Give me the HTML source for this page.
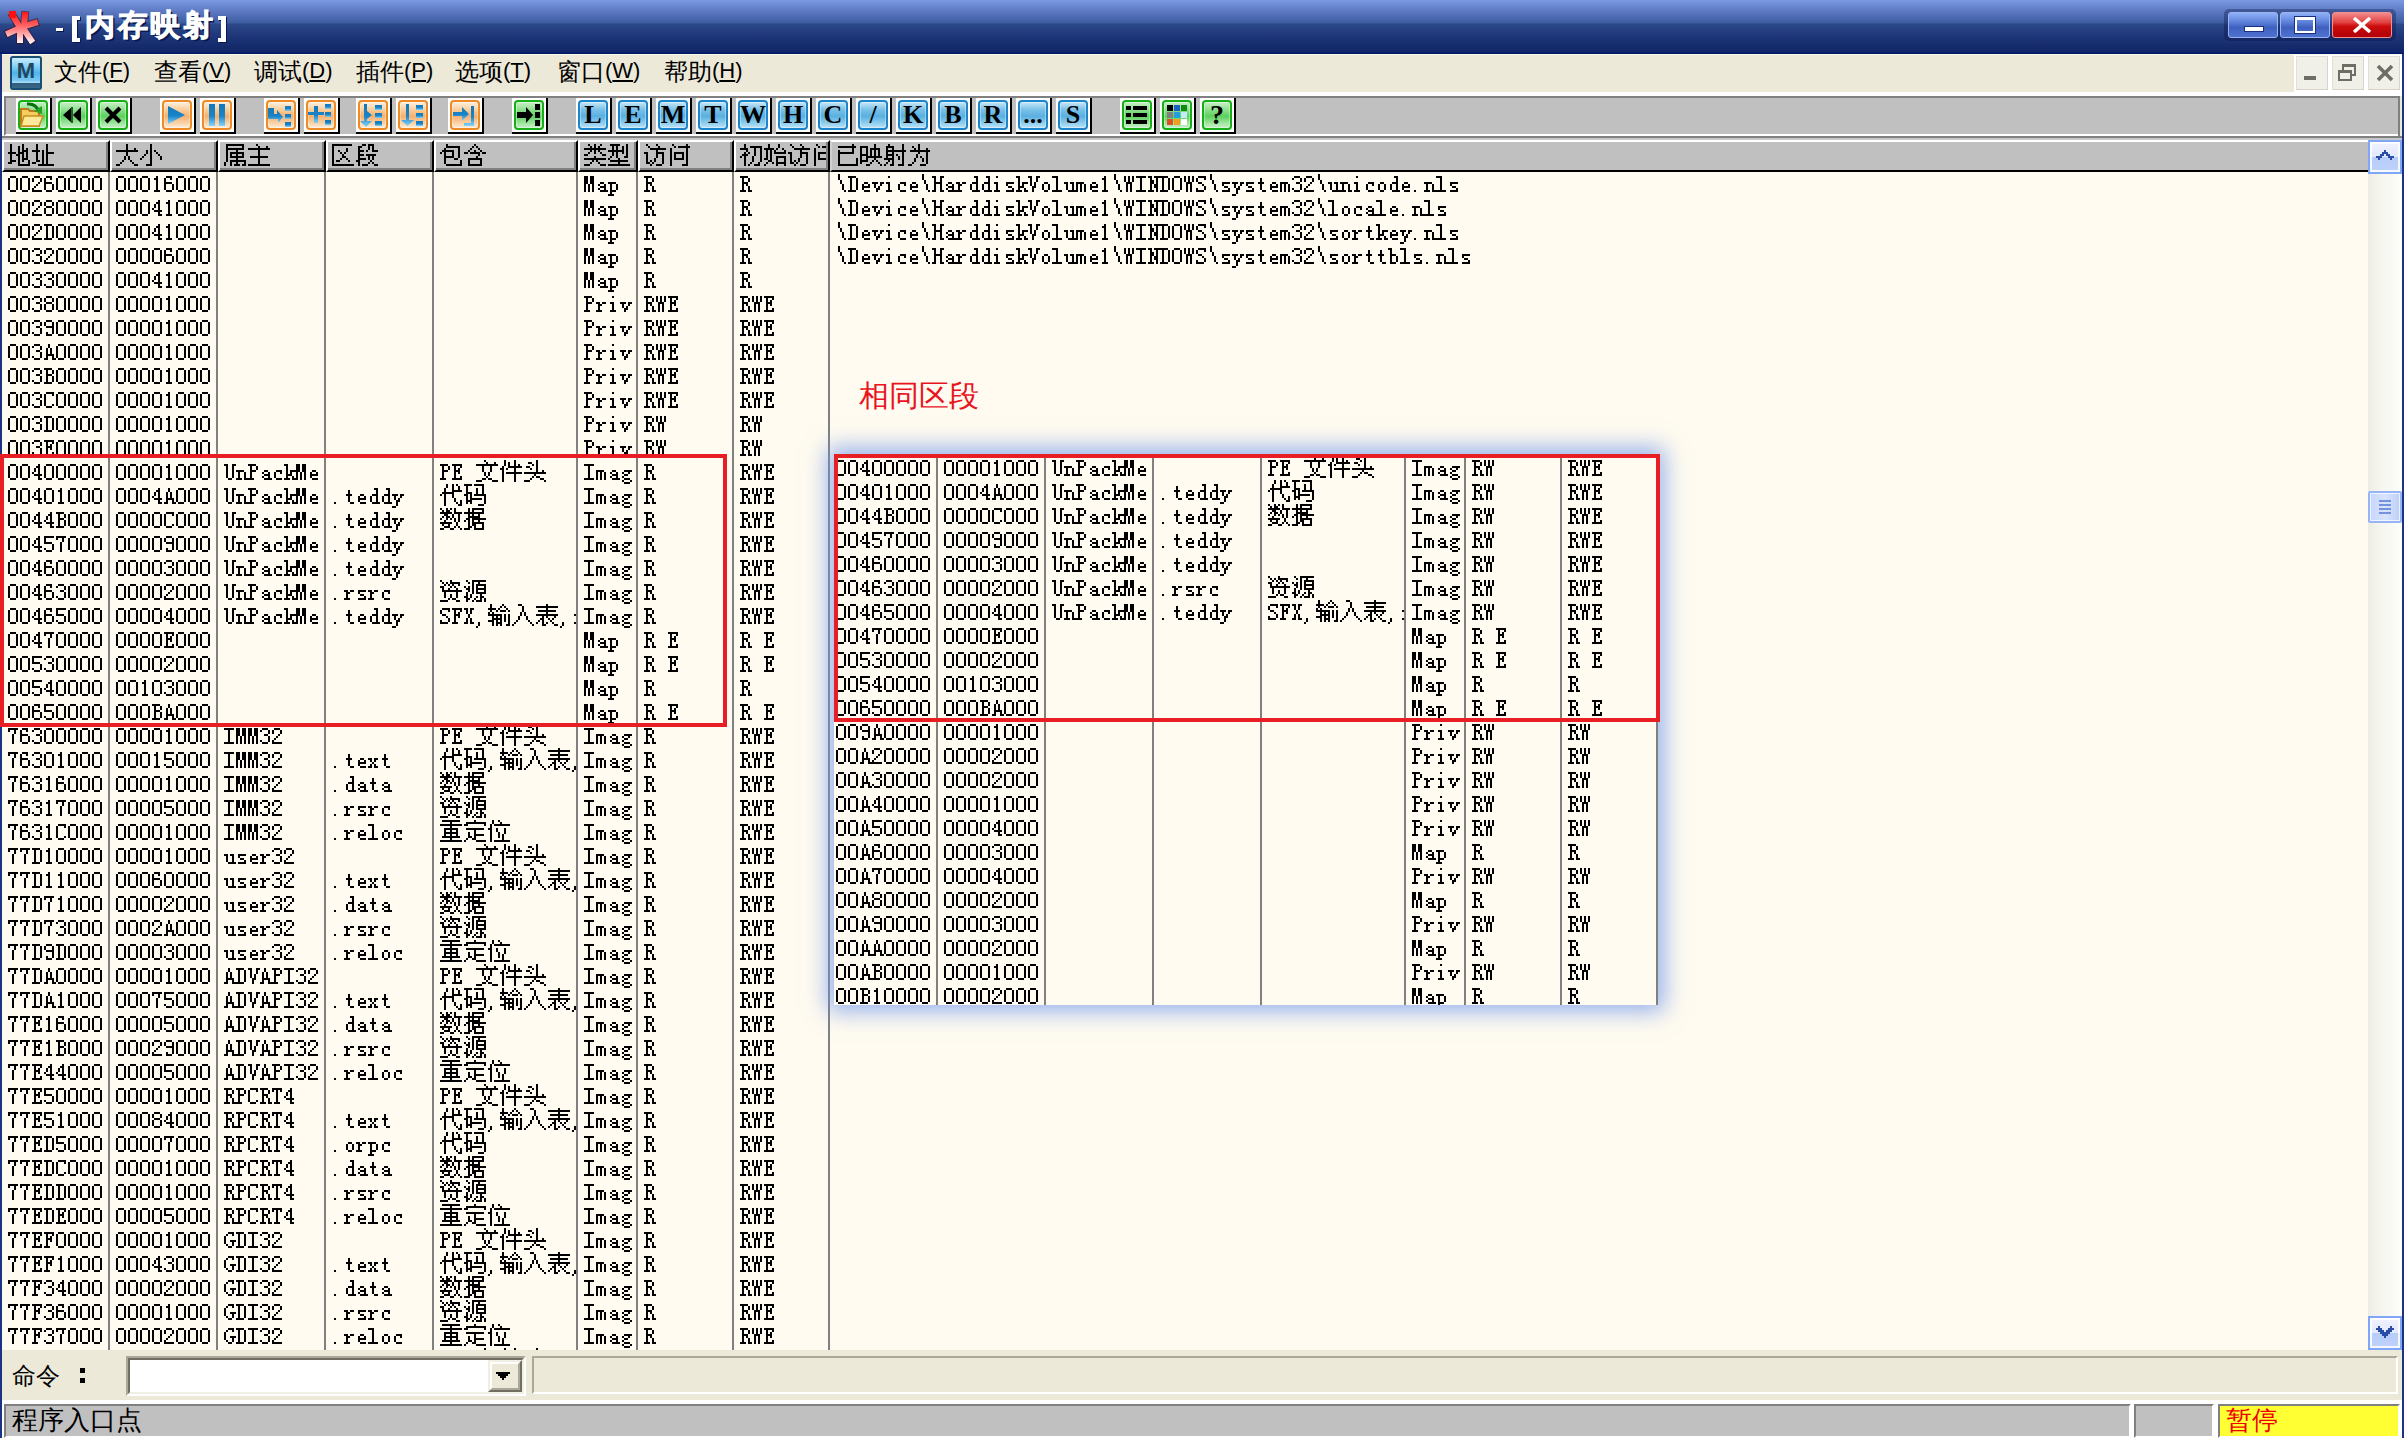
<!DOCTYPE html>
<html><head><meta charset="utf-8"><title>OllyDbg</title>
<style>
*{margin:0;padding:0;box-sizing:border-box}
html,body{width:2404px;height:1438px;overflow:hidden;background:#ECE9D8;position:relative;font-family:"Liberation Mono",monospace}
.a{position:absolute}
.col{position:absolute;overflow:hidden}
.t{position:absolute;font-family:"Liberation Mono",monospace;font-size:24px;line-height:24px;height:24px;white-space:pre;color:#000;transform:scaleX(0.8333);transform-origin:0 0;letter-spacing:0}
.c{position:absolute;font-family:"Liberation Sans",sans-serif;font-size:24px;line-height:24px;height:24px;white-space:pre;color:#000;letter-spacing:0}
.hd{position:absolute;top:140px;height:32px;background:#C0C0C0;border-top:2px solid #fff;border-left:2px solid #fff;border-right:2px solid #000;border-bottom:2px solid #000;overflow:hidden}
.hd i{position:absolute;right:0;top:0;bottom:0;width:2px;background:#808080}
.hd b{position:absolute;left:0;right:0;bottom:0;height:2px;background:#808080}
.vd{position:absolute;width:2px;background:#808080}
</style></head><body>

<svg width="0" height="0" style="position:absolute"><defs><path id="g2c" d="M2 18h2v2h-2zM2 20h2v2h-2zM0 22h2v2h-2z"/><path id="g2e" d="M2 18h2v2h-2z"/><path id="g30" d="M2 4h6v2h-6zM0 6h2v2h-2zM8 6h2v2h-2zM0 8h2v2h-2zM8 8h2v2h-2zM0 10h2v2h-2zM8 10h2v2h-2zM0 12h2v2h-2zM8 12h2v2h-2zM0 14h2v2h-2zM8 14h2v2h-2zM0 16h2v2h-2zM8 16h2v2h-2zM2 18h6v2h-6z"/><path id="g31" d="M4 4h2v2h-2zM2 6h4v2h-4zM4 8h2v2h-2zM4 10h2v2h-2zM4 12h2v2h-2zM4 14h2v2h-2zM4 16h2v2h-2zM2 18h6v2h-6z"/><path id="g32" d="M2 4h6v2h-6zM0 6h2v2h-2zM8 6h2v2h-2zM0 8h2v2h-2zM8 8h2v2h-2zM6 10h2v2h-2zM4 12h2v2h-2zM2 14h2v2h-2zM0 16h2v2h-2zM0 18h10v2h-10z"/><path id="g33" d="M2 4h6v2h-6zM0 6h2v2h-2zM8 6h2v2h-2zM8 8h2v2h-2zM4 10h4v2h-4zM8 12h2v2h-2zM8 14h2v2h-2zM0 16h2v2h-2zM8 16h2v2h-2zM2 18h6v2h-6z"/><path id="g34" d="M6 4h2v2h-2zM4 6h4v2h-4zM2 8h2v2h-2zM6 8h2v2h-2zM2 10h2v2h-2zM6 10h2v2h-2zM0 12h2v2h-2zM6 12h2v2h-2zM2 14h8v2h-8zM6 16h2v2h-2zM6 18h4v2h-4z"/><path id="g35" d="M0 4h10v2h-10zM0 6h2v2h-2zM0 8h2v2h-2zM0 10h8v2h-8zM8 12h2v2h-2zM8 14h2v2h-2zM0 16h2v2h-2zM8 16h2v2h-2zM2 18h6v2h-6z"/><path id="g36" d="M2 4h6v2h-6zM0 6h2v2h-2zM6 6h2v2h-2zM0 8h2v2h-2zM0 10h8v2h-8zM0 12h2v2h-2zM8 12h2v2h-2zM0 14h2v2h-2zM8 14h2v2h-2zM0 16h2v2h-2zM8 16h2v2h-2zM2 18h6v2h-6z"/><path id="g37" d="M0 4h10v2h-10zM0 6h2v2h-2zM6 6h2v2h-2zM6 8h2v2h-2zM4 10h2v2h-2zM4 12h2v2h-2zM4 14h2v2h-2zM4 16h2v2h-2zM4 18h2v2h-2z"/><path id="g38" d="M2 4h6v2h-6zM0 6h2v2h-2zM8 6h2v2h-2zM0 8h2v2h-2zM8 8h2v2h-2zM2 10h6v2h-6zM0 12h2v2h-2zM8 12h2v2h-2zM0 14h2v2h-2zM8 14h2v2h-2zM0 16h2v2h-2zM8 16h2v2h-2zM2 18h6v2h-6z"/><path id="g39" d="M2 4h6v2h-6zM0 6h2v2h-2zM8 6h2v2h-2zM0 8h2v2h-2zM8 8h2v2h-2zM2 10h8v2h-8zM8 12h2v2h-2zM8 14h2v2h-2zM2 16h2v2h-2zM8 16h2v2h-2zM2 18h6v2h-6z"/><path id="g41" d="M4 4h2v2h-2zM4 6h2v2h-2zM2 8h2v2h-2zM6 8h2v2h-2zM2 10h2v2h-2zM6 10h2v2h-2zM2 12h2v2h-2zM6 12h2v2h-2zM2 14h8v2h-8zM2 16h2v2h-2zM8 16h2v2h-2zM0 18h4v2h-4zM8 18h4v2h-4z"/><path id="g42" d="M0 4h8v2h-8zM2 6h2v2h-2zM8 6h2v2h-2zM2 8h2v2h-2zM8 8h2v2h-2zM2 10h6v2h-6zM2 12h2v2h-2zM8 12h2v2h-2zM2 14h2v2h-2zM8 14h2v2h-2zM2 16h2v2h-2zM8 16h2v2h-2zM0 18h8v2h-8z"/><path id="g43" d="M2 4h8v2h-8zM0 6h2v2h-2zM8 6h2v2h-2zM0 8h2v2h-2zM0 10h2v2h-2zM0 12h2v2h-2zM0 14h2v2h-2zM0 16h2v2h-2zM8 16h2v2h-2zM2 18h6v2h-6z"/><path id="g44" d="M0 4h8v2h-8zM2 6h2v2h-2zM8 6h2v2h-2zM2 8h2v2h-2zM8 8h2v2h-2zM2 10h2v2h-2zM8 10h2v2h-2zM2 12h2v2h-2zM8 12h2v2h-2zM2 14h2v2h-2zM8 14h2v2h-2zM2 16h2v2h-2zM8 16h2v2h-2zM0 18h8v2h-8z"/><path id="g45" d="M0 4h10v2h-10zM2 6h2v2h-2zM8 6h2v2h-2zM2 8h2v2h-2zM6 8h2v2h-2zM2 10h6v2h-6zM2 12h2v2h-2zM6 12h2v2h-2zM2 14h2v2h-2zM2 16h2v2h-2zM8 16h2v2h-2zM0 18h10v2h-10z"/><path id="g46" d="M0 4h10v2h-10zM2 6h2v2h-2zM8 6h2v2h-2zM2 8h2v2h-2zM6 8h2v2h-2zM2 10h6v2h-6zM2 12h2v2h-2zM6 12h2v2h-2zM2 14h2v2h-2zM2 16h2v2h-2zM0 18h6v2h-6z"/><path id="g47" d="M4 4h6v2h-6zM2 6h2v2h-2zM8 6h2v2h-2zM0 8h2v2h-2zM0 10h2v2h-2zM0 12h2v2h-2zM6 12h6v2h-6zM0 14h2v2h-2zM8 14h2v2h-2zM2 16h2v2h-2zM8 16h2v2h-2zM4 18h4v2h-4z"/><path id="g48" d="M0 4h4v2h-4zM8 4h4v2h-4zM2 6h2v2h-2zM8 6h2v2h-2zM2 8h2v2h-2zM8 8h2v2h-2zM2 10h8v2h-8zM2 12h2v2h-2zM8 12h2v2h-2zM2 14h2v2h-2zM8 14h2v2h-2zM2 16h2v2h-2zM8 16h2v2h-2zM0 18h4v2h-4zM8 18h4v2h-4z"/><path id="g49" d="M0 4h10v2h-10zM4 6h2v2h-2zM4 8h2v2h-2zM4 10h2v2h-2zM4 12h2v2h-2zM4 14h2v2h-2zM4 16h2v2h-2zM0 18h10v2h-10z"/><path id="g4d" d="M0 4h4v2h-4zM6 4h4v2h-4zM0 6h4v2h-4zM6 6h4v2h-4zM0 8h4v2h-4zM6 8h4v2h-4zM0 10h4v2h-4zM6 10h4v2h-4zM0 12h2v2h-2zM4 12h2v2h-2zM8 12h2v2h-2zM0 14h2v2h-2zM4 14h2v2h-2zM8 14h2v2h-2zM0 16h2v2h-2zM4 16h2v2h-2zM8 16h2v2h-2zM0 18h2v2h-2zM4 18h2v2h-2zM8 18h2v2h-2z"/><path id="g4e" d="M0 4h4v2h-4zM6 4h6v2h-6zM2 6h2v2h-2zM8 6h2v2h-2zM2 8h4v2h-4zM8 8h2v2h-2zM2 10h4v2h-4zM8 10h2v2h-2zM2 12h2v2h-2zM6 12h4v2h-4zM2 14h2v2h-2zM6 14h4v2h-4zM2 16h2v2h-2zM8 16h2v2h-2zM0 18h6v2h-6zM8 18h2v2h-2z"/><path id="g4f" d="M2 4h6v2h-6zM0 6h2v2h-2zM8 6h2v2h-2zM0 8h2v2h-2zM8 8h2v2h-2zM0 10h2v2h-2zM8 10h2v2h-2zM0 12h2v2h-2zM8 12h2v2h-2zM0 14h2v2h-2zM8 14h2v2h-2zM0 16h2v2h-2zM8 16h2v2h-2zM2 18h6v2h-6z"/><path id="g50" d="M0 4h8v2h-8zM2 6h2v2h-2zM8 6h2v2h-2zM2 8h2v2h-2zM8 8h2v2h-2zM2 10h6v2h-6zM2 12h2v2h-2zM2 14h2v2h-2zM2 16h2v2h-2zM0 18h6v2h-6z"/><path id="g52" d="M0 4h8v2h-8zM2 6h2v2h-2zM8 6h2v2h-2zM2 8h2v2h-2zM8 8h2v2h-2zM2 10h6v2h-6zM2 12h2v2h-2zM6 12h2v2h-2zM2 14h2v2h-2zM8 14h2v2h-2zM2 16h2v2h-2zM8 16h2v2h-2zM0 18h6v2h-6zM8 18h4v2h-4z"/><path id="g53" d="M2 4h8v2h-8zM0 6h2v2h-2zM8 6h2v2h-2zM0 8h2v2h-2zM2 10h4v2h-4zM6 12h2v2h-2zM8 14h2v2h-2zM0 16h2v2h-2zM8 16h2v2h-2zM0 18h8v2h-8z"/><path id="g54" d="M0 4h10v2h-10zM0 6h2v2h-2zM4 6h2v2h-2zM8 6h2v2h-2zM4 8h2v2h-2zM4 10h2v2h-2zM4 12h2v2h-2zM4 14h2v2h-2zM4 16h2v2h-2zM2 18h6v2h-6z"/><path id="g55" d="M0 4h4v2h-4zM8 4h4v2h-4zM2 6h2v2h-2zM8 6h2v2h-2zM2 8h2v2h-2zM8 8h2v2h-2zM2 10h2v2h-2zM8 10h2v2h-2zM2 12h2v2h-2zM8 12h2v2h-2zM2 14h2v2h-2zM8 14h2v2h-2zM2 16h2v2h-2zM8 16h2v2h-2zM4 18h4v2h-4z"/><path id="g56" d="M0 4h4v2h-4zM8 4h4v2h-4zM2 6h2v2h-2zM8 6h2v2h-2zM2 8h2v2h-2zM8 8h2v2h-2zM2 10h2v2h-2zM6 10h2v2h-2zM2 12h2v2h-2zM6 12h2v2h-2zM4 14h4v2h-4zM4 16h2v2h-2zM4 18h2v2h-2z"/><path id="g57" d="M0 4h2v2h-2zM4 4h2v2h-2zM8 4h2v2h-2zM0 6h2v2h-2zM4 6h2v2h-2zM8 6h2v2h-2zM0 8h2v2h-2zM4 8h2v2h-2zM8 8h2v2h-2zM2 10h6v2h-6zM2 12h2v2h-2zM6 12h2v2h-2zM2 14h2v2h-2zM6 14h2v2h-2zM2 16h2v2h-2zM6 16h2v2h-2zM2 18h2v2h-2zM6 18h2v2h-2z"/><path id="g58" d="M0 4h4v2h-4zM6 4h4v2h-4zM2 6h2v2h-2zM6 6h2v2h-2zM2 8h2v2h-2zM6 8h2v2h-2zM4 10h2v2h-2zM4 12h2v2h-2zM2 14h2v2h-2zM6 14h2v2h-2zM2 16h2v2h-2zM6 16h2v2h-2zM0 18h4v2h-4zM6 18h4v2h-4z"/><path id="g5c" d="M2 2h2v2h-2zM2 4h2v2h-2zM2 6h2v2h-2zM4 8h2v2h-2zM4 10h2v2h-2zM6 12h2v2h-2zM6 14h2v2h-2zM6 16h2v2h-2zM8 18h2v2h-2z"/><path id="g61" d="M4 10h4v2h-4zM2 12h2v2h-2zM8 12h2v2h-2zM4 14h6v2h-6zM2 16h2v2h-2zM8 16h2v2h-2zM4 18h8v2h-8z"/><path id="g62" d="M0 4h4v2h-4zM2 6h2v2h-2zM2 8h2v2h-2zM2 10h6v2h-6zM2 12h2v2h-2zM8 12h2v2h-2zM2 14h2v2h-2zM8 14h2v2h-2zM2 16h2v2h-2zM8 16h2v2h-2zM2 18h6v2h-6z"/><path id="g63" d="M4 10h6v2h-6zM2 12h2v2h-2zM8 12h2v2h-2zM2 14h2v2h-2zM2 16h2v2h-2zM4 18h6v2h-6z"/><path id="g64" d="M6 4h4v2h-4zM8 6h2v2h-2zM8 8h2v2h-2zM4 10h6v2h-6zM2 12h2v2h-2zM8 12h2v2h-2zM2 14h2v2h-2zM8 14h2v2h-2zM2 16h2v2h-2zM8 16h2v2h-2zM4 18h8v2h-8z"/><path id="g65" d="M4 10h4v2h-4zM2 12h2v2h-2zM8 12h2v2h-2zM2 14h8v2h-8zM2 16h2v2h-2zM4 18h6v2h-6z"/><path id="g67" d="M4 10h8v2h-8zM2 12h2v2h-2zM8 12h2v2h-2zM4 14h4v2h-4zM2 16h2v2h-2zM4 18h6v2h-6zM2 20h2v2h-2zM10 20h2v2h-2zM4 22h6v2h-6z"/><path id="g69" d="M4 4h2v2h-2zM2 10h4v2h-4zM4 12h2v2h-2zM4 14h2v2h-2zM4 16h2v2h-2zM2 18h6v2h-6z"/><path id="g6b" d="M0 4h4v2h-4zM2 6h2v2h-2zM2 8h2v2h-2zM2 10h2v2h-2zM6 10h6v2h-6zM2 12h2v2h-2zM6 12h2v2h-2zM2 14h6v2h-6zM2 16h2v2h-2zM8 16h2v2h-2zM0 18h6v2h-6zM8 18h4v2h-4z"/><path id="g6c" d="M0 4h6v2h-6zM4 6h2v2h-2zM4 8h2v2h-2zM4 10h2v2h-2zM4 12h2v2h-2zM4 14h2v2h-2zM4 16h2v2h-2zM0 18h10v2h-10z"/><path id="g6d" d="M0 10h8v2h-8zM0 12h2v2h-2zM4 12h2v2h-2zM8 12h2v2h-2zM0 14h2v2h-2zM4 14h2v2h-2zM8 14h2v2h-2zM0 16h2v2h-2zM4 16h2v2h-2zM8 16h2v2h-2zM0 18h2v2h-2zM4 18h2v2h-2zM8 18h2v2h-2z"/><path id="g6e" d="M0 10h8v2h-8zM2 12h2v2h-2zM8 12h2v2h-2zM2 14h2v2h-2zM8 14h2v2h-2zM2 16h2v2h-2zM8 16h2v2h-2zM0 18h6v2h-6zM8 18h4v2h-4z"/><path id="g6f" d="M4 10h4v2h-4zM2 12h2v2h-2zM8 12h2v2h-2zM2 14h2v2h-2zM8 14h2v2h-2zM2 16h2v2h-2zM8 16h2v2h-2zM4 18h4v2h-4z"/><path id="g70" d="M0 10h8v2h-8zM2 12h2v2h-2zM8 12h2v2h-2zM2 14h2v2h-2zM8 14h2v2h-2zM2 16h2v2h-2zM8 16h2v2h-2zM2 18h6v2h-6zM2 20h2v2h-2zM0 22h6v2h-6z"/><path id="g72" d="M0 10h4v2h-4zM6 10h4v2h-4zM2 12h4v2h-4zM2 14h2v2h-2zM2 16h2v2h-2zM0 18h6v2h-6z"/><path id="g73" d="M2 10h8v2h-8zM2 12h2v2h-2zM4 14h4v2h-4zM8 16h2v2h-2zM2 18h8v2h-8z"/><path id="g74" d="M4 6h2v2h-2zM4 8h2v2h-2zM2 10h6v2h-6zM4 12h2v2h-2zM4 14h2v2h-2zM4 16h2v2h-2zM6 18h4v2h-4z"/><path id="g75" d="M0 10h4v2h-4zM6 10h4v2h-4zM2 12h2v2h-2zM8 12h2v2h-2zM2 14h2v2h-2zM8 14h2v2h-2zM2 16h2v2h-2zM8 16h2v2h-2zM4 18h8v2h-8z"/><path id="g76" d="M0 10h6v2h-6zM8 10h4v2h-4zM2 12h2v2h-2zM8 12h2v2h-2zM2 14h2v2h-2zM6 14h2v2h-2zM4 16h4v2h-4zM4 18h2v2h-2z"/><path id="g78" d="M0 10h4v2h-4zM6 10h4v2h-4zM2 12h2v2h-2zM6 12h2v2h-2zM4 14h2v2h-2zM2 16h2v2h-2zM6 16h2v2h-2zM0 18h4v2h-4zM6 18h4v2h-4z"/><path id="g79" d="M0 10h6v2h-6zM8 10h4v2h-4zM2 12h2v2h-2zM8 12h2v2h-2zM2 14h2v2h-2zM6 14h2v2h-2zM4 16h4v2h-4zM4 18h2v2h-2zM4 20h2v2h-2zM0 22h4v2h-4z"/><path id="g4e3a" d="M10 0h2v2h-2zM4 2h2v2h-2zM10 2h2v2h-2zM6 4h2v2h-2zM10 4h2v2h-2zM18 4h2v2h-2zM2 6h20v2h-20zM10 8h2v2h-2zM18 8h2v2h-2zM8 10h2v2h-2zM18 10h2v2h-2zM8 12h2v2h-2zM12 12h2v2h-2zM18 12h2v2h-2zM6 14h2v2h-2zM14 14h2v2h-2zM18 14h2v2h-2zM6 16h2v2h-2zM14 16h2v2h-2zM18 16h2v2h-2zM4 18h2v2h-2zM18 18h2v2h-2zM0 20h4v2h-4zM12 20h6v2h-6z"/><path id="g4e3b" d="M8 0h2v2h-2zM10 2h2v2h-2zM18 2h2v2h-2zM0 4h22v2h-22zM10 6h2v2h-2zM10 8h2v2h-2zM10 10h2v2h-2zM2 12h18v2h-18zM10 14h2v2h-2zM10 16h2v2h-2zM10 18h2v2h-2zM0 20h22v2h-22z"/><path id="g4ee3" d="M6 0h2v2h-2zM12 0h2v2h-2zM16 0h2v2h-2zM6 2h2v2h-2zM12 2h2v2h-2zM18 2h2v2h-2zM4 4h2v2h-2zM12 4h2v2h-2zM18 4h2v2h-2zM4 6h2v2h-2zM12 6h10v2h-10zM2 8h12v2h-12zM0 10h2v2h-2zM4 10h2v2h-2zM12 10h2v2h-2zM4 12h2v2h-2zM12 12h2v2h-2zM4 14h2v2h-2zM14 14h2v2h-2zM4 16h2v2h-2zM14 16h2v2h-2zM20 16h2v2h-2zM4 18h2v2h-2zM16 18h2v2h-2zM20 18h2v2h-2zM4 20h2v2h-2zM18 20h4v2h-4z"/><path id="g4ef6" d="M4 0h2v2h-2zM14 0h2v2h-2zM4 2h2v2h-2zM8 2h2v2h-2zM14 2h2v2h-2zM4 4h2v2h-2zM8 4h2v2h-2zM14 4h2v2h-2zM18 4h2v2h-2zM2 6h2v2h-2zM8 6h14v2h-14zM0 8h4v2h-4zM6 8h2v2h-2zM14 8h2v2h-2zM2 10h2v2h-2zM14 10h2v2h-2zM2 12h2v2h-2zM6 12h16v2h-16zM2 14h2v2h-2zM14 14h2v2h-2zM2 16h2v2h-2zM14 16h2v2h-2zM2 18h2v2h-2zM14 18h2v2h-2zM2 20h2v2h-2zM14 20h2v2h-2z"/><path id="g4f4d" d="M4 0h2v2h-2zM10 0h2v2h-2zM4 2h2v2h-2zM12 2h2v2h-2zM2 4h2v2h-2zM6 4h16v2h-16zM2 6h2v2h-2zM0 8h4v2h-4zM8 8h2v2h-2zM16 8h2v2h-2zM2 10h2v2h-2zM8 10h2v2h-2zM16 10h2v2h-2zM2 12h2v2h-2zM10 12h2v2h-2zM16 12h2v2h-2zM2 14h2v2h-2zM10 14h2v2h-2zM14 14h2v2h-2zM2 16h2v2h-2zM10 16h2v2h-2zM14 16h2v2h-2zM2 18h2v2h-2zM14 18h2v2h-2zM2 20h2v2h-2zM6 20h16v2h-16z"/><path id="g5165" d="M6 0h4v2h-4zM10 2h2v2h-2zM10 4h2v2h-2zM10 6h2v2h-2zM8 8h2v2h-2zM12 8h2v2h-2zM8 10h2v2h-2zM12 10h2v2h-2zM6 12h2v2h-2zM14 12h2v2h-2zM6 14h2v2h-2zM14 14h2v2h-2zM4 16h2v2h-2zM16 16h2v2h-2zM2 18h2v2h-2zM18 18h2v2h-2zM0 20h2v2h-2zM20 20h2v2h-2z"/><path id="g521d" d="M4 0h2v2h-2zM4 2h2v2h-2zM10 2h12v2h-12zM0 4h8v2h-8zM14 4h2v2h-2zM20 4h2v2h-2zM6 6h2v2h-2zM14 6h2v2h-2zM20 6h2v2h-2zM4 8h2v2h-2zM8 8h2v2h-2zM14 8h2v2h-2zM20 8h2v2h-2zM2 10h6v2h-6zM14 10h2v2h-2zM20 10h2v2h-2zM0 12h2v2h-2zM4 12h2v2h-2zM12 12h2v2h-2zM20 12h2v2h-2zM4 14h2v2h-2zM12 14h2v2h-2zM20 14h2v2h-2zM4 16h2v2h-2zM12 16h2v2h-2zM20 16h2v2h-2zM4 18h2v2h-2zM10 18h2v2h-2zM18 18h2v2h-2zM4 20h2v2h-2zM8 20h2v2h-2zM14 20h6v2h-6z"/><path id="g5305" d="M6 0h2v2h-2zM6 2h14v2h-14zM4 4h2v2h-2zM18 4h2v2h-2zM2 6h12v2h-12zM18 6h2v2h-2zM0 8h2v2h-2zM4 8h2v2h-2zM12 8h2v2h-2zM18 8h2v2h-2zM4 10h2v2h-2zM12 10h2v2h-2zM18 10h2v2h-2zM4 12h10v2h-10zM18 12h2v2h-2zM4 14h2v2h-2zM14 14h4v2h-4zM4 16h2v2h-2zM20 16h2v2h-2zM4 18h2v2h-2zM20 18h2v2h-2zM6 20h16v2h-16z"/><path id="g533a" d="M0 0h20v2h-20zM0 2h2v2h-2zM0 4h2v2h-2zM14 4h2v2h-2zM0 6h2v2h-2zM6 6h2v2h-2zM14 6h2v2h-2zM0 8h2v2h-2zM8 8h2v2h-2zM12 8h2v2h-2zM0 10h2v2h-2zM10 10h2v2h-2zM0 12h2v2h-2zM10 12h4v2h-4zM0 14h2v2h-2zM8 14h2v2h-2zM14 14h2v2h-2zM0 16h2v2h-2zM4 16h4v2h-4zM16 16h2v2h-2zM0 18h2v2h-2zM0 20h22v2h-22z"/><path id="g542b" d="M10 0h2v2h-2zM8 2h2v2h-2zM12 2h2v2h-2zM6 4h2v2h-2zM14 4h2v2h-2zM4 6h2v2h-2zM10 6h2v2h-2zM16 6h2v2h-2zM0 8h4v2h-4zM6 8h10v2h-10zM18 8h4v2h-4zM14 10h2v2h-2zM12 12h2v2h-2zM4 14h14v2h-14zM4 16h2v2h-2zM16 16h2v2h-2zM4 18h2v2h-2zM16 18h2v2h-2zM4 20h14v2h-14z"/><path id="g5730" d="M2 0h2v2h-2zM14 0h2v2h-2zM2 2h2v2h-2zM10 2h2v2h-2zM14 2h2v2h-2zM2 4h2v2h-2zM10 4h2v2h-2zM14 4h2v2h-2zM18 4h2v2h-2zM2 6h2v2h-2zM10 6h2v2h-2zM14 6h6v2h-6zM0 8h8v2h-8zM10 8h6v2h-6zM18 8h2v2h-2zM2 10h2v2h-2zM8 10h4v2h-4zM14 10h2v2h-2zM18 10h2v2h-2zM2 12h2v2h-2zM10 12h2v2h-2zM14 12h2v2h-2zM18 12h2v2h-2zM2 14h2v2h-2zM10 14h2v2h-2zM14 14h6v2h-6zM2 16h6v2h-6zM10 16h2v2h-2zM14 16h2v2h-2zM20 16h2v2h-2zM0 18h4v2h-4zM10 18h2v2h-2zM20 18h2v2h-2zM10 20h12v2h-12z"/><path id="g5740" d="M4 0h2v2h-2zM14 0h2v2h-2zM4 2h2v2h-2zM14 2h2v2h-2zM4 4h2v2h-2zM14 4h2v2h-2zM0 6h8v2h-8zM10 6h2v2h-2zM14 6h2v2h-2zM4 8h2v2h-2zM10 8h2v2h-2zM14 8h8v2h-8zM4 10h2v2h-2zM10 10h2v2h-2zM14 10h2v2h-2zM4 12h2v2h-2zM10 12h2v2h-2zM14 12h2v2h-2zM4 14h2v2h-2zM10 14h2v2h-2zM14 14h2v2h-2zM4 16h4v2h-4zM10 16h2v2h-2zM14 16h2v2h-2zM0 18h4v2h-4zM10 18h2v2h-2zM14 18h2v2h-2zM6 20h16v2h-16z"/><path id="g578b" d="M2 0h10v2h-10zM18 0h2v2h-2zM4 2h2v2h-2zM8 2h2v2h-2zM14 2h2v2h-2zM18 2h2v2h-2zM4 4h2v2h-2zM8 4h2v2h-2zM14 4h2v2h-2zM18 4h2v2h-2zM0 6h16v2h-16zM18 6h2v2h-2zM4 8h2v2h-2zM8 8h2v2h-2zM14 8h2v2h-2zM18 8h2v2h-2zM4 10h2v2h-2zM8 10h2v2h-2zM18 10h2v2h-2zM2 12h2v2h-2zM8 12h2v2h-2zM16 12h4v2h-4zM0 14h2v2h-2zM10 14h2v2h-2zM2 16h18v2h-18zM10 18h2v2h-2zM0 20h22v2h-22z"/><path id="g5927" d="M10 0h2v2h-2zM10 2h2v2h-2zM10 4h2v2h-2zM18 4h2v2h-2zM0 6h22v2h-22zM10 8h2v2h-2zM10 10h2v2h-2zM8 12h2v2h-2zM12 12h2v2h-2zM8 14h2v2h-2zM12 14h2v2h-2zM6 16h2v2h-2zM14 16h2v2h-2zM4 18h2v2h-2zM16 18h2v2h-2zM0 20h4v2h-4zM18 20h4v2h-4z"/><path id="g5934" d="M12 0h2v2h-2zM4 2h4v2h-4zM12 2h2v2h-2zM8 4h2v2h-2zM12 4h2v2h-2zM2 6h4v2h-4zM12 6h2v2h-2zM6 8h2v2h-2zM12 8h2v2h-2zM12 10h2v2h-2zM18 10h2v2h-2zM0 12h22v2h-22zM10 14h2v2h-2zM8 16h2v2h-2zM12 16h4v2h-4zM6 18h2v2h-2zM16 18h4v2h-4zM0 20h6v2h-6zM20 20h2v2h-2z"/><path id="g59cb" d="M4 0h2v2h-2zM14 0h2v2h-2zM4 2h2v2h-2zM14 2h2v2h-2zM0 4h10v2h-10zM12 4h2v2h-2zM18 4h2v2h-2zM2 6h2v2h-2zM6 6h2v2h-2zM10 6h2v2h-2zM20 6h2v2h-2zM2 8h2v2h-2zM6 8h2v2h-2zM10 8h12v2h-12zM2 10h2v2h-2zM6 10h2v2h-2zM2 12h2v2h-2zM6 12h2v2h-2zM12 12h10v2h-10zM0 14h4v2h-4zM6 14h2v2h-2zM12 14h2v2h-2zM20 14h2v2h-2zM4 16h4v2h-4zM12 16h2v2h-2zM20 16h2v2h-2zM2 18h2v2h-2zM8 18h2v2h-2zM12 18h10v2h-10zM0 20h2v2h-2zM12 20h2v2h-2zM20 20h2v2h-2z"/><path id="g5b9a" d="M10 0h2v2h-2zM2 2h20v2h-20zM0 4h4v2h-4zM20 4h2v2h-2zM2 8h18v2h-18zM10 10h2v2h-2zM4 12h2v2h-2zM10 12h2v2h-2zM4 14h2v2h-2zM10 14h10v2h-10zM4 16h4v2h-4zM10 16h2v2h-2zM2 18h2v2h-2zM8 18h4v2h-4zM0 20h2v2h-2zM12 20h10v2h-10z"/><path id="g5c04" d="M4 0h2v2h-2zM18 0h2v2h-2zM2 2h8v2h-8zM18 2h2v2h-2zM2 4h2v2h-2zM8 4h2v2h-2zM18 4h2v2h-2zM2 6h20v2h-20zM2 8h2v2h-2zM8 8h2v2h-2zM18 8h2v2h-2zM2 10h8v2h-8zM12 10h2v2h-2zM18 10h2v2h-2zM2 12h2v2h-2zM8 12h2v2h-2zM14 12h2v2h-2zM18 12h2v2h-2zM0 14h10v2h-10zM14 14h2v2h-2zM18 14h2v2h-2zM4 16h2v2h-2zM8 16h2v2h-2zM18 16h2v2h-2zM2 18h2v2h-2zM8 18h2v2h-2zM18 18h2v2h-2zM0 20h2v2h-2zM6 20h4v2h-4zM14 20h6v2h-6z"/><path id="g5c0f" d="M10 0h2v2h-2zM10 2h2v2h-2zM10 4h2v2h-2zM6 6h2v2h-2zM10 6h2v2h-2zM14 6h2v2h-2zM6 8h2v2h-2zM10 8h2v2h-2zM16 8h2v2h-2zM4 10h2v2h-2zM10 10h2v2h-2zM18 10h2v2h-2zM2 12h2v2h-2zM10 12h2v2h-2zM20 12h2v2h-2zM0 14h2v2h-2zM10 14h2v2h-2zM20 14h2v2h-2zM10 16h2v2h-2zM10 18h2v2h-2zM6 20h6v2h-6z"/><path id="g5c5e" d="M2 0h18v2h-18zM2 2h2v2h-2zM18 2h2v2h-2zM2 4h18v2h-18zM2 6h2v2h-2zM12 6h2v2h-2zM2 8h2v2h-2zM6 8h14v2h-14zM2 10h2v2h-2zM6 10h2v2h-2zM12 10h2v2h-2zM18 10h2v2h-2zM2 12h2v2h-2zM6 12h14v2h-14zM2 14h2v2h-2zM12 14h2v2h-2zM2 16h2v2h-2zM6 16h16v2h-16zM0 18h2v2h-2zM6 18h2v2h-2zM12 18h2v2h-2zM20 18h2v2h-2zM0 20h2v2h-2zM6 20h2v2h-2zM10 20h6v2h-6zM18 20h4v2h-4z"/><path id="g5df2" d="M16 0h2v2h-2zM2 2h18v2h-18zM16 4h2v2h-2zM2 6h2v2h-2zM16 6h2v2h-2zM2 8h16v2h-16zM2 10h2v2h-2zM2 12h2v2h-2zM2 14h2v2h-2zM20 14h2v2h-2zM2 16h2v2h-2zM20 16h2v2h-2zM2 18h2v2h-2zM20 18h2v2h-2zM2 20h20v2h-20z"/><path id="g636e" d="M4 0h2v2h-2zM8 0h12v2h-12zM4 2h2v2h-2zM8 2h2v2h-2zM18 2h2v2h-2zM0 4h20v2h-20zM4 6h2v2h-2zM8 6h2v2h-2zM14 6h2v2h-2zM4 8h12v2h-12zM2 10h4v2h-4zM8 10h14v2h-14zM0 12h2v2h-2zM4 12h2v2h-2zM8 12h2v2h-2zM14 12h2v2h-2zM4 14h2v2h-2zM8 14h12v2h-12zM4 16h2v2h-2zM8 16h4v2h-4zM18 16h2v2h-2zM4 18h4v2h-4zM10 18h2v2h-2zM18 18h2v2h-2zM0 20h6v2h-6zM10 20h10v2h-10z"/><path id="g6570" d="M0 0h2v2h-2zM6 0h2v2h-2zM10 0h2v2h-2zM14 0h2v2h-2zM2 2h2v2h-2zM6 2h4v2h-4zM14 2h2v2h-2zM0 4h12v2h-12zM14 4h8v2h-8zM4 6h4v2h-4zM12 6h2v2h-2zM18 6h2v2h-2zM2 8h2v2h-2zM6 8h4v2h-4zM12 8h2v2h-2zM18 8h2v2h-2zM0 10h2v2h-2zM6 10h2v2h-2zM10 10h2v2h-2zM14 10h2v2h-2zM18 10h2v2h-2zM4 12h2v2h-2zM14 12h2v2h-2zM18 12h2v2h-2zM0 14h12v2h-12zM16 14h2v2h-2zM2 16h2v2h-2zM8 16h2v2h-2zM16 16h2v2h-2zM4 18h6v2h-6zM14 18h2v2h-2zM18 18h2v2h-2zM0 20h4v2h-4zM10 20h4v2h-4zM20 20h2v2h-2z"/><path id="g6587" d="M8 0h2v2h-2zM10 2h2v2h-2zM18 2h2v2h-2zM0 4h22v2h-22zM6 6h2v2h-2zM14 6h2v2h-2zM6 8h2v2h-2zM14 8h2v2h-2zM6 10h2v2h-2zM14 10h2v2h-2zM8 12h2v2h-2zM12 12h2v2h-2zM8 14h2v2h-2zM12 14h2v2h-2zM10 16h2v2h-2zM6 18h4v2h-4zM12 18h4v2h-4zM0 20h6v2h-6zM16 20h6v2h-6z"/><path id="g6620" d="M14 0h2v2h-2zM0 2h8v2h-8zM14 2h2v2h-2zM0 4h2v2h-2zM6 4h2v2h-2zM10 4h10v2h-10zM0 6h2v2h-2zM6 6h2v2h-2zM10 6h2v2h-2zM14 6h2v2h-2zM18 6h2v2h-2zM0 8h2v2h-2zM6 8h2v2h-2zM10 8h2v2h-2zM14 8h2v2h-2zM18 8h2v2h-2zM0 10h8v2h-8zM10 10h2v2h-2zM14 10h2v2h-2zM18 10h2v2h-2zM0 12h2v2h-2zM6 12h16v2h-16zM0 14h2v2h-2zM6 14h2v2h-2zM14 14h2v2h-2zM0 16h8v2h-8zM12 16h2v2h-2zM16 16h2v2h-2zM0 18h2v2h-2zM10 18h2v2h-2zM18 18h2v2h-2zM6 20h4v2h-4zM20 20h2v2h-2z"/><path id="g6bb5" d="M6 0h4v2h-4zM12 0h6v2h-6zM2 2h4v2h-4zM12 2h2v2h-2zM16 2h2v2h-2zM2 4h2v2h-2zM12 4h2v2h-2zM16 4h2v2h-2zM2 6h6v2h-6zM10 6h2v2h-2zM16 6h6v2h-6zM2 8h2v2h-2zM2 10h6v2h-6zM10 10h10v2h-10zM2 12h2v2h-2zM12 12h2v2h-2zM16 12h2v2h-2zM2 14h8v2h-8zM12 14h2v2h-2zM16 14h2v2h-2zM0 16h4v2h-4zM14 16h2v2h-2zM2 18h2v2h-2zM12 18h2v2h-2zM16 18h2v2h-2zM2 20h2v2h-2zM6 20h6v2h-6zM18 20h4v2h-4z"/><path id="g6e90" d="M2 0h2v2h-2zM8 0h14v2h-14zM4 2h2v2h-2zM8 2h2v2h-2zM14 2h2v2h-2zM8 4h2v2h-2zM12 4h10v2h-10zM0 6h2v2h-2zM4 6h2v2h-2zM8 6h2v2h-2zM12 6h2v2h-2zM20 6h2v2h-2zM2 8h4v2h-4zM8 8h2v2h-2zM12 8h10v2h-10zM4 10h2v2h-2zM8 10h2v2h-2zM12 10h2v2h-2zM20 10h2v2h-2zM2 12h2v2h-2zM8 12h2v2h-2zM12 12h10v2h-10zM2 14h2v2h-2zM6 14h2v2h-2zM16 14h2v2h-2zM0 16h4v2h-4zM6 16h2v2h-2zM12 16h2v2h-2zM16 16h4v2h-4zM2 18h4v2h-4zM10 18h2v2h-2zM16 18h2v2h-2zM20 18h2v2h-2zM2 20h2v2h-2zM8 20h2v2h-2zM12 20h6v2h-6zM20 20h2v2h-2z"/><path id="g7801" d="M0 0h8v2h-8zM10 0h10v2h-10zM2 2h2v2h-2zM18 2h2v2h-2zM2 4h2v2h-2zM12 4h2v2h-2zM18 4h2v2h-2zM2 6h2v2h-2zM12 6h2v2h-2zM18 6h2v2h-2zM2 8h6v2h-6zM12 8h2v2h-2zM18 8h2v2h-2zM0 10h4v2h-4zM6 10h2v2h-2zM10 10h12v2h-12zM2 12h2v2h-2zM6 12h2v2h-2zM20 12h2v2h-2zM2 14h2v2h-2zM6 14h12v2h-12zM20 14h2v2h-2zM2 16h6v2h-6zM20 16h2v2h-2zM2 18h2v2h-2zM6 18h2v2h-2zM20 18h2v2h-2zM14 20h6v2h-6z"/><path id="g7c7b" d="M4 0h2v2h-2zM10 0h2v2h-2zM16 0h2v2h-2zM6 2h2v2h-2zM10 2h2v2h-2zM14 2h2v2h-2zM0 4h22v2h-22zM6 6h2v2h-2zM10 6h2v2h-2zM14 6h2v2h-2zM4 8h2v2h-2zM10 8h2v2h-2zM16 8h2v2h-2zM0 10h4v2h-4zM18 10h4v2h-4zM10 12h2v2h-2zM0 14h22v2h-22zM8 16h2v2h-2zM12 16h2v2h-2zM6 18h2v2h-2zM14 18h2v2h-2zM0 20h6v2h-6zM16 20h6v2h-6z"/><path id="g8868" d="M10 0h2v2h-2zM0 2h22v2h-22zM10 4h2v2h-2zM2 6h18v2h-18zM10 8h2v2h-2zM0 10h22v2h-22zM6 12h2v2h-2zM10 12h2v2h-2zM18 12h2v2h-2zM4 14h4v2h-4zM12 14h2v2h-2zM16 14h2v2h-2zM2 16h2v2h-2zM6 16h2v2h-2zM14 16h2v2h-2zM0 18h2v2h-2zM6 18h2v2h-2zM10 18h2v2h-2zM16 18h2v2h-2zM6 20h4v2h-4zM18 20h4v2h-4z"/><path id="g8bbf" d="M2 0h2v2h-2zM12 0h2v2h-2zM4 2h2v2h-2zM14 2h2v2h-2zM6 4h16v2h-16zM12 6h2v2h-2zM0 8h4v2h-4zM12 8h8v2h-8zM2 10h2v2h-2zM12 10h2v2h-2zM18 10h2v2h-2zM2 12h2v2h-2zM12 12h2v2h-2zM18 12h2v2h-2zM2 14h2v2h-2zM10 14h2v2h-2zM18 14h2v2h-2zM2 16h2v2h-2zM6 16h2v2h-2zM10 16h2v2h-2zM18 16h2v2h-2zM2 18h4v2h-4zM8 18h2v2h-2zM18 18h2v2h-2zM6 20h2v2h-2zM12 20h6v2h-6z"/><path id="g8d44" d="M0 0h2v2h-2zM10 0h2v2h-2zM2 2h2v2h-2zM6 2h2v2h-2zM10 2h10v2h-10zM4 4h2v2h-2zM8 4h2v2h-2zM12 4h2v2h-2zM18 4h2v2h-2zM0 6h4v2h-4zM10 6h2v2h-2zM14 6h2v2h-2zM2 8h2v2h-2zM8 8h2v2h-2zM16 8h2v2h-2zM2 10h20v2h-20zM4 12h2v2h-2zM16 12h2v2h-2zM4 14h2v2h-2zM10 14h2v2h-2zM16 14h2v2h-2zM4 16h2v2h-2zM10 16h2v2h-2zM16 16h2v2h-2zM8 18h2v2h-2zM12 18h4v2h-4zM0 20h8v2h-8zM16 20h4v2h-4z"/><path id="g8f93" d="M2 0h2v2h-2zM14 0h2v2h-2zM2 2h2v2h-2zM12 2h2v2h-2zM16 2h2v2h-2zM0 4h8v2h-8zM10 4h2v2h-2zM18 4h2v2h-2zM2 6h2v2h-2zM8 6h2v2h-2zM12 6h6v2h-6zM20 6h2v2h-2zM0 8h2v2h-2zM4 8h2v2h-2zM0 10h14v2h-14zM16 10h2v2h-2zM20 10h2v2h-2zM4 12h2v2h-2zM8 12h2v2h-2zM12 12h2v2h-2zM16 12h2v2h-2zM20 12h2v2h-2zM4 14h10v2h-10zM16 14h2v2h-2zM20 14h2v2h-2zM0 16h6v2h-6zM8 16h2v2h-2zM12 16h2v2h-2zM16 16h2v2h-2zM20 16h2v2h-2zM4 18h2v2h-2zM8 18h6v2h-6zM20 18h2v2h-2zM4 20h2v2h-2zM8 20h2v2h-2zM12 20h2v2h-2zM18 20h4v2h-4z"/><path id="g91cd" d="M2 0h18v2h-18zM10 2h2v2h-2zM0 4h22v2h-22zM10 6h2v2h-2zM4 8h14v2h-14zM4 10h2v2h-2zM10 10h2v2h-2zM16 10h2v2h-2zM4 12h14v2h-14zM4 14h2v2h-2zM10 14h2v2h-2zM16 14h2v2h-2zM2 16h18v2h-18zM10 18h2v2h-2zM0 20h22v2h-22z"/><path id="g95ee" d="M4 0h2v2h-2zM18 0h2v2h-2zM6 2h2v2h-2zM10 2h12v2h-12zM2 4h2v2h-2zM18 4h2v2h-2zM2 6h2v2h-2zM18 6h2v2h-2zM2 8h2v2h-2zM6 8h10v2h-10zM18 8h2v2h-2zM2 10h2v2h-2zM6 10h2v2h-2zM14 10h2v2h-2zM18 10h2v2h-2zM2 12h2v2h-2zM6 12h2v2h-2zM14 12h2v2h-2zM18 12h2v2h-2zM2 14h2v2h-2zM6 14h10v2h-10zM18 14h2v2h-2zM2 16h2v2h-2zM18 16h2v2h-2zM2 18h2v2h-2zM18 18h2v2h-2zM2 20h2v2h-2zM14 20h6v2h-6z"/></defs></svg>
<div class="a" style="left:0;top:0;width:2404px;height:54px;background:linear-gradient(to bottom,#7C9AE2 0px,#7391DA 3px,#5A77C0 12px,#3D5CA0 23px,#2B4989 24px,#20397C 34px,#152B6C 46px,#11266A 52px,#001868 53px,#001868 54px)"></div>
<svg class="a" style="left:0;top:0" width="44" height="46" viewBox="0 0 44 46">
<defs><linearGradient id="ig" x1="0" y1="10" x2="0" y2="42" gradientUnits="userSpaceOnUse"><stop offset="0" stop-color="#ff1010"/><stop offset="0.45" stop-color="#ff5a5a"/><stop offset="0.75" stop-color="#ffa8a8"/><stop offset="1" stop-color="#fff0f0"/></linearGradient></defs>
<g stroke="#3a0810" stroke-width="8" stroke-linecap="square" opacity="0.55">
<line x1="13" y1="16" x2="19" y2="26"/><line x1="25" y1="15" x2="24" y2="26"/><line x1="35" y1="23" x2="22" y2="27"/><line x1="9" y1="33" x2="20" y2="28"/><line x1="20" y1="30" x2="20" y2="40"/><line x1="24" y1="30" x2="31" y2="40"/></g>
<g stroke="url(#ig)" stroke-width="6" stroke-linecap="square">
<line x1="13" y1="16" x2="19" y2="26"/><line x1="25" y1="15" x2="24" y2="26"/><line x1="35" y1="23" x2="22" y2="27"/><line x1="9" y1="33" x2="20" y2="28"/><line x1="20" y1="31" x2="20" y2="40"/><line x1="25" y1="31" x2="31" y2="40"/></g>
<rect x="9" y="11" width="7" height="7" fill="#ff1010"/></svg>
<div class="a" style="left:56px;top:28px;width:7px;height:3px;background:#fff;box-shadow:1px 1px 0 #0a1850"></div>
<div class="a" style="left:72px;top:16px;width:8px;height:26px;border-left:5px solid #fff;border-top:4px solid #fff;border-bottom:4px solid #fff;filter:drop-shadow(1px 1px 0 #0a1850)"></div>
<div class="a" style="left:85px;top:5px;color:#fff;font-family:'Liberation Sans';font-weight:bold;font-size:30px;line-height:40px;letter-spacing:2.5px;-webkit-text-stroke:1px #fff;text-shadow:2px 2px 0 #0a1850">内存映射</div>
<div class="a" style="left:218px;top:16px;width:8px;height:26px;border-right:5px solid #fff;border-top:4px solid #fff;border-bottom:4px solid #fff;filter:drop-shadow(1px 1px 0 #0a1850)"></div>
<div class="a" style="left:2224px;top:9px;width:172px;height:32px;border-radius:5px;background:rgba(10,20,70,0.35)"></div>
<div class="a" style="left:2228px;top:12px;width:50px;height:26px;border-radius:3px;border:1px solid #9ab4f2;background:linear-gradient(#8fb0f8,#5a7ed8 40%,#3f60be 60%,#4f72d0)"></div>
<div class="a" style="left:2280px;top:12px;width:50px;height:26px;border-radius:3px;border:1px solid #9ab4f2;background:linear-gradient(#8fb0f8,#5a7ed8 40%,#3f60be 60%,#4f72d0)"></div>
<div class="a" style="left:2244px;top:26px;width:20px;height:6px;background:#fff;border:1px solid #1a2f80"></div>
<div class="a" style="left:2295px;top:17px;width:20px;height:16px;border:2px solid #fff;border-top-width:3px;box-shadow:0 0 0 1px #1a2f80"></div>
<div class="a" style="left:2332px;top:12px;width:60px;height:26px;border-radius:3px;border:1px solid #f09090;background:linear-gradient(#f28a8a,#e04040 40%,#cc0c0c 55%,#b00008)"></div>
<svg class="a" style="left:2352px;top:17px" width="20" height="16"><g stroke="#fff" stroke-width="3.5"><line x1="2" y1="1" x2="18" y2="15"/><line x1="18" y1="1" x2="2" y2="15"/></g></svg>
<div class="a" style="left:0;top:54px;width:2px;height:1384px;background:#1B3383"></div>
<div class="a" style="left:2402px;top:54px;width:2px;height:1384px;background:#1B3383"></div>
<div class="a" style="left:2px;top:54px;width:2400px;height:1px;background:#FAF8EE"></div>
<div class="a" style="left:10px;top:56px;width:32px;height:34px;background:linear-gradient(#c8ecfc,#8ed2f6 25%,#4fb4ea 50%,#7cc8f2 75%,#a8dcf8 82%,#2e5a78 82%,#3a6a88);border:2px solid #174f74;border-radius:3px"></div>
<div class="a" style="left:10px;top:56px;width:32px;height:28px;text-align:center;font-family:'Liberation Sans';font-weight:bold;font-size:22px;line-height:30px;color:#1f4760">M</div>
<span class="c" style="left:54px;top:60px">文件</span>
<span class="a" style="left:102px;top:58px;font-family:'Liberation Sans';font-size:22px;line-height:26px;color:#000;white-space:pre">(<u>F</u>)</span>
<span class="c" style="left:154px;top:60px">查看</span>
<span class="a" style="left:202px;top:58px;font-family:'Liberation Sans';font-size:22px;line-height:26px;color:#000;white-space:pre">(<u>V</u>)</span>
<span class="c" style="left:254px;top:60px">调试</span>
<span class="a" style="left:302px;top:58px;font-family:'Liberation Sans';font-size:22px;line-height:26px;color:#000;white-space:pre">(<u>D</u>)</span>
<span class="c" style="left:356px;top:60px">插件</span>
<span class="a" style="left:404px;top:58px;font-family:'Liberation Sans';font-size:22px;line-height:26px;color:#000;white-space:pre">(<u>P</u>)</span>
<span class="c" style="left:455px;top:60px">选项</span>
<span class="a" style="left:503px;top:58px;font-family:'Liberation Sans';font-size:22px;line-height:26px;color:#000;white-space:pre">(<u>T</u>)</span>
<span class="c" style="left:557px;top:60px">窗口</span>
<span class="a" style="left:605px;top:58px;font-family:'Liberation Sans';font-size:22px;line-height:26px;color:#000;white-space:pre">(<u>W</u>)</span>
<span class="c" style="left:664px;top:60px">帮助</span>
<span class="a" style="left:712px;top:58px;font-family:'Liberation Sans';font-size:22px;line-height:26px;color:#000;white-space:pre">(<u>H</u>)</span>
<div class="a" style="left:2294px;top:55px;width:108px;height:37px;background:#fff"></div>
<div class="a" style="left:2296px;top:56px;width:32px;height:34px;background:#F0EFE8;border:1px solid #E2DFD2;border-right-color:#D8D5C8;border-bottom-color:#D8D5C8"></div>
<div class="a" style="left:2332px;top:56px;width:32px;height:34px;background:#F0EFE8;border:1px solid #E2DFD2;border-right-color:#D8D5C8;border-bottom-color:#D8D5C8"></div>
<div class="a" style="left:2368px;top:56px;width:32px;height:34px;background:#F0EFE8;border:1px solid #E2DFD2;border-right-color:#D8D5C8;border-bottom-color:#D8D5C8"></div>
<div class="a" style="left:2304px;top:76px;width:12px;height:4px;background:#6E6E64"></div>
<div class="a" style="left:2342px;top:64px;width:14px;height:12px;border:2px solid #6E6E64;border-top-width:3px"></div><div class="a" style="left:2338px;top:70px;width:14px;height:11px;border:2px solid #6E6E64;border-top-width:3px;background:#F0EFE8"></div>
<svg class="a" style="left:2376px;top:64px" width="18" height="18"><g stroke="#6E6E64" stroke-width="3.5"><line x1="2" y1="2" x2="16" y2="16"/><line x1="16" y1="2" x2="2" y2="16"/></g></svg>
<div class="a" style="left:2px;top:92px;width:2400px;height:4px;background:#fff"></div>
<div class="a" style="left:2px;top:92px;width:2px;height:48px;background:#fff"></div>
<div class="a" style="left:4px;top:96px;width:2396px;height:40px;background:#C0C0C0;border-top:2px solid #808080;border-left:2px solid #808080;border-bottom:2px solid #fff;border-right:2px solid #fff"></div>
<div class="a" style="left:2398px;top:96px;width:2px;height:42px;background:#808080"></div>
<div class="a" style="left:2px;top:136px;width:2400px;height:2px;background:#808080"></div>
<div class="a" style="left:2px;top:138px;width:2400px;height:2px;background:#C8C8C8"></div>
<div class="a" style="left:2px;top:140px;width:2400px;height:2px;background:#fff"></div>
<div class="a" style="left:16px;top:98px;width:36px;height:36px;background:#fff;border-right:2px solid #000;border-bottom:2px solid #000"></div><div class="a" style="left:18px;top:100px;width:30px;height:30px;border:2px solid #16b016;border-radius:4px;background:linear-gradient(#c8f0c8,#8ee08e 30%,#5cd05c 55%,#a8e8a8 85%,#c8f0c8);box-shadow:inset 0 0 0 1px rgba(255,255,255,0.35)"></div><svg class="a" style="left:18px;top:100px" width="30" height="30" viewBox="0 0 30 30"><path d="M3 9 h7 l2 2 h9 v15 H3z" fill="#f4cf60" stroke="#c07818" stroke-width="2"/><path d="M3 26 l3 -10 h19 l-4 10z" fill="#ffe89a" stroke="#c8901c" stroke-width="1.5"/><path d="M9 4 q9 -1 12 8" stroke="#0a7010" stroke-width="3" fill="none"/><path d="M16 11 l8 3 l0 -8z" fill="#28a028"/></svg>
<div class="a" style="left:56px;top:98px;width:36px;height:36px;background:#fff;border-right:2px solid #000;border-bottom:2px solid #000"></div><div class="a" style="left:58px;top:100px;width:30px;height:30px;border:2px solid #16b016;border-radius:4px;background:linear-gradient(#c8f0c8,#8ee08e 30%,#5cd05c 55%,#a8e8a8 85%,#c8f0c8);box-shadow:inset 0 0 0 1px rgba(255,255,255,0.35)"></div><svg class="a" style="left:58px;top:100px" width="30" height="30" viewBox="0 0 30 30"><path d="M5 15 L14 7 V23z M15 15 L23 7 V23z" fill="#000"/><rect x="13" y="7" width="2" height="16" fill="#2a5a2a"/></svg>
<div class="a" style="left:96px;top:98px;width:36px;height:36px;background:#fff;border-right:2px solid #000;border-bottom:2px solid #000"></div><div class="a" style="left:98px;top:100px;width:30px;height:30px;border:2px solid #16b016;border-radius:4px;background:linear-gradient(#c8f0c8,#8ee08e 30%,#5cd05c 55%,#a8e8a8 85%,#c8f0c8);box-shadow:inset 0 0 0 1px rgba(255,255,255,0.35)"></div><svg class="a" style="left:98px;top:100px" width="30" height="30" viewBox="0 0 30 30"><g stroke="#000" stroke-width="4"><line x1="8" y1="8" x2="22" y2="22"/><line x1="22" y1="8" x2="8" y2="22"/></g></svg>
<div class="a" style="left:160px;top:98px;width:36px;height:36px;background:#fff;border-right:2px solid #000;border-bottom:2px solid #000"></div><div class="a" style="left:162px;top:100px;width:30px;height:30px;border:2px solid #f08a24;border-radius:4px;background:linear-gradient(#fdf0e0,#f8c890 35%,#f5b070 55%,#fad8b0 85%,#fdeedd);box-shadow:inset 0 0 0 1px rgba(255,255,255,0.35)"></div><svg class="a" style="left:162px;top:100px" width="30" height="30" viewBox="0 0 30 30"><defs><linearGradient id="bg1" x1="0" y1="0" x2="0" y2="1"><stop offset="0" stop-color="#1478b8"/><stop offset="0.55" stop-color="#1a84c8"/><stop offset="1" stop-color="#88d4fa"/></linearGradient></defs><path d="M6 6 L23 15 L6 24z" fill="url(#bg1)"/></svg>
<div class="a" style="left:200px;top:98px;width:36px;height:36px;background:#fff;border-right:2px solid #000;border-bottom:2px solid #000"></div><div class="a" style="left:202px;top:100px;width:30px;height:30px;border:2px solid #f08a24;border-radius:4px;background:linear-gradient(#fdf0e0,#f8c890 35%,#f5b070 55%,#fad8b0 85%,#fdeedd);box-shadow:inset 0 0 0 1px rgba(255,255,255,0.35)"></div><svg class="a" style="left:202px;top:100px" width="30" height="30" viewBox="0 0 30 30"><defs><linearGradient id="bg2" x1="0" y1="0" x2="0" y2="1"><stop offset="0" stop-color="#1478b8"/><stop offset="0.55" stop-color="#1a84c8"/><stop offset="1" stop-color="#88d4fa"/></linearGradient></defs><rect x="7" y="4" width="6" height="22" fill="url(#bg2)"/><rect x="17" y="4" width="6" height="22" fill="url(#bg2)"/></svg>
<div class="a" style="left:264px;top:98px;width:36px;height:36px;background:#fff;border-right:2px solid #000;border-bottom:2px solid #000"></div><div class="a" style="left:266px;top:100px;width:30px;height:30px;border:2px solid #f08a24;border-radius:4px;background:linear-gradient(#fdf0e0,#f8c890 35%,#f5b070 55%,#fad8b0 85%,#fdeedd);box-shadow:inset 0 0 0 1px rgba(255,255,255,0.35)"></div><svg class="a" style="left:266px;top:100px" width="30" height="30" viewBox="0 0 30 30"><defs><linearGradient id="bg3" x1="0" y1="0" x2="0" y2="1"><stop offset="0" stop-color="#1478b8"/><stop offset="0.55" stop-color="#1a84c8"/><stop offset="1" stop-color="#88d4fa"/></linearGradient></defs><path d="M2 8 h6 v6 h3 v-4 l6 7 l-5 6 v-4 h-10z" fill="url(#bg3)"/><rect x="19" y="6" width="6" height="5" fill="url(#bg3)"/><rect x="19" y="14" width="6" height="5" fill="url(#bg3)"/><rect x="19" y="22" width="6" height="5" fill="url(#bg3)"/></svg>
<div class="a" style="left:304px;top:98px;width:36px;height:36px;background:#fff;border-right:2px solid #000;border-bottom:2px solid #000"></div><div class="a" style="left:306px;top:100px;width:30px;height:30px;border:2px solid #f08a24;border-radius:4px;background:linear-gradient(#fdf0e0,#f8c890 35%,#f5b070 55%,#fad8b0 85%,#fdeedd);box-shadow:inset 0 0 0 1px rgba(255,255,255,0.35)"></div><svg class="a" style="left:306px;top:100px" width="30" height="30" viewBox="0 0 30 30"><defs><linearGradient id="bg4" x1="0" y1="0" x2="0" y2="1"><stop offset="0" stop-color="#1478b8"/><stop offset="0.55" stop-color="#1a84c8"/><stop offset="1" stop-color="#88d4fa"/></linearGradient></defs><path d="M8 6 h4 v6 h6 v3 h-6 v8 h-4 v-8 h-6 v-3 h6z" fill="url(#bg4)"/><rect x="19" y="4" width="6" height="5" fill="url(#bg4)"/><rect x="19" y="12" width="6" height="5" fill="url(#bg4)"/><rect x="19" y="20" width="6" height="5" fill="url(#bg4)"/></svg>
<div class="a" style="left:356px;top:98px;width:36px;height:36px;background:#fff;border-right:2px solid #000;border-bottom:2px solid #000"></div><div class="a" style="left:358px;top:100px;width:30px;height:30px;border:2px solid #f08a24;border-radius:4px;background:linear-gradient(#fdf0e0,#f8c890 35%,#f5b070 55%,#fad8b0 85%,#fdeedd);box-shadow:inset 0 0 0 1px rgba(255,255,255,0.35)"></div><svg class="a" style="left:358px;top:100px" width="30" height="30" viewBox="0 0 30 30"><defs><linearGradient id="bg5" x1="0" y1="0" x2="0" y2="1"><stop offset="0" stop-color="#1478b8"/><stop offset="0.55" stop-color="#1a84c8"/><stop offset="1" stop-color="#88d4fa"/></linearGradient></defs><path d="M6 4 h3 v7 l5 4 l-5 4 v2 h5 l-6 6 l-6 -6 h4z" fill="url(#bg5)"/><rect x="17" y="5" width="7" height="5" fill="url(#bg5)"/><rect x="17" y="13" width="7" height="5" fill="url(#bg5)"/><rect x="17" y="21" width="7" height="5" fill="url(#bg5)"/></svg>
<div class="a" style="left:396px;top:98px;width:36px;height:36px;background:#fff;border-right:2px solid #000;border-bottom:2px solid #000"></div><div class="a" style="left:398px;top:100px;width:30px;height:30px;border:2px solid #f08a24;border-radius:4px;background:linear-gradient(#fdf0e0,#f8c890 35%,#f5b070 55%,#fad8b0 85%,#fdeedd);box-shadow:inset 0 0 0 1px rgba(255,255,255,0.35)"></div><svg class="a" style="left:398px;top:100px" width="30" height="30" viewBox="0 0 30 30"><defs><linearGradient id="bg6" x1="0" y1="0" x2="0" y2="1"><stop offset="0" stop-color="#1478b8"/><stop offset="0.55" stop-color="#1a84c8"/><stop offset="1" stop-color="#88d4fa"/></linearGradient></defs><path d="M8 4 h3 v16 h5 l-6.5 6 l-6.5 -6 h5z" fill="url(#bg6)"/><rect x="18" y="5" width="7" height="5" fill="url(#bg6)"/><rect x="18" y="13" width="7" height="5" fill="url(#bg6)"/><rect x="18" y="21" width="7" height="5" fill="url(#bg6)"/></svg>
<div class="a" style="left:448px;top:98px;width:36px;height:36px;background:#fff;border-right:2px solid #000;border-bottom:2px solid #000"></div><div class="a" style="left:450px;top:100px;width:30px;height:30px;border:2px solid #f08a24;border-radius:4px;background:linear-gradient(#fdf0e0,#f8c890 35%,#f5b070 55%,#fad8b0 85%,#fdeedd);box-shadow:inset 0 0 0 1px rgba(255,255,255,0.35)"></div><svg class="a" style="left:450px;top:100px" width="30" height="30" viewBox="0 0 30 30"><defs><linearGradient id="bg7" x1="0" y1="0" x2="0" y2="1"><stop offset="0" stop-color="#1478b8"/><stop offset="0.55" stop-color="#1a84c8"/><stop offset="1" stop-color="#88d4fa"/></linearGradient></defs><path d="M3 12 h9 v-5 l7 7 l-7 7 v-5 h-9z" fill="url(#bg7)"/><path d="M21 6 h3 v20 h-10 v-3 h7z" fill="url(#bg7)"/></svg>
<div class="a" style="left:512px;top:98px;width:36px;height:36px;background:#fff;border-right:2px solid #000;border-bottom:2px solid #000"></div><div class="a" style="left:514px;top:100px;width:30px;height:30px;border:2px solid #16b016;border-radius:4px;background:linear-gradient(#c8f0c8,#8ee08e 30%,#5cd05c 55%,#a8e8a8 85%,#c8f0c8);box-shadow:inset 0 0 0 1px rgba(255,255,255,0.35)"></div><svg class="a" style="left:514px;top:100px" width="30" height="30" viewBox="0 0 30 30"><path d="M3 12 h9 v-5 l7 8 l-7 8 v-5 h-9z" fill="#000"/><rect x="21" y="4" width="5" height="6" fill="#000"/><rect x="21" y="12" width="5" height="6" fill="#000"/><rect x="21" y="20" width="5" height="6" fill="#000"/></svg>
<div class="a" style="left:576px;top:98px;width:36px;height:36px;background:#fff;border-right:2px solid #000;border-bottom:2px solid #000"></div><div class="a" style="left:578px;top:100px;width:30px;height:30px;border:2px solid #1c86cc;border-radius:4px;background:linear-gradient(#c8e8f8,#78c0e8 30%,#5ab0e0 55%,#98d2f0 85%,#c0e4f8);box-shadow:inset 0 0 0 1px rgba(255,255,255,0.35)"></div><div class="a" style="left:578px;top:100px;width:30px;height:30px;text-align:center;font-family:'Liberation Serif';font-weight:bold;font-size:26px;line-height:30px;color:#000">L</div>
<div class="a" style="left:616px;top:98px;width:36px;height:36px;background:#fff;border-right:2px solid #000;border-bottom:2px solid #000"></div><div class="a" style="left:618px;top:100px;width:30px;height:30px;border:2px solid #1c86cc;border-radius:4px;background:linear-gradient(#c8e8f8,#78c0e8 30%,#5ab0e0 55%,#98d2f0 85%,#c0e4f8);box-shadow:inset 0 0 0 1px rgba(255,255,255,0.35)"></div><div class="a" style="left:618px;top:100px;width:30px;height:30px;text-align:center;font-family:'Liberation Serif';font-weight:bold;font-size:26px;line-height:30px;color:#000">E</div>
<div class="a" style="left:656px;top:98px;width:36px;height:36px;background:#fff;border-right:2px solid #000;border-bottom:2px solid #000"></div><div class="a" style="left:658px;top:100px;width:30px;height:30px;border:2px solid #1c86cc;border-radius:4px;background:linear-gradient(#c8e8f8,#78c0e8 30%,#5ab0e0 55%,#98d2f0 85%,#c0e4f8);box-shadow:inset 0 0 0 1px rgba(255,255,255,0.35)"></div><div class="a" style="left:658px;top:100px;width:30px;height:30px;text-align:center;font-family:'Liberation Serif';font-weight:bold;font-size:26px;line-height:30px;color:#000">M</div>
<div class="a" style="left:696px;top:98px;width:36px;height:36px;background:#fff;border-right:2px solid #000;border-bottom:2px solid #000"></div><div class="a" style="left:698px;top:100px;width:30px;height:30px;border:2px solid #1c86cc;border-radius:4px;background:linear-gradient(#c8e8f8,#78c0e8 30%,#5ab0e0 55%,#98d2f0 85%,#c0e4f8);box-shadow:inset 0 0 0 1px rgba(255,255,255,0.35)"></div><div class="a" style="left:698px;top:100px;width:30px;height:30px;text-align:center;font-family:'Liberation Serif';font-weight:bold;font-size:26px;line-height:30px;color:#000">T</div>
<div class="a" style="left:736px;top:98px;width:36px;height:36px;background:#fff;border-right:2px solid #000;border-bottom:2px solid #000"></div><div class="a" style="left:738px;top:100px;width:30px;height:30px;border:2px solid #1c86cc;border-radius:4px;background:linear-gradient(#c8e8f8,#78c0e8 30%,#5ab0e0 55%,#98d2f0 85%,#c0e4f8);box-shadow:inset 0 0 0 1px rgba(255,255,255,0.35)"></div><div class="a" style="left:738px;top:100px;width:30px;height:30px;text-align:center;font-family:'Liberation Serif';font-weight:bold;font-size:26px;line-height:30px;color:#000">W</div>
<div class="a" style="left:776px;top:98px;width:36px;height:36px;background:#fff;border-right:2px solid #000;border-bottom:2px solid #000"></div><div class="a" style="left:778px;top:100px;width:30px;height:30px;border:2px solid #1c86cc;border-radius:4px;background:linear-gradient(#c8e8f8,#78c0e8 30%,#5ab0e0 55%,#98d2f0 85%,#c0e4f8);box-shadow:inset 0 0 0 1px rgba(255,255,255,0.35)"></div><div class="a" style="left:778px;top:100px;width:30px;height:30px;text-align:center;font-family:'Liberation Serif';font-weight:bold;font-size:26px;line-height:30px;color:#000">H</div>
<div class="a" style="left:816px;top:98px;width:36px;height:36px;background:#fff;border-right:2px solid #000;border-bottom:2px solid #000"></div><div class="a" style="left:818px;top:100px;width:30px;height:30px;border:2px solid #1c86cc;border-radius:4px;background:linear-gradient(#c8e8f8,#78c0e8 30%,#5ab0e0 55%,#98d2f0 85%,#c0e4f8);box-shadow:inset 0 0 0 1px rgba(255,255,255,0.35)"></div><div class="a" style="left:818px;top:100px;width:30px;height:30px;text-align:center;font-family:'Liberation Serif';font-weight:bold;font-size:26px;line-height:30px;color:#000">C</div>
<div class="a" style="left:856px;top:98px;width:36px;height:36px;background:#fff;border-right:2px solid #000;border-bottom:2px solid #000"></div><div class="a" style="left:858px;top:100px;width:30px;height:30px;border:2px solid #1c86cc;border-radius:4px;background:linear-gradient(#c8e8f8,#78c0e8 30%,#5ab0e0 55%,#98d2f0 85%,#c0e4f8);box-shadow:inset 0 0 0 1px rgba(255,255,255,0.35)"></div><div class="a" style="left:858px;top:100px;width:30px;height:30px;text-align:center;font-family:'Liberation Serif';font-weight:bold;font-size:26px;line-height:30px;color:#000">/</div>
<div class="a" style="left:896px;top:98px;width:36px;height:36px;background:#fff;border-right:2px solid #000;border-bottom:2px solid #000"></div><div class="a" style="left:898px;top:100px;width:30px;height:30px;border:2px solid #1c86cc;border-radius:4px;background:linear-gradient(#c8e8f8,#78c0e8 30%,#5ab0e0 55%,#98d2f0 85%,#c0e4f8);box-shadow:inset 0 0 0 1px rgba(255,255,255,0.35)"></div><div class="a" style="left:898px;top:100px;width:30px;height:30px;text-align:center;font-family:'Liberation Serif';font-weight:bold;font-size:26px;line-height:30px;color:#000">K</div>
<div class="a" style="left:936px;top:98px;width:36px;height:36px;background:#fff;border-right:2px solid #000;border-bottom:2px solid #000"></div><div class="a" style="left:938px;top:100px;width:30px;height:30px;border:2px solid #1c86cc;border-radius:4px;background:linear-gradient(#c8e8f8,#78c0e8 30%,#5ab0e0 55%,#98d2f0 85%,#c0e4f8);box-shadow:inset 0 0 0 1px rgba(255,255,255,0.35)"></div><div class="a" style="left:938px;top:100px;width:30px;height:30px;text-align:center;font-family:'Liberation Serif';font-weight:bold;font-size:26px;line-height:30px;color:#000">B</div>
<div class="a" style="left:976px;top:98px;width:36px;height:36px;background:#fff;border-right:2px solid #000;border-bottom:2px solid #000"></div><div class="a" style="left:978px;top:100px;width:30px;height:30px;border:2px solid #1c86cc;border-radius:4px;background:linear-gradient(#c8e8f8,#78c0e8 30%,#5ab0e0 55%,#98d2f0 85%,#c0e4f8);box-shadow:inset 0 0 0 1px rgba(255,255,255,0.35)"></div><div class="a" style="left:978px;top:100px;width:30px;height:30px;text-align:center;font-family:'Liberation Serif';font-weight:bold;font-size:26px;line-height:30px;color:#000">R</div>
<div class="a" style="left:1016px;top:98px;width:36px;height:36px;background:#fff;border-right:2px solid #000;border-bottom:2px solid #000"></div><div class="a" style="left:1018px;top:100px;width:30px;height:30px;border:2px solid #1c86cc;border-radius:4px;background:linear-gradient(#c8e8f8,#78c0e8 30%,#5ab0e0 55%,#98d2f0 85%,#c0e4f8);box-shadow:inset 0 0 0 1px rgba(255,255,255,0.35)"></div><div class="a" style="left:1018px;top:100px;width:30px;height:30px;text-align:center;font-family:'Liberation Serif';font-weight:bold;font-size:26px;line-height:30px;color:#000">...</div>
<div class="a" style="left:1056px;top:98px;width:36px;height:36px;background:#fff;border-right:2px solid #000;border-bottom:2px solid #000"></div><div class="a" style="left:1058px;top:100px;width:30px;height:30px;border:2px solid #1c86cc;border-radius:4px;background:linear-gradient(#c8e8f8,#78c0e8 30%,#5ab0e0 55%,#98d2f0 85%,#c0e4f8);box-shadow:inset 0 0 0 1px rgba(255,255,255,0.35)"></div><div class="a" style="left:1058px;top:100px;width:30px;height:30px;text-align:center;font-family:'Liberation Serif';font-weight:bold;font-size:26px;line-height:30px;color:#000">S</div>
<div class="a" style="left:1120px;top:98px;width:36px;height:36px;background:#fff;border-right:2px solid #000;border-bottom:2px solid #000"></div><div class="a" style="left:1122px;top:100px;width:30px;height:30px;border:2px solid #16b016;border-radius:4px;background:linear-gradient(#c8f0c8,#8ee08e 30%,#5cd05c 55%,#a8e8a8 85%,#c8f0c8);box-shadow:inset 0 0 0 1px rgba(255,255,255,0.35)"></div><svg class="a" style="left:1122px;top:100px" width="30" height="30" viewBox="0 0 30 30"><g fill="#000"><rect x="4" y="6" width="5" height="4"/><rect x="11" y="6" width="14" height="4"/><rect x="4" y="13" width="5" height="4"/><rect x="11" y="13" width="14" height="4"/><rect x="4" y="20" width="5" height="4"/><rect x="11" y="20" width="14" height="4"/></g></svg>
<div class="a" style="left:1160px;top:98px;width:36px;height:36px;background:#fff;border-right:2px solid #000;border-bottom:2px solid #000"></div><div class="a" style="left:1162px;top:100px;width:30px;height:30px;border:2px solid #16b016;border-radius:4px;background:linear-gradient(#c8f0c8,#8ee08e 30%,#5cd05c 55%,#a8e8a8 85%,#c8f0c8);box-shadow:inset 0 0 0 1px rgba(255,255,255,0.35)"></div><svg class="a" style="left:1162px;top:100px" width="30" height="30" viewBox="0 0 30 30"><rect x="5" y="5" width="6" height="6" fill="#000"/><rect x="12" y="5" width="6" height="6" fill="#1f5fbf"/><rect x="19" y="5" width="6" height="6" fill="#108a10"/><rect x="5" y="12" width="6" height="6" fill="#808080"/><rect x="12" y="12" width="6" height="6" fill="#20a0e0"/><rect x="19" y="12" width="6" height="6" fill="#c0ecfc"/><rect x="5" y="19" width="6" height="6" fill="#e05020"/><rect x="12" y="19" width="6" height="6" fill="#f0a020"/><rect x="19" y="19" width="6" height="6" fill="#fff"/></svg>
<div class="a" style="left:1200px;top:98px;width:36px;height:36px;background:#fff;border-right:2px solid #000;border-bottom:2px solid #000"></div><div class="a" style="left:1202px;top:100px;width:30px;height:30px;border:2px solid #16b016;border-radius:4px;background:linear-gradient(#c8f0c8,#8ee08e 30%,#5cd05c 55%,#a8e8a8 85%,#c8f0c8);box-shadow:inset 0 0 0 1px rgba(255,255,255,0.35)"></div><div class="a" style="left:1202px;top:100px;width:30px;height:30px;text-align:center;font-family:'Liberation Serif';font-weight:bold;font-size:28px;line-height:30px;color:#000">?</div>
<div class="hd" style="left:2px;width:108px"><i></i><b></b></div>
<div class="col" style="left:4px;top:142px;width:102px;height:26px"><svg class="a" style="left:4px;top:2px" width="48" height="24"><use href="#g5730" x="0"/><use href="#g5740" x="24"/></svg></div>
<div class="hd" style="left:110px;width:108px"><i></i><b></b></div>
<div class="col" style="left:112px;top:142px;width:102px;height:26px"><svg class="a" style="left:4px;top:2px" width="48" height="24"><use href="#g5927" x="0"/><use href="#g5c0f" x="24"/></svg></div>
<div class="hd" style="left:218px;width:108px"><i></i><b></b></div>
<div class="col" style="left:220px;top:142px;width:102px;height:26px"><svg class="a" style="left:4px;top:2px" width="48" height="24"><use href="#g5c5e" x="0"/><use href="#g4e3b" x="24"/></svg></div>
<div class="hd" style="left:326px;width:108px"><i></i><b></b></div>
<div class="col" style="left:328px;top:142px;width:102px;height:26px"><svg class="a" style="left:4px;top:2px" width="48" height="24"><use href="#g533a" x="0"/><use href="#g6bb5" x="24"/></svg></div>
<div class="hd" style="left:434px;width:144px"><i></i><b></b></div>
<div class="col" style="left:436px;top:142px;width:138px;height:26px"><svg class="a" style="left:4px;top:2px" width="48" height="24"><use href="#g5305" x="0"/><use href="#g542b" x="24"/></svg></div>
<div class="hd" style="left:578px;width:60px"><i></i><b></b></div>
<div class="col" style="left:580px;top:142px;width:54px;height:26px"><svg class="a" style="left:4px;top:2px" width="48" height="24"><use href="#g7c7b" x="0"/><use href="#g578b" x="24"/></svg></div>
<div class="hd" style="left:638px;width:96px"><i></i><b></b></div>
<div class="col" style="left:640px;top:142px;width:90px;height:26px"><svg class="a" style="left:4px;top:2px" width="48" height="24"><use href="#g8bbf" x="0"/><use href="#g95ee" x="24"/></svg></div>
<div class="hd" style="left:734px;width:96px"><i></i><b></b></div>
<div class="col" style="left:736px;top:142px;width:90px;height:26px"><svg class="a" style="left:4px;top:2px" width="96" height="24"><use href="#g521d" x="0"/><use href="#g59cb" x="24"/><use href="#g8bbf" x="48"/><use href="#g95ee" x="72"/></svg></div>
<div class="hd" style="left:830px;width:1542px;border-left-color:#D0D0D0;border-right:0"></div>
<div class="col" style="left:832px;top:142px;width:1536px;height:26px"><svg class="a" style="left:4px;top:2px" width="96" height="24"><use href="#g5df2" x="0"/><use href="#g6620" x="24"/><use href="#g5c04" x="48"/><use href="#g4e3a" x="72"/></svg></div>
<div class="a" style="left:2px;top:172px;width:2366px;height:1178px;background:#FFFBF0"></div>
<div class="vd" style="left:108px;top:172px;height:1178px"></div>
<div class="vd" style="left:216px;top:172px;height:1178px"></div>
<div class="vd" style="left:324px;top:172px;height:1178px"></div>
<div class="vd" style="left:432px;top:172px;height:1178px"></div>
<div class="vd" style="left:576px;top:172px;height:1178px"></div>
<div class="vd" style="left:636px;top:172px;height:1178px"></div>
<div class="vd" style="left:732px;top:172px;height:1178px"></div>
<div class="vd" style="left:828px;top:172px;height:1178px"></div>
<div class="col" style="left:2px;top:172px;width:106px;height:1178px"><svg class="a" style="left:6px;top:0px" width="96" height="24"><use href="#g30" x="0"/><use href="#g30" x="12"/><use href="#g32" x="24"/><use href="#g36" x="36"/><use href="#g30" x="48"/><use href="#g30" x="60"/><use href="#g30" x="72"/><use href="#g30" x="84"/></svg><svg class="a" style="left:6px;top:24px" width="96" height="24"><use href="#g30" x="0"/><use href="#g30" x="12"/><use href="#g32" x="24"/><use href="#g38" x="36"/><use href="#g30" x="48"/><use href="#g30" x="60"/><use href="#g30" x="72"/><use href="#g30" x="84"/></svg><svg class="a" style="left:6px;top:48px" width="96" height="24"><use href="#g30" x="0"/><use href="#g30" x="12"/><use href="#g32" x="24"/><use href="#g44" x="36"/><use href="#g30" x="48"/><use href="#g30" x="60"/><use href="#g30" x="72"/><use href="#g30" x="84"/></svg><svg class="a" style="left:6px;top:72px" width="96" height="24"><use href="#g30" x="0"/><use href="#g30" x="12"/><use href="#g33" x="24"/><use href="#g32" x="36"/><use href="#g30" x="48"/><use href="#g30" x="60"/><use href="#g30" x="72"/><use href="#g30" x="84"/></svg><svg class="a" style="left:6px;top:96px" width="96" height="24"><use href="#g30" x="0"/><use href="#g30" x="12"/><use href="#g33" x="24"/><use href="#g33" x="36"/><use href="#g30" x="48"/><use href="#g30" x="60"/><use href="#g30" x="72"/><use href="#g30" x="84"/></svg><svg class="a" style="left:6px;top:120px" width="96" height="24"><use href="#g30" x="0"/><use href="#g30" x="12"/><use href="#g33" x="24"/><use href="#g38" x="36"/><use href="#g30" x="48"/><use href="#g30" x="60"/><use href="#g30" x="72"/><use href="#g30" x="84"/></svg><svg class="a" style="left:6px;top:144px" width="96" height="24"><use href="#g30" x="0"/><use href="#g30" x="12"/><use href="#g33" x="24"/><use href="#g39" x="36"/><use href="#g30" x="48"/><use href="#g30" x="60"/><use href="#g30" x="72"/><use href="#g30" x="84"/></svg><svg class="a" style="left:6px;top:168px" width="96" height="24"><use href="#g30" x="0"/><use href="#g30" x="12"/><use href="#g33" x="24"/><use href="#g41" x="36"/><use href="#g30" x="48"/><use href="#g30" x="60"/><use href="#g30" x="72"/><use href="#g30" x="84"/></svg><svg class="a" style="left:6px;top:192px" width="96" height="24"><use href="#g30" x="0"/><use href="#g30" x="12"/><use href="#g33" x="24"/><use href="#g42" x="36"/><use href="#g30" x="48"/><use href="#g30" x="60"/><use href="#g30" x="72"/><use href="#g30" x="84"/></svg><svg class="a" style="left:6px;top:216px" width="96" height="24"><use href="#g30" x="0"/><use href="#g30" x="12"/><use href="#g33" x="24"/><use href="#g43" x="36"/><use href="#g30" x="48"/><use href="#g30" x="60"/><use href="#g30" x="72"/><use href="#g30" x="84"/></svg><svg class="a" style="left:6px;top:240px" width="96" height="24"><use href="#g30" x="0"/><use href="#g30" x="12"/><use href="#g33" x="24"/><use href="#g44" x="36"/><use href="#g30" x="48"/><use href="#g30" x="60"/><use href="#g30" x="72"/><use href="#g30" x="84"/></svg><svg class="a" style="left:6px;top:264px" width="96" height="24"><use href="#g30" x="0"/><use href="#g30" x="12"/><use href="#g33" x="24"/><use href="#g45" x="36"/><use href="#g30" x="48"/><use href="#g30" x="60"/><use href="#g30" x="72"/><use href="#g30" x="84"/></svg><svg class="a" style="left:6px;top:288px" width="96" height="24"><use href="#g30" x="0"/><use href="#g30" x="12"/><use href="#g34" x="24"/><use href="#g30" x="36"/><use href="#g30" x="48"/><use href="#g30" x="60"/><use href="#g30" x="72"/><use href="#g30" x="84"/></svg><svg class="a" style="left:6px;top:312px" width="96" height="24"><use href="#g30" x="0"/><use href="#g30" x="12"/><use href="#g34" x="24"/><use href="#g30" x="36"/><use href="#g31" x="48"/><use href="#g30" x="60"/><use href="#g30" x="72"/><use href="#g30" x="84"/></svg><svg class="a" style="left:6px;top:336px" width="96" height="24"><use href="#g30" x="0"/><use href="#g30" x="12"/><use href="#g34" x="24"/><use href="#g34" x="36"/><use href="#g42" x="48"/><use href="#g30" x="60"/><use href="#g30" x="72"/><use href="#g30" x="84"/></svg><svg class="a" style="left:6px;top:360px" width="96" height="24"><use href="#g30" x="0"/><use href="#g30" x="12"/><use href="#g34" x="24"/><use href="#g35" x="36"/><use href="#g37" x="48"/><use href="#g30" x="60"/><use href="#g30" x="72"/><use href="#g30" x="84"/></svg><svg class="a" style="left:6px;top:384px" width="96" height="24"><use href="#g30" x="0"/><use href="#g30" x="12"/><use href="#g34" x="24"/><use href="#g36" x="36"/><use href="#g30" x="48"/><use href="#g30" x="60"/><use href="#g30" x="72"/><use href="#g30" x="84"/></svg><svg class="a" style="left:6px;top:408px" width="96" height="24"><use href="#g30" x="0"/><use href="#g30" x="12"/><use href="#g34" x="24"/><use href="#g36" x="36"/><use href="#g33" x="48"/><use href="#g30" x="60"/><use href="#g30" x="72"/><use href="#g30" x="84"/></svg><svg class="a" style="left:6px;top:432px" width="96" height="24"><use href="#g30" x="0"/><use href="#g30" x="12"/><use href="#g34" x="24"/><use href="#g36" x="36"/><use href="#g35" x="48"/><use href="#g30" x="60"/><use href="#g30" x="72"/><use href="#g30" x="84"/></svg><svg class="a" style="left:6px;top:456px" width="96" height="24"><use href="#g30" x="0"/><use href="#g30" x="12"/><use href="#g34" x="24"/><use href="#g37" x="36"/><use href="#g30" x="48"/><use href="#g30" x="60"/><use href="#g30" x="72"/><use href="#g30" x="84"/></svg><svg class="a" style="left:6px;top:480px" width="96" height="24"><use href="#g30" x="0"/><use href="#g30" x="12"/><use href="#g35" x="24"/><use href="#g33" x="36"/><use href="#g30" x="48"/><use href="#g30" x="60"/><use href="#g30" x="72"/><use href="#g30" x="84"/></svg><svg class="a" style="left:6px;top:504px" width="96" height="24"><use href="#g30" x="0"/><use href="#g30" x="12"/><use href="#g35" x="24"/><use href="#g34" x="36"/><use href="#g30" x="48"/><use href="#g30" x="60"/><use href="#g30" x="72"/><use href="#g30" x="84"/></svg><svg class="a" style="left:6px;top:528px" width="96" height="24"><use href="#g30" x="0"/><use href="#g30" x="12"/><use href="#g36" x="24"/><use href="#g35" x="36"/><use href="#g30" x="48"/><use href="#g30" x="60"/><use href="#g30" x="72"/><use href="#g30" x="84"/></svg><svg class="a" style="left:6px;top:552px" width="96" height="24"><use href="#g37" x="0"/><use href="#g36" x="12"/><use href="#g33" x="24"/><use href="#g30" x="36"/><use href="#g30" x="48"/><use href="#g30" x="60"/><use href="#g30" x="72"/><use href="#g30" x="84"/></svg><svg class="a" style="left:6px;top:576px" width="96" height="24"><use href="#g37" x="0"/><use href="#g36" x="12"/><use href="#g33" x="24"/><use href="#g30" x="36"/><use href="#g31" x="48"/><use href="#g30" x="60"/><use href="#g30" x="72"/><use href="#g30" x="84"/></svg><svg class="a" style="left:6px;top:600px" width="96" height="24"><use href="#g37" x="0"/><use href="#g36" x="12"/><use href="#g33" x="24"/><use href="#g31" x="36"/><use href="#g36" x="48"/><use href="#g30" x="60"/><use href="#g30" x="72"/><use href="#g30" x="84"/></svg><svg class="a" style="left:6px;top:624px" width="96" height="24"><use href="#g37" x="0"/><use href="#g36" x="12"/><use href="#g33" x="24"/><use href="#g31" x="36"/><use href="#g37" x="48"/><use href="#g30" x="60"/><use href="#g30" x="72"/><use href="#g30" x="84"/></svg><svg class="a" style="left:6px;top:648px" width="96" height="24"><use href="#g37" x="0"/><use href="#g36" x="12"/><use href="#g33" x="24"/><use href="#g31" x="36"/><use href="#g43" x="48"/><use href="#g30" x="60"/><use href="#g30" x="72"/><use href="#g30" x="84"/></svg><svg class="a" style="left:6px;top:672px" width="96" height="24"><use href="#g37" x="0"/><use href="#g37" x="12"/><use href="#g44" x="24"/><use href="#g31" x="36"/><use href="#g30" x="48"/><use href="#g30" x="60"/><use href="#g30" x="72"/><use href="#g30" x="84"/></svg><svg class="a" style="left:6px;top:696px" width="96" height="24"><use href="#g37" x="0"/><use href="#g37" x="12"/><use href="#g44" x="24"/><use href="#g31" x="36"/><use href="#g31" x="48"/><use href="#g30" x="60"/><use href="#g30" x="72"/><use href="#g30" x="84"/></svg><svg class="a" style="left:6px;top:720px" width="96" height="24"><use href="#g37" x="0"/><use href="#g37" x="12"/><use href="#g44" x="24"/><use href="#g37" x="36"/><use href="#g31" x="48"/><use href="#g30" x="60"/><use href="#g30" x="72"/><use href="#g30" x="84"/></svg><svg class="a" style="left:6px;top:744px" width="96" height="24"><use href="#g37" x="0"/><use href="#g37" x="12"/><use href="#g44" x="24"/><use href="#g37" x="36"/><use href="#g33" x="48"/><use href="#g30" x="60"/><use href="#g30" x="72"/><use href="#g30" x="84"/></svg><svg class="a" style="left:6px;top:768px" width="96" height="24"><use href="#g37" x="0"/><use href="#g37" x="12"/><use href="#g44" x="24"/><use href="#g39" x="36"/><use href="#g44" x="48"/><use href="#g30" x="60"/><use href="#g30" x="72"/><use href="#g30" x="84"/></svg><svg class="a" style="left:6px;top:792px" width="96" height="24"><use href="#g37" x="0"/><use href="#g37" x="12"/><use href="#g44" x="24"/><use href="#g41" x="36"/><use href="#g30" x="48"/><use href="#g30" x="60"/><use href="#g30" x="72"/><use href="#g30" x="84"/></svg><svg class="a" style="left:6px;top:816px" width="96" height="24"><use href="#g37" x="0"/><use href="#g37" x="12"/><use href="#g44" x="24"/><use href="#g41" x="36"/><use href="#g31" x="48"/><use href="#g30" x="60"/><use href="#g30" x="72"/><use href="#g30" x="84"/></svg><svg class="a" style="left:6px;top:840px" width="96" height="24"><use href="#g37" x="0"/><use href="#g37" x="12"/><use href="#g45" x="24"/><use href="#g31" x="36"/><use href="#g36" x="48"/><use href="#g30" x="60"/><use href="#g30" x="72"/><use href="#g30" x="84"/></svg><svg class="a" style="left:6px;top:864px" width="96" height="24"><use href="#g37" x="0"/><use href="#g37" x="12"/><use href="#g45" x="24"/><use href="#g31" x="36"/><use href="#g42" x="48"/><use href="#g30" x="60"/><use href="#g30" x="72"/><use href="#g30" x="84"/></svg><svg class="a" style="left:6px;top:888px" width="96" height="24"><use href="#g37" x="0"/><use href="#g37" x="12"/><use href="#g45" x="24"/><use href="#g34" x="36"/><use href="#g34" x="48"/><use href="#g30" x="60"/><use href="#g30" x="72"/><use href="#g30" x="84"/></svg><svg class="a" style="left:6px;top:912px" width="96" height="24"><use href="#g37" x="0"/><use href="#g37" x="12"/><use href="#g45" x="24"/><use href="#g35" x="36"/><use href="#g30" x="48"/><use href="#g30" x="60"/><use href="#g30" x="72"/><use href="#g30" x="84"/></svg><svg class="a" style="left:6px;top:936px" width="96" height="24"><use href="#g37" x="0"/><use href="#g37" x="12"/><use href="#g45" x="24"/><use href="#g35" x="36"/><use href="#g31" x="48"/><use href="#g30" x="60"/><use href="#g30" x="72"/><use href="#g30" x="84"/></svg><svg class="a" style="left:6px;top:960px" width="96" height="24"><use href="#g37" x="0"/><use href="#g37" x="12"/><use href="#g45" x="24"/><use href="#g44" x="36"/><use href="#g35" x="48"/><use href="#g30" x="60"/><use href="#g30" x="72"/><use href="#g30" x="84"/></svg><svg class="a" style="left:6px;top:984px" width="96" height="24"><use href="#g37" x="0"/><use href="#g37" x="12"/><use href="#g45" x="24"/><use href="#g44" x="36"/><use href="#g43" x="48"/><use href="#g30" x="60"/><use href="#g30" x="72"/><use href="#g30" x="84"/></svg><svg class="a" style="left:6px;top:1008px" width="96" height="24"><use href="#g37" x="0"/><use href="#g37" x="12"/><use href="#g45" x="24"/><use href="#g44" x="36"/><use href="#g44" x="48"/><use href="#g30" x="60"/><use href="#g30" x="72"/><use href="#g30" x="84"/></svg><svg class="a" style="left:6px;top:1032px" width="96" height="24"><use href="#g37" x="0"/><use href="#g37" x="12"/><use href="#g45" x="24"/><use href="#g44" x="36"/><use href="#g45" x="48"/><use href="#g30" x="60"/><use href="#g30" x="72"/><use href="#g30" x="84"/></svg><svg class="a" style="left:6px;top:1056px" width="96" height="24"><use href="#g37" x="0"/><use href="#g37" x="12"/><use href="#g45" x="24"/><use href="#g46" x="36"/><use href="#g30" x="48"/><use href="#g30" x="60"/><use href="#g30" x="72"/><use href="#g30" x="84"/></svg><svg class="a" style="left:6px;top:1080px" width="96" height="24"><use href="#g37" x="0"/><use href="#g37" x="12"/><use href="#g45" x="24"/><use href="#g46" x="36"/><use href="#g31" x="48"/><use href="#g30" x="60"/><use href="#g30" x="72"/><use href="#g30" x="84"/></svg><svg class="a" style="left:6px;top:1104px" width="96" height="24"><use href="#g37" x="0"/><use href="#g37" x="12"/><use href="#g46" x="24"/><use href="#g33" x="36"/><use href="#g34" x="48"/><use href="#g30" x="60"/><use href="#g30" x="72"/><use href="#g30" x="84"/></svg><svg class="a" style="left:6px;top:1128px" width="96" height="24"><use href="#g37" x="0"/><use href="#g37" x="12"/><use href="#g46" x="24"/><use href="#g33" x="36"/><use href="#g36" x="48"/><use href="#g30" x="60"/><use href="#g30" x="72"/><use href="#g30" x="84"/></svg><svg class="a" style="left:6px;top:1152px" width="96" height="24"><use href="#g37" x="0"/><use href="#g37" x="12"/><use href="#g46" x="24"/><use href="#g33" x="36"/><use href="#g37" x="48"/><use href="#g30" x="60"/><use href="#g30" x="72"/><use href="#g30" x="84"/></svg></div><div class="col" style="left:110px;top:172px;width:106px;height:1178px"><svg class="a" style="left:6px;top:0px" width="96" height="24"><use href="#g30" x="0"/><use href="#g30" x="12"/><use href="#g30" x="24"/><use href="#g31" x="36"/><use href="#g36" x="48"/><use href="#g30" x="60"/><use href="#g30" x="72"/><use href="#g30" x="84"/></svg><svg class="a" style="left:6px;top:24px" width="96" height="24"><use href="#g30" x="0"/><use href="#g30" x="12"/><use href="#g30" x="24"/><use href="#g34" x="36"/><use href="#g31" x="48"/><use href="#g30" x="60"/><use href="#g30" x="72"/><use href="#g30" x="84"/></svg><svg class="a" style="left:6px;top:48px" width="96" height="24"><use href="#g30" x="0"/><use href="#g30" x="12"/><use href="#g30" x="24"/><use href="#g34" x="36"/><use href="#g31" x="48"/><use href="#g30" x="60"/><use href="#g30" x="72"/><use href="#g30" x="84"/></svg><svg class="a" style="left:6px;top:72px" width="96" height="24"><use href="#g30" x="0"/><use href="#g30" x="12"/><use href="#g30" x="24"/><use href="#g30" x="36"/><use href="#g36" x="48"/><use href="#g30" x="60"/><use href="#g30" x="72"/><use href="#g30" x="84"/></svg><svg class="a" style="left:6px;top:96px" width="96" height="24"><use href="#g30" x="0"/><use href="#g30" x="12"/><use href="#g30" x="24"/><use href="#g34" x="36"/><use href="#g31" x="48"/><use href="#g30" x="60"/><use href="#g30" x="72"/><use href="#g30" x="84"/></svg><svg class="a" style="left:6px;top:120px" width="96" height="24"><use href="#g30" x="0"/><use href="#g30" x="12"/><use href="#g30" x="24"/><use href="#g30" x="36"/><use href="#g31" x="48"/><use href="#g30" x="60"/><use href="#g30" x="72"/><use href="#g30" x="84"/></svg><svg class="a" style="left:6px;top:144px" width="96" height="24"><use href="#g30" x="0"/><use href="#g30" x="12"/><use href="#g30" x="24"/><use href="#g30" x="36"/><use href="#g31" x="48"/><use href="#g30" x="60"/><use href="#g30" x="72"/><use href="#g30" x="84"/></svg><svg class="a" style="left:6px;top:168px" width="96" height="24"><use href="#g30" x="0"/><use href="#g30" x="12"/><use href="#g30" x="24"/><use href="#g30" x="36"/><use href="#g31" x="48"/><use href="#g30" x="60"/><use href="#g30" x="72"/><use href="#g30" x="84"/></svg><svg class="a" style="left:6px;top:192px" width="96" height="24"><use href="#g30" x="0"/><use href="#g30" x="12"/><use href="#g30" x="24"/><use href="#g30" x="36"/><use href="#g31" x="48"/><use href="#g30" x="60"/><use href="#g30" x="72"/><use href="#g30" x="84"/></svg><svg class="a" style="left:6px;top:216px" width="96" height="24"><use href="#g30" x="0"/><use href="#g30" x="12"/><use href="#g30" x="24"/><use href="#g30" x="36"/><use href="#g31" x="48"/><use href="#g30" x="60"/><use href="#g30" x="72"/><use href="#g30" x="84"/></svg><svg class="a" style="left:6px;top:240px" width="96" height="24"><use href="#g30" x="0"/><use href="#g30" x="12"/><use href="#g30" x="24"/><use href="#g30" x="36"/><use href="#g31" x="48"/><use href="#g30" x="60"/><use href="#g30" x="72"/><use href="#g30" x="84"/></svg><svg class="a" style="left:6px;top:264px" width="96" height="24"><use href="#g30" x="0"/><use href="#g30" x="12"/><use href="#g30" x="24"/><use href="#g30" x="36"/><use href="#g31" x="48"/><use href="#g30" x="60"/><use href="#g30" x="72"/><use href="#g30" x="84"/></svg><svg class="a" style="left:6px;top:288px" width="96" height="24"><use href="#g30" x="0"/><use href="#g30" x="12"/><use href="#g30" x="24"/><use href="#g30" x="36"/><use href="#g31" x="48"/><use href="#g30" x="60"/><use href="#g30" x="72"/><use href="#g30" x="84"/></svg><svg class="a" style="left:6px;top:312px" width="96" height="24"><use href="#g30" x="0"/><use href="#g30" x="12"/><use href="#g30" x="24"/><use href="#g34" x="36"/><use href="#g41" x="48"/><use href="#g30" x="60"/><use href="#g30" x="72"/><use href="#g30" x="84"/></svg><svg class="a" style="left:6px;top:336px" width="96" height="24"><use href="#g30" x="0"/><use href="#g30" x="12"/><use href="#g30" x="24"/><use href="#g30" x="36"/><use href="#g43" x="48"/><use href="#g30" x="60"/><use href="#g30" x="72"/><use href="#g30" x="84"/></svg><svg class="a" style="left:6px;top:360px" width="96" height="24"><use href="#g30" x="0"/><use href="#g30" x="12"/><use href="#g30" x="24"/><use href="#g30" x="36"/><use href="#g39" x="48"/><use href="#g30" x="60"/><use href="#g30" x="72"/><use href="#g30" x="84"/></svg><svg class="a" style="left:6px;top:384px" width="96" height="24"><use href="#g30" x="0"/><use href="#g30" x="12"/><use href="#g30" x="24"/><use href="#g30" x="36"/><use href="#g33" x="48"/><use href="#g30" x="60"/><use href="#g30" x="72"/><use href="#g30" x="84"/></svg><svg class="a" style="left:6px;top:408px" width="96" height="24"><use href="#g30" x="0"/><use href="#g30" x="12"/><use href="#g30" x="24"/><use href="#g30" x="36"/><use href="#g32" x="48"/><use href="#g30" x="60"/><use href="#g30" x="72"/><use href="#g30" x="84"/></svg><svg class="a" style="left:6px;top:432px" width="96" height="24"><use href="#g30" x="0"/><use href="#g30" x="12"/><use href="#g30" x="24"/><use href="#g30" x="36"/><use href="#g34" x="48"/><use href="#g30" x="60"/><use href="#g30" x="72"/><use href="#g30" x="84"/></svg><svg class="a" style="left:6px;top:456px" width="96" height="24"><use href="#g30" x="0"/><use href="#g30" x="12"/><use href="#g30" x="24"/><use href="#g30" x="36"/><use href="#g45" x="48"/><use href="#g30" x="60"/><use href="#g30" x="72"/><use href="#g30" x="84"/></svg><svg class="a" style="left:6px;top:480px" width="96" height="24"><use href="#g30" x="0"/><use href="#g30" x="12"/><use href="#g30" x="24"/><use href="#g30" x="36"/><use href="#g32" x="48"/><use href="#g30" x="60"/><use href="#g30" x="72"/><use href="#g30" x="84"/></svg><svg class="a" style="left:6px;top:504px" width="96" height="24"><use href="#g30" x="0"/><use href="#g30" x="12"/><use href="#g31" x="24"/><use href="#g30" x="36"/><use href="#g33" x="48"/><use href="#g30" x="60"/><use href="#g30" x="72"/><use href="#g30" x="84"/></svg><svg class="a" style="left:6px;top:528px" width="96" height="24"><use href="#g30" x="0"/><use href="#g30" x="12"/><use href="#g30" x="24"/><use href="#g42" x="36"/><use href="#g41" x="48"/><use href="#g30" x="60"/><use href="#g30" x="72"/><use href="#g30" x="84"/></svg><svg class="a" style="left:6px;top:552px" width="96" height="24"><use href="#g30" x="0"/><use href="#g30" x="12"/><use href="#g30" x="24"/><use href="#g30" x="36"/><use href="#g31" x="48"/><use href="#g30" x="60"/><use href="#g30" x="72"/><use href="#g30" x="84"/></svg><svg class="a" style="left:6px;top:576px" width="96" height="24"><use href="#g30" x="0"/><use href="#g30" x="12"/><use href="#g30" x="24"/><use href="#g31" x="36"/><use href="#g35" x="48"/><use href="#g30" x="60"/><use href="#g30" x="72"/><use href="#g30" x="84"/></svg><svg class="a" style="left:6px;top:600px" width="96" height="24"><use href="#g30" x="0"/><use href="#g30" x="12"/><use href="#g30" x="24"/><use href="#g30" x="36"/><use href="#g31" x="48"/><use href="#g30" x="60"/><use href="#g30" x="72"/><use href="#g30" x="84"/></svg><svg class="a" style="left:6px;top:624px" width="96" height="24"><use href="#g30" x="0"/><use href="#g30" x="12"/><use href="#g30" x="24"/><use href="#g30" x="36"/><use href="#g35" x="48"/><use href="#g30" x="60"/><use href="#g30" x="72"/><use href="#g30" x="84"/></svg><svg class="a" style="left:6px;top:648px" width="96" height="24"><use href="#g30" x="0"/><use href="#g30" x="12"/><use href="#g30" x="24"/><use href="#g30" x="36"/><use href="#g31" x="48"/><use href="#g30" x="60"/><use href="#g30" x="72"/><use href="#g30" x="84"/></svg><svg class="a" style="left:6px;top:672px" width="96" height="24"><use href="#g30" x="0"/><use href="#g30" x="12"/><use href="#g30" x="24"/><use href="#g30" x="36"/><use href="#g31" x="48"/><use href="#g30" x="60"/><use href="#g30" x="72"/><use href="#g30" x="84"/></svg><svg class="a" style="left:6px;top:696px" width="96" height="24"><use href="#g30" x="0"/><use href="#g30" x="12"/><use href="#g30" x="24"/><use href="#g36" x="36"/><use href="#g30" x="48"/><use href="#g30" x="60"/><use href="#g30" x="72"/><use href="#g30" x="84"/></svg><svg class="a" style="left:6px;top:720px" width="96" height="24"><use href="#g30" x="0"/><use href="#g30" x="12"/><use href="#g30" x="24"/><use href="#g30" x="36"/><use href="#g32" x="48"/><use href="#g30" x="60"/><use href="#g30" x="72"/><use href="#g30" x="84"/></svg><svg class="a" style="left:6px;top:744px" width="96" height="24"><use href="#g30" x="0"/><use href="#g30" x="12"/><use href="#g30" x="24"/><use href="#g32" x="36"/><use href="#g41" x="48"/><use href="#g30" x="60"/><use href="#g30" x="72"/><use href="#g30" x="84"/></svg><svg class="a" style="left:6px;top:768px" width="96" height="24"><use href="#g30" x="0"/><use href="#g30" x="12"/><use href="#g30" x="24"/><use href="#g30" x="36"/><use href="#g33" x="48"/><use href="#g30" x="60"/><use href="#g30" x="72"/><use href="#g30" x="84"/></svg><svg class="a" style="left:6px;top:792px" width="96" height="24"><use href="#g30" x="0"/><use href="#g30" x="12"/><use href="#g30" x="24"/><use href="#g30" x="36"/><use href="#g31" x="48"/><use href="#g30" x="60"/><use href="#g30" x="72"/><use href="#g30" x="84"/></svg><svg class="a" style="left:6px;top:816px" width="96" height="24"><use href="#g30" x="0"/><use href="#g30" x="12"/><use href="#g30" x="24"/><use href="#g37" x="36"/><use href="#g35" x="48"/><use href="#g30" x="60"/><use href="#g30" x="72"/><use href="#g30" x="84"/></svg><svg class="a" style="left:6px;top:840px" width="96" height="24"><use href="#g30" x="0"/><use href="#g30" x="12"/><use href="#g30" x="24"/><use href="#g30" x="36"/><use href="#g35" x="48"/><use href="#g30" x="60"/><use href="#g30" x="72"/><use href="#g30" x="84"/></svg><svg class="a" style="left:6px;top:864px" width="96" height="24"><use href="#g30" x="0"/><use href="#g30" x="12"/><use href="#g30" x="24"/><use href="#g32" x="36"/><use href="#g39" x="48"/><use href="#g30" x="60"/><use href="#g30" x="72"/><use href="#g30" x="84"/></svg><svg class="a" style="left:6px;top:888px" width="96" height="24"><use href="#g30" x="0"/><use href="#g30" x="12"/><use href="#g30" x="24"/><use href="#g30" x="36"/><use href="#g35" x="48"/><use href="#g30" x="60"/><use href="#g30" x="72"/><use href="#g30" x="84"/></svg><svg class="a" style="left:6px;top:912px" width="96" height="24"><use href="#g30" x="0"/><use href="#g30" x="12"/><use href="#g30" x="24"/><use href="#g30" x="36"/><use href="#g31" x="48"/><use href="#g30" x="60"/><use href="#g30" x="72"/><use href="#g30" x="84"/></svg><svg class="a" style="left:6px;top:936px" width="96" height="24"><use href="#g30" x="0"/><use href="#g30" x="12"/><use href="#g30" x="24"/><use href="#g38" x="36"/><use href="#g34" x="48"/><use href="#g30" x="60"/><use href="#g30" x="72"/><use href="#g30" x="84"/></svg><svg class="a" style="left:6px;top:960px" width="96" height="24"><use href="#g30" x="0"/><use href="#g30" x="12"/><use href="#g30" x="24"/><use href="#g30" x="36"/><use href="#g37" x="48"/><use href="#g30" x="60"/><use href="#g30" x="72"/><use href="#g30" x="84"/></svg><svg class="a" style="left:6px;top:984px" width="96" height="24"><use href="#g30" x="0"/><use href="#g30" x="12"/><use href="#g30" x="24"/><use href="#g30" x="36"/><use href="#g31" x="48"/><use href="#g30" x="60"/><use href="#g30" x="72"/><use href="#g30" x="84"/></svg><svg class="a" style="left:6px;top:1008px" width="96" height="24"><use href="#g30" x="0"/><use href="#g30" x="12"/><use href="#g30" x="24"/><use href="#g30" x="36"/><use href="#g31" x="48"/><use href="#g30" x="60"/><use href="#g30" x="72"/><use href="#g30" x="84"/></svg><svg class="a" style="left:6px;top:1032px" width="96" height="24"><use href="#g30" x="0"/><use href="#g30" x="12"/><use href="#g30" x="24"/><use href="#g30" x="36"/><use href="#g35" x="48"/><use href="#g30" x="60"/><use href="#g30" x="72"/><use href="#g30" x="84"/></svg><svg class="a" style="left:6px;top:1056px" width="96" height="24"><use href="#g30" x="0"/><use href="#g30" x="12"/><use href="#g30" x="24"/><use href="#g30" x="36"/><use href="#g31" x="48"/><use href="#g30" x="60"/><use href="#g30" x="72"/><use href="#g30" x="84"/></svg><svg class="a" style="left:6px;top:1080px" width="96" height="24"><use href="#g30" x="0"/><use href="#g30" x="12"/><use href="#g30" x="24"/><use href="#g34" x="36"/><use href="#g33" x="48"/><use href="#g30" x="60"/><use href="#g30" x="72"/><use href="#g30" x="84"/></svg><svg class="a" style="left:6px;top:1104px" width="96" height="24"><use href="#g30" x="0"/><use href="#g30" x="12"/><use href="#g30" x="24"/><use href="#g30" x="36"/><use href="#g32" x="48"/><use href="#g30" x="60"/><use href="#g30" x="72"/><use href="#g30" x="84"/></svg><svg class="a" style="left:6px;top:1128px" width="96" height="24"><use href="#g30" x="0"/><use href="#g30" x="12"/><use href="#g30" x="24"/><use href="#g30" x="36"/><use href="#g31" x="48"/><use href="#g30" x="60"/><use href="#g30" x="72"/><use href="#g30" x="84"/></svg><svg class="a" style="left:6px;top:1152px" width="96" height="24"><use href="#g30" x="0"/><use href="#g30" x="12"/><use href="#g30" x="24"/><use href="#g30" x="36"/><use href="#g32" x="48"/><use href="#g30" x="60"/><use href="#g30" x="72"/><use href="#g30" x="84"/></svg></div><div class="col" style="left:218px;top:172px;width:106px;height:1178px"><svg class="a" style="left:6px;top:288px" width="96" height="24"><use href="#g55" x="0"/><use href="#g6e" x="12"/><use href="#g50" x="24"/><use href="#g61" x="36"/><use href="#g63" x="48"/><use href="#g6b" x="60"/><use href="#g4d" x="72"/><use href="#g65" x="84"/></svg><svg class="a" style="left:6px;top:312px" width="96" height="24"><use href="#g55" x="0"/><use href="#g6e" x="12"/><use href="#g50" x="24"/><use href="#g61" x="36"/><use href="#g63" x="48"/><use href="#g6b" x="60"/><use href="#g4d" x="72"/><use href="#g65" x="84"/></svg><svg class="a" style="left:6px;top:336px" width="96" height="24"><use href="#g55" x="0"/><use href="#g6e" x="12"/><use href="#g50" x="24"/><use href="#g61" x="36"/><use href="#g63" x="48"/><use href="#g6b" x="60"/><use href="#g4d" x="72"/><use href="#g65" x="84"/></svg><svg class="a" style="left:6px;top:360px" width="96" height="24"><use href="#g55" x="0"/><use href="#g6e" x="12"/><use href="#g50" x="24"/><use href="#g61" x="36"/><use href="#g63" x="48"/><use href="#g6b" x="60"/><use href="#g4d" x="72"/><use href="#g65" x="84"/></svg><svg class="a" style="left:6px;top:384px" width="96" height="24"><use href="#g55" x="0"/><use href="#g6e" x="12"/><use href="#g50" x="24"/><use href="#g61" x="36"/><use href="#g63" x="48"/><use href="#g6b" x="60"/><use href="#g4d" x="72"/><use href="#g65" x="84"/></svg><svg class="a" style="left:6px;top:408px" width="96" height="24"><use href="#g55" x="0"/><use href="#g6e" x="12"/><use href="#g50" x="24"/><use href="#g61" x="36"/><use href="#g63" x="48"/><use href="#g6b" x="60"/><use href="#g4d" x="72"/><use href="#g65" x="84"/></svg><svg class="a" style="left:6px;top:432px" width="96" height="24"><use href="#g55" x="0"/><use href="#g6e" x="12"/><use href="#g50" x="24"/><use href="#g61" x="36"/><use href="#g63" x="48"/><use href="#g6b" x="60"/><use href="#g4d" x="72"/><use href="#g65" x="84"/></svg><svg class="a" style="left:6px;top:552px" width="60" height="24"><use href="#g49" x="0"/><use href="#g4d" x="12"/><use href="#g4d" x="24"/><use href="#g33" x="36"/><use href="#g32" x="48"/></svg><svg class="a" style="left:6px;top:576px" width="60" height="24"><use href="#g49" x="0"/><use href="#g4d" x="12"/><use href="#g4d" x="24"/><use href="#g33" x="36"/><use href="#g32" x="48"/></svg><svg class="a" style="left:6px;top:600px" width="60" height="24"><use href="#g49" x="0"/><use href="#g4d" x="12"/><use href="#g4d" x="24"/><use href="#g33" x="36"/><use href="#g32" x="48"/></svg><svg class="a" style="left:6px;top:624px" width="60" height="24"><use href="#g49" x="0"/><use href="#g4d" x="12"/><use href="#g4d" x="24"/><use href="#g33" x="36"/><use href="#g32" x="48"/></svg><svg class="a" style="left:6px;top:648px" width="60" height="24"><use href="#g49" x="0"/><use href="#g4d" x="12"/><use href="#g4d" x="24"/><use href="#g33" x="36"/><use href="#g32" x="48"/></svg><svg class="a" style="left:6px;top:672px" width="72" height="24"><use href="#g75" x="0"/><use href="#g73" x="12"/><use href="#g65" x="24"/><use href="#g72" x="36"/><use href="#g33" x="48"/><use href="#g32" x="60"/></svg><svg class="a" style="left:6px;top:696px" width="72" height="24"><use href="#g75" x="0"/><use href="#g73" x="12"/><use href="#g65" x="24"/><use href="#g72" x="36"/><use href="#g33" x="48"/><use href="#g32" x="60"/></svg><svg class="a" style="left:6px;top:720px" width="72" height="24"><use href="#g75" x="0"/><use href="#g73" x="12"/><use href="#g65" x="24"/><use href="#g72" x="36"/><use href="#g33" x="48"/><use href="#g32" x="60"/></svg><svg class="a" style="left:6px;top:744px" width="72" height="24"><use href="#g75" x="0"/><use href="#g73" x="12"/><use href="#g65" x="24"/><use href="#g72" x="36"/><use href="#g33" x="48"/><use href="#g32" x="60"/></svg><svg class="a" style="left:6px;top:768px" width="72" height="24"><use href="#g75" x="0"/><use href="#g73" x="12"/><use href="#g65" x="24"/><use href="#g72" x="36"/><use href="#g33" x="48"/><use href="#g32" x="60"/></svg><svg class="a" style="left:6px;top:792px" width="96" height="24"><use href="#g41" x="0"/><use href="#g44" x="12"/><use href="#g56" x="24"/><use href="#g41" x="36"/><use href="#g50" x="48"/><use href="#g49" x="60"/><use href="#g33" x="72"/><use href="#g32" x="84"/></svg><svg class="a" style="left:6px;top:816px" width="96" height="24"><use href="#g41" x="0"/><use href="#g44" x="12"/><use href="#g56" x="24"/><use href="#g41" x="36"/><use href="#g50" x="48"/><use href="#g49" x="60"/><use href="#g33" x="72"/><use href="#g32" x="84"/></svg><svg class="a" style="left:6px;top:840px" width="96" height="24"><use href="#g41" x="0"/><use href="#g44" x="12"/><use href="#g56" x="24"/><use href="#g41" x="36"/><use href="#g50" x="48"/><use href="#g49" x="60"/><use href="#g33" x="72"/><use href="#g32" x="84"/></svg><svg class="a" style="left:6px;top:864px" width="96" height="24"><use href="#g41" x="0"/><use href="#g44" x="12"/><use href="#g56" x="24"/><use href="#g41" x="36"/><use href="#g50" x="48"/><use href="#g49" x="60"/><use href="#g33" x="72"/><use href="#g32" x="84"/></svg><svg class="a" style="left:6px;top:888px" width="96" height="24"><use href="#g41" x="0"/><use href="#g44" x="12"/><use href="#g56" x="24"/><use href="#g41" x="36"/><use href="#g50" x="48"/><use href="#g49" x="60"/><use href="#g33" x="72"/><use href="#g32" x="84"/></svg><svg class="a" style="left:6px;top:912px" width="72" height="24"><use href="#g52" x="0"/><use href="#g50" x="12"/><use href="#g43" x="24"/><use href="#g52" x="36"/><use href="#g54" x="48"/><use href="#g34" x="60"/></svg><svg class="a" style="left:6px;top:936px" width="72" height="24"><use href="#g52" x="0"/><use href="#g50" x="12"/><use href="#g43" x="24"/><use href="#g52" x="36"/><use href="#g54" x="48"/><use href="#g34" x="60"/></svg><svg class="a" style="left:6px;top:960px" width="72" height="24"><use href="#g52" x="0"/><use href="#g50" x="12"/><use href="#g43" x="24"/><use href="#g52" x="36"/><use href="#g54" x="48"/><use href="#g34" x="60"/></svg><svg class="a" style="left:6px;top:984px" width="72" height="24"><use href="#g52" x="0"/><use href="#g50" x="12"/><use href="#g43" x="24"/><use href="#g52" x="36"/><use href="#g54" x="48"/><use href="#g34" x="60"/></svg><svg class="a" style="left:6px;top:1008px" width="72" height="24"><use href="#g52" x="0"/><use href="#g50" x="12"/><use href="#g43" x="24"/><use href="#g52" x="36"/><use href="#g54" x="48"/><use href="#g34" x="60"/></svg><svg class="a" style="left:6px;top:1032px" width="72" height="24"><use href="#g52" x="0"/><use href="#g50" x="12"/><use href="#g43" x="24"/><use href="#g52" x="36"/><use href="#g54" x="48"/><use href="#g34" x="60"/></svg><svg class="a" style="left:6px;top:1056px" width="60" height="24"><use href="#g47" x="0"/><use href="#g44" x="12"/><use href="#g49" x="24"/><use href="#g33" x="36"/><use href="#g32" x="48"/></svg><svg class="a" style="left:6px;top:1080px" width="60" height="24"><use href="#g47" x="0"/><use href="#g44" x="12"/><use href="#g49" x="24"/><use href="#g33" x="36"/><use href="#g32" x="48"/></svg><svg class="a" style="left:6px;top:1104px" width="60" height="24"><use href="#g47" x="0"/><use href="#g44" x="12"/><use href="#g49" x="24"/><use href="#g33" x="36"/><use href="#g32" x="48"/></svg><svg class="a" style="left:6px;top:1128px" width="60" height="24"><use href="#g47" x="0"/><use href="#g44" x="12"/><use href="#g49" x="24"/><use href="#g33" x="36"/><use href="#g32" x="48"/></svg><svg class="a" style="left:6px;top:1152px" width="60" height="24"><use href="#g47" x="0"/><use href="#g44" x="12"/><use href="#g49" x="24"/><use href="#g33" x="36"/><use href="#g32" x="48"/></svg></div><div class="col" style="left:326px;top:172px;width:106px;height:1178px"><svg class="a" style="left:6px;top:312px" width="72" height="24"><use href="#g2e" x="0"/><use href="#g74" x="12"/><use href="#g65" x="24"/><use href="#g64" x="36"/><use href="#g64" x="48"/><use href="#g79" x="60"/></svg><svg class="a" style="left:6px;top:336px" width="72" height="24"><use href="#g2e" x="0"/><use href="#g74" x="12"/><use href="#g65" x="24"/><use href="#g64" x="36"/><use href="#g64" x="48"/><use href="#g79" x="60"/></svg><svg class="a" style="left:6px;top:360px" width="72" height="24"><use href="#g2e" x="0"/><use href="#g74" x="12"/><use href="#g65" x="24"/><use href="#g64" x="36"/><use href="#g64" x="48"/><use href="#g79" x="60"/></svg><svg class="a" style="left:6px;top:384px" width="72" height="24"><use href="#g2e" x="0"/><use href="#g74" x="12"/><use href="#g65" x="24"/><use href="#g64" x="36"/><use href="#g64" x="48"/><use href="#g79" x="60"/></svg><svg class="a" style="left:6px;top:408px" width="60" height="24"><use href="#g2e" x="0"/><use href="#g72" x="12"/><use href="#g73" x="24"/><use href="#g72" x="36"/><use href="#g63" x="48"/></svg><svg class="a" style="left:6px;top:432px" width="72" height="24"><use href="#g2e" x="0"/><use href="#g74" x="12"/><use href="#g65" x="24"/><use href="#g64" x="36"/><use href="#g64" x="48"/><use href="#g79" x="60"/></svg><svg class="a" style="left:6px;top:576px" width="60" height="24"><use href="#g2e" x="0"/><use href="#g74" x="12"/><use href="#g65" x="24"/><use href="#g78" x="36"/><use href="#g74" x="48"/></svg><svg class="a" style="left:6px;top:600px" width="60" height="24"><use href="#g2e" x="0"/><use href="#g64" x="12"/><use href="#g61" x="24"/><use href="#g74" x="36"/><use href="#g61" x="48"/></svg><svg class="a" style="left:6px;top:624px" width="60" height="24"><use href="#g2e" x="0"/><use href="#g72" x="12"/><use href="#g73" x="24"/><use href="#g72" x="36"/><use href="#g63" x="48"/></svg><svg class="a" style="left:6px;top:648px" width="72" height="24"><use href="#g2e" x="0"/><use href="#g72" x="12"/><use href="#g65" x="24"/><use href="#g6c" x="36"/><use href="#g6f" x="48"/><use href="#g63" x="60"/></svg><svg class="a" style="left:6px;top:696px" width="60" height="24"><use href="#g2e" x="0"/><use href="#g74" x="12"/><use href="#g65" x="24"/><use href="#g78" x="36"/><use href="#g74" x="48"/></svg><svg class="a" style="left:6px;top:720px" width="60" height="24"><use href="#g2e" x="0"/><use href="#g64" x="12"/><use href="#g61" x="24"/><use href="#g74" x="36"/><use href="#g61" x="48"/></svg><svg class="a" style="left:6px;top:744px" width="60" height="24"><use href="#g2e" x="0"/><use href="#g72" x="12"/><use href="#g73" x="24"/><use href="#g72" x="36"/><use href="#g63" x="48"/></svg><svg class="a" style="left:6px;top:768px" width="72" height="24"><use href="#g2e" x="0"/><use href="#g72" x="12"/><use href="#g65" x="24"/><use href="#g6c" x="36"/><use href="#g6f" x="48"/><use href="#g63" x="60"/></svg><svg class="a" style="left:6px;top:816px" width="60" height="24"><use href="#g2e" x="0"/><use href="#g74" x="12"/><use href="#g65" x="24"/><use href="#g78" x="36"/><use href="#g74" x="48"/></svg><svg class="a" style="left:6px;top:840px" width="60" height="24"><use href="#g2e" x="0"/><use href="#g64" x="12"/><use href="#g61" x="24"/><use href="#g74" x="36"/><use href="#g61" x="48"/></svg><svg class="a" style="left:6px;top:864px" width="60" height="24"><use href="#g2e" x="0"/><use href="#g72" x="12"/><use href="#g73" x="24"/><use href="#g72" x="36"/><use href="#g63" x="48"/></svg><svg class="a" style="left:6px;top:888px" width="72" height="24"><use href="#g2e" x="0"/><use href="#g72" x="12"/><use href="#g65" x="24"/><use href="#g6c" x="36"/><use href="#g6f" x="48"/><use href="#g63" x="60"/></svg><svg class="a" style="left:6px;top:936px" width="60" height="24"><use href="#g2e" x="0"/><use href="#g74" x="12"/><use href="#g65" x="24"/><use href="#g78" x="36"/><use href="#g74" x="48"/></svg><svg class="a" style="left:6px;top:960px" width="60" height="24"><use href="#g2e" x="0"/><use href="#g6f" x="12"/><use href="#g72" x="24"/><use href="#g70" x="36"/><use href="#g63" x="48"/></svg><svg class="a" style="left:6px;top:984px" width="60" height="24"><use href="#g2e" x="0"/><use href="#g64" x="12"/><use href="#g61" x="24"/><use href="#g74" x="36"/><use href="#g61" x="48"/></svg><svg class="a" style="left:6px;top:1008px" width="60" height="24"><use href="#g2e" x="0"/><use href="#g72" x="12"/><use href="#g73" x="24"/><use href="#g72" x="36"/><use href="#g63" x="48"/></svg><svg class="a" style="left:6px;top:1032px" width="72" height="24"><use href="#g2e" x="0"/><use href="#g72" x="12"/><use href="#g65" x="24"/><use href="#g6c" x="36"/><use href="#g6f" x="48"/><use href="#g63" x="60"/></svg><svg class="a" style="left:6px;top:1080px" width="60" height="24"><use href="#g2e" x="0"/><use href="#g74" x="12"/><use href="#g65" x="24"/><use href="#g78" x="36"/><use href="#g74" x="48"/></svg><svg class="a" style="left:6px;top:1104px" width="60" height="24"><use href="#g2e" x="0"/><use href="#g64" x="12"/><use href="#g61" x="24"/><use href="#g74" x="36"/><use href="#g61" x="48"/></svg><svg class="a" style="left:6px;top:1128px" width="60" height="24"><use href="#g2e" x="0"/><use href="#g72" x="12"/><use href="#g73" x="24"/><use href="#g72" x="36"/><use href="#g63" x="48"/></svg><svg class="a" style="left:6px;top:1152px" width="72" height="24"><use href="#g2e" x="0"/><use href="#g72" x="12"/><use href="#g65" x="24"/><use href="#g6c" x="36"/><use href="#g6f" x="48"/><use href="#g63" x="60"/></svg></div><div class="col" style="left:434px;top:172px;width:142px;height:1178px"><svg class="a" style="left:6px;top:288px" width="108" height="24"><use href="#g50" x="0"/><use href="#g45" x="12"/><use href="#g6587" x="36"/><use href="#g4ef6" x="60"/><use href="#g5934" x="84"/></svg><svg class="a" style="left:6px;top:312px" width="48" height="24"><use href="#g4ee3" x="0"/><use href="#g7801" x="24"/></svg><svg class="a" style="left:6px;top:336px" width="48" height="24"><use href="#g6570" x="0"/><use href="#g636e" x="24"/></svg><svg class="a" style="left:6px;top:408px" width="48" height="24"><use href="#g8d44" x="0"/><use href="#g6e90" x="24"/></svg><svg class="a" style="left:6px;top:432px" width="144" height="24"><use href="#g53" x="0"/><use href="#g46" x="12"/><use href="#g58" x="24"/><use href="#g2c" x="36"/><use href="#g8f93" x="48"/><use href="#g5165" x="72"/><use href="#g8868" x="96"/><use href="#g2c" x="120"/><use href="#g69" x="132"/></svg><svg class="a" style="left:6px;top:552px" width="108" height="24"><use href="#g50" x="0"/><use href="#g45" x="12"/><use href="#g6587" x="36"/><use href="#g4ef6" x="60"/><use href="#g5934" x="84"/></svg><svg class="a" style="left:6px;top:576px" width="144" height="24"><use href="#g4ee3" x="0"/><use href="#g7801" x="24"/><use href="#g2c" x="48"/><use href="#g8f93" x="60"/><use href="#g5165" x="84"/><use href="#g8868" x="108"/><use href="#g2c" x="132"/></svg><svg class="a" style="left:6px;top:600px" width="48" height="24"><use href="#g6570" x="0"/><use href="#g636e" x="24"/></svg><svg class="a" style="left:6px;top:624px" width="48" height="24"><use href="#g8d44" x="0"/><use href="#g6e90" x="24"/></svg><svg class="a" style="left:6px;top:648px" width="72" height="24"><use href="#g91cd" x="0"/><use href="#g5b9a" x="24"/><use href="#g4f4d" x="48"/></svg><svg class="a" style="left:6px;top:672px" width="108" height="24"><use href="#g50" x="0"/><use href="#g45" x="12"/><use href="#g6587" x="36"/><use href="#g4ef6" x="60"/><use href="#g5934" x="84"/></svg><svg class="a" style="left:6px;top:696px" width="144" height="24"><use href="#g4ee3" x="0"/><use href="#g7801" x="24"/><use href="#g2c" x="48"/><use href="#g8f93" x="60"/><use href="#g5165" x="84"/><use href="#g8868" x="108"/><use href="#g2c" x="132"/></svg><svg class="a" style="left:6px;top:720px" width="48" height="24"><use href="#g6570" x="0"/><use href="#g636e" x="24"/></svg><svg class="a" style="left:6px;top:744px" width="48" height="24"><use href="#g8d44" x="0"/><use href="#g6e90" x="24"/></svg><svg class="a" style="left:6px;top:768px" width="72" height="24"><use href="#g91cd" x="0"/><use href="#g5b9a" x="24"/><use href="#g4f4d" x="48"/></svg><svg class="a" style="left:6px;top:792px" width="108" height="24"><use href="#g50" x="0"/><use href="#g45" x="12"/><use href="#g6587" x="36"/><use href="#g4ef6" x="60"/><use href="#g5934" x="84"/></svg><svg class="a" style="left:6px;top:816px" width="144" height="24"><use href="#g4ee3" x="0"/><use href="#g7801" x="24"/><use href="#g2c" x="48"/><use href="#g8f93" x="60"/><use href="#g5165" x="84"/><use href="#g8868" x="108"/><use href="#g2c" x="132"/></svg><svg class="a" style="left:6px;top:840px" width="48" height="24"><use href="#g6570" x="0"/><use href="#g636e" x="24"/></svg><svg class="a" style="left:6px;top:864px" width="48" height="24"><use href="#g8d44" x="0"/><use href="#g6e90" x="24"/></svg><svg class="a" style="left:6px;top:888px" width="72" height="24"><use href="#g91cd" x="0"/><use href="#g5b9a" x="24"/><use href="#g4f4d" x="48"/></svg><svg class="a" style="left:6px;top:912px" width="108" height="24"><use href="#g50" x="0"/><use href="#g45" x="12"/><use href="#g6587" x="36"/><use href="#g4ef6" x="60"/><use href="#g5934" x="84"/></svg><svg class="a" style="left:6px;top:936px" width="144" height="24"><use href="#g4ee3" x="0"/><use href="#g7801" x="24"/><use href="#g2c" x="48"/><use href="#g8f93" x="60"/><use href="#g5165" x="84"/><use href="#g8868" x="108"/><use href="#g2c" x="132"/></svg><svg class="a" style="left:6px;top:960px" width="48" height="24"><use href="#g4ee3" x="0"/><use href="#g7801" x="24"/></svg><svg class="a" style="left:6px;top:984px" width="48" height="24"><use href="#g6570" x="0"/><use href="#g636e" x="24"/></svg><svg class="a" style="left:6px;top:1008px" width="48" height="24"><use href="#g8d44" x="0"/><use href="#g6e90" x="24"/></svg><svg class="a" style="left:6px;top:1032px" width="72" height="24"><use href="#g91cd" x="0"/><use href="#g5b9a" x="24"/><use href="#g4f4d" x="48"/></svg><svg class="a" style="left:6px;top:1056px" width="108" height="24"><use href="#g50" x="0"/><use href="#g45" x="12"/><use href="#g6587" x="36"/><use href="#g4ef6" x="60"/><use href="#g5934" x="84"/></svg><svg class="a" style="left:6px;top:1080px" width="144" height="24"><use href="#g4ee3" x="0"/><use href="#g7801" x="24"/><use href="#g2c" x="48"/><use href="#g8f93" x="60"/><use href="#g5165" x="84"/><use href="#g8868" x="108"/><use href="#g2c" x="132"/></svg><svg class="a" style="left:6px;top:1104px" width="48" height="24"><use href="#g6570" x="0"/><use href="#g636e" x="24"/></svg><svg class="a" style="left:6px;top:1128px" width="48" height="24"><use href="#g8d44" x="0"/><use href="#g6e90" x="24"/></svg><svg class="a" style="left:6px;top:1152px" width="72" height="24"><use href="#g91cd" x="0"/><use href="#g5b9a" x="24"/><use href="#g4f4d" x="48"/></svg></div><div class="col" style="left:578px;top:172px;width:58px;height:1178px"><svg class="a" style="left:6px;top:0px" width="36" height="24"><use href="#g4d" x="0"/><use href="#g61" x="12"/><use href="#g70" x="24"/></svg><svg class="a" style="left:6px;top:24px" width="36" height="24"><use href="#g4d" x="0"/><use href="#g61" x="12"/><use href="#g70" x="24"/></svg><svg class="a" style="left:6px;top:48px" width="36" height="24"><use href="#g4d" x="0"/><use href="#g61" x="12"/><use href="#g70" x="24"/></svg><svg class="a" style="left:6px;top:72px" width="36" height="24"><use href="#g4d" x="0"/><use href="#g61" x="12"/><use href="#g70" x="24"/></svg><svg class="a" style="left:6px;top:96px" width="36" height="24"><use href="#g4d" x="0"/><use href="#g61" x="12"/><use href="#g70" x="24"/></svg><svg class="a" style="left:6px;top:120px" width="48" height="24"><use href="#g50" x="0"/><use href="#g72" x="12"/><use href="#g69" x="24"/><use href="#g76" x="36"/></svg><svg class="a" style="left:6px;top:144px" width="48" height="24"><use href="#g50" x="0"/><use href="#g72" x="12"/><use href="#g69" x="24"/><use href="#g76" x="36"/></svg><svg class="a" style="left:6px;top:168px" width="48" height="24"><use href="#g50" x="0"/><use href="#g72" x="12"/><use href="#g69" x="24"/><use href="#g76" x="36"/></svg><svg class="a" style="left:6px;top:192px" width="48" height="24"><use href="#g50" x="0"/><use href="#g72" x="12"/><use href="#g69" x="24"/><use href="#g76" x="36"/></svg><svg class="a" style="left:6px;top:216px" width="48" height="24"><use href="#g50" x="0"/><use href="#g72" x="12"/><use href="#g69" x="24"/><use href="#g76" x="36"/></svg><svg class="a" style="left:6px;top:240px" width="48" height="24"><use href="#g50" x="0"/><use href="#g72" x="12"/><use href="#g69" x="24"/><use href="#g76" x="36"/></svg><svg class="a" style="left:6px;top:264px" width="48" height="24"><use href="#g50" x="0"/><use href="#g72" x="12"/><use href="#g69" x="24"/><use href="#g76" x="36"/></svg><svg class="a" style="left:6px;top:288px" width="48" height="24"><use href="#g49" x="0"/><use href="#g6d" x="12"/><use href="#g61" x="24"/><use href="#g67" x="36"/></svg><svg class="a" style="left:6px;top:312px" width="48" height="24"><use href="#g49" x="0"/><use href="#g6d" x="12"/><use href="#g61" x="24"/><use href="#g67" x="36"/></svg><svg class="a" style="left:6px;top:336px" width="48" height="24"><use href="#g49" x="0"/><use href="#g6d" x="12"/><use href="#g61" x="24"/><use href="#g67" x="36"/></svg><svg class="a" style="left:6px;top:360px" width="48" height="24"><use href="#g49" x="0"/><use href="#g6d" x="12"/><use href="#g61" x="24"/><use href="#g67" x="36"/></svg><svg class="a" style="left:6px;top:384px" width="48" height="24"><use href="#g49" x="0"/><use href="#g6d" x="12"/><use href="#g61" x="24"/><use href="#g67" x="36"/></svg><svg class="a" style="left:6px;top:408px" width="48" height="24"><use href="#g49" x="0"/><use href="#g6d" x="12"/><use href="#g61" x="24"/><use href="#g67" x="36"/></svg><svg class="a" style="left:6px;top:432px" width="48" height="24"><use href="#g49" x="0"/><use href="#g6d" x="12"/><use href="#g61" x="24"/><use href="#g67" x="36"/></svg><svg class="a" style="left:6px;top:456px" width="36" height="24"><use href="#g4d" x="0"/><use href="#g61" x="12"/><use href="#g70" x="24"/></svg><svg class="a" style="left:6px;top:480px" width="36" height="24"><use href="#g4d" x="0"/><use href="#g61" x="12"/><use href="#g70" x="24"/></svg><svg class="a" style="left:6px;top:504px" width="36" height="24"><use href="#g4d" x="0"/><use href="#g61" x="12"/><use href="#g70" x="24"/></svg><svg class="a" style="left:6px;top:528px" width="36" height="24"><use href="#g4d" x="0"/><use href="#g61" x="12"/><use href="#g70" x="24"/></svg><svg class="a" style="left:6px;top:552px" width="48" height="24"><use href="#g49" x="0"/><use href="#g6d" x="12"/><use href="#g61" x="24"/><use href="#g67" x="36"/></svg><svg class="a" style="left:6px;top:576px" width="48" height="24"><use href="#g49" x="0"/><use href="#g6d" x="12"/><use href="#g61" x="24"/><use href="#g67" x="36"/></svg><svg class="a" style="left:6px;top:600px" width="48" height="24"><use href="#g49" x="0"/><use href="#g6d" x="12"/><use href="#g61" x="24"/><use href="#g67" x="36"/></svg><svg class="a" style="left:6px;top:624px" width="48" height="24"><use href="#g49" x="0"/><use href="#g6d" x="12"/><use href="#g61" x="24"/><use href="#g67" x="36"/></svg><svg class="a" style="left:6px;top:648px" width="48" height="24"><use href="#g49" x="0"/><use href="#g6d" x="12"/><use href="#g61" x="24"/><use href="#g67" x="36"/></svg><svg class="a" style="left:6px;top:672px" width="48" height="24"><use href="#g49" x="0"/><use href="#g6d" x="12"/><use href="#g61" x="24"/><use href="#g67" x="36"/></svg><svg class="a" style="left:6px;top:696px" width="48" height="24"><use href="#g49" x="0"/><use href="#g6d" x="12"/><use href="#g61" x="24"/><use href="#g67" x="36"/></svg><svg class="a" style="left:6px;top:720px" width="48" height="24"><use href="#g49" x="0"/><use href="#g6d" x="12"/><use href="#g61" x="24"/><use href="#g67" x="36"/></svg><svg class="a" style="left:6px;top:744px" width="48" height="24"><use href="#g49" x="0"/><use href="#g6d" x="12"/><use href="#g61" x="24"/><use href="#g67" x="36"/></svg><svg class="a" style="left:6px;top:768px" width="48" height="24"><use href="#g49" x="0"/><use href="#g6d" x="12"/><use href="#g61" x="24"/><use href="#g67" x="36"/></svg><svg class="a" style="left:6px;top:792px" width="48" height="24"><use href="#g49" x="0"/><use href="#g6d" x="12"/><use href="#g61" x="24"/><use href="#g67" x="36"/></svg><svg class="a" style="left:6px;top:816px" width="48" height="24"><use href="#g49" x="0"/><use href="#g6d" x="12"/><use href="#g61" x="24"/><use href="#g67" x="36"/></svg><svg class="a" style="left:6px;top:840px" width="48" height="24"><use href="#g49" x="0"/><use href="#g6d" x="12"/><use href="#g61" x="24"/><use href="#g67" x="36"/></svg><svg class="a" style="left:6px;top:864px" width="48" height="24"><use href="#g49" x="0"/><use href="#g6d" x="12"/><use href="#g61" x="24"/><use href="#g67" x="36"/></svg><svg class="a" style="left:6px;top:888px" width="48" height="24"><use href="#g49" x="0"/><use href="#g6d" x="12"/><use href="#g61" x="24"/><use href="#g67" x="36"/></svg><svg class="a" style="left:6px;top:912px" width="48" height="24"><use href="#g49" x="0"/><use href="#g6d" x="12"/><use href="#g61" x="24"/><use href="#g67" x="36"/></svg><svg class="a" style="left:6px;top:936px" width="48" height="24"><use href="#g49" x="0"/><use href="#g6d" x="12"/><use href="#g61" x="24"/><use href="#g67" x="36"/></svg><svg class="a" style="left:6px;top:960px" width="48" height="24"><use href="#g49" x="0"/><use href="#g6d" x="12"/><use href="#g61" x="24"/><use href="#g67" x="36"/></svg><svg class="a" style="left:6px;top:984px" width="48" height="24"><use href="#g49" x="0"/><use href="#g6d" x="12"/><use href="#g61" x="24"/><use href="#g67" x="36"/></svg><svg class="a" style="left:6px;top:1008px" width="48" height="24"><use href="#g49" x="0"/><use href="#g6d" x="12"/><use href="#g61" x="24"/><use href="#g67" x="36"/></svg><svg class="a" style="left:6px;top:1032px" width="48" height="24"><use href="#g49" x="0"/><use href="#g6d" x="12"/><use href="#g61" x="24"/><use href="#g67" x="36"/></svg><svg class="a" style="left:6px;top:1056px" width="48" height="24"><use href="#g49" x="0"/><use href="#g6d" x="12"/><use href="#g61" x="24"/><use href="#g67" x="36"/></svg><svg class="a" style="left:6px;top:1080px" width="48" height="24"><use href="#g49" x="0"/><use href="#g6d" x="12"/><use href="#g61" x="24"/><use href="#g67" x="36"/></svg><svg class="a" style="left:6px;top:1104px" width="48" height="24"><use href="#g49" x="0"/><use href="#g6d" x="12"/><use href="#g61" x="24"/><use href="#g67" x="36"/></svg><svg class="a" style="left:6px;top:1128px" width="48" height="24"><use href="#g49" x="0"/><use href="#g6d" x="12"/><use href="#g61" x="24"/><use href="#g67" x="36"/></svg><svg class="a" style="left:6px;top:1152px" width="48" height="24"><use href="#g49" x="0"/><use href="#g6d" x="12"/><use href="#g61" x="24"/><use href="#g67" x="36"/></svg></div><div class="col" style="left:638px;top:172px;width:94px;height:1178px"><svg class="a" style="left:6px;top:0px" width="12" height="24"><use href="#g52" x="0"/></svg><svg class="a" style="left:6px;top:24px" width="12" height="24"><use href="#g52" x="0"/></svg><svg class="a" style="left:6px;top:48px" width="12" height="24"><use href="#g52" x="0"/></svg><svg class="a" style="left:6px;top:72px" width="12" height="24"><use href="#g52" x="0"/></svg><svg class="a" style="left:6px;top:96px" width="12" height="24"><use href="#g52" x="0"/></svg><svg class="a" style="left:6px;top:120px" width="36" height="24"><use href="#g52" x="0"/><use href="#g57" x="12"/><use href="#g45" x="24"/></svg><svg class="a" style="left:6px;top:144px" width="36" height="24"><use href="#g52" x="0"/><use href="#g57" x="12"/><use href="#g45" x="24"/></svg><svg class="a" style="left:6px;top:168px" width="36" height="24"><use href="#g52" x="0"/><use href="#g57" x="12"/><use href="#g45" x="24"/></svg><svg class="a" style="left:6px;top:192px" width="36" height="24"><use href="#g52" x="0"/><use href="#g57" x="12"/><use href="#g45" x="24"/></svg><svg class="a" style="left:6px;top:216px" width="36" height="24"><use href="#g52" x="0"/><use href="#g57" x="12"/><use href="#g45" x="24"/></svg><svg class="a" style="left:6px;top:240px" width="24" height="24"><use href="#g52" x="0"/><use href="#g57" x="12"/></svg><svg class="a" style="left:6px;top:264px" width="24" height="24"><use href="#g52" x="0"/><use href="#g57" x="12"/></svg><svg class="a" style="left:6px;top:288px" width="12" height="24"><use href="#g52" x="0"/></svg><svg class="a" style="left:6px;top:312px" width="12" height="24"><use href="#g52" x="0"/></svg><svg class="a" style="left:6px;top:336px" width="12" height="24"><use href="#g52" x="0"/></svg><svg class="a" style="left:6px;top:360px" width="12" height="24"><use href="#g52" x="0"/></svg><svg class="a" style="left:6px;top:384px" width="12" height="24"><use href="#g52" x="0"/></svg><svg class="a" style="left:6px;top:408px" width="12" height="24"><use href="#g52" x="0"/></svg><svg class="a" style="left:6px;top:432px" width="12" height="24"><use href="#g52" x="0"/></svg><svg class="a" style="left:6px;top:456px" width="36" height="24"><use href="#g52" x="0"/><use href="#g45" x="24"/></svg><svg class="a" style="left:6px;top:480px" width="36" height="24"><use href="#g52" x="0"/><use href="#g45" x="24"/></svg><svg class="a" style="left:6px;top:504px" width="12" height="24"><use href="#g52" x="0"/></svg><svg class="a" style="left:6px;top:528px" width="36" height="24"><use href="#g52" x="0"/><use href="#g45" x="24"/></svg><svg class="a" style="left:6px;top:552px" width="12" height="24"><use href="#g52" x="0"/></svg><svg class="a" style="left:6px;top:576px" width="12" height="24"><use href="#g52" x="0"/></svg><svg class="a" style="left:6px;top:600px" width="12" height="24"><use href="#g52" x="0"/></svg><svg class="a" style="left:6px;top:624px" width="12" height="24"><use href="#g52" x="0"/></svg><svg class="a" style="left:6px;top:648px" width="12" height="24"><use href="#g52" x="0"/></svg><svg class="a" style="left:6px;top:672px" width="12" height="24"><use href="#g52" x="0"/></svg><svg class="a" style="left:6px;top:696px" width="12" height="24"><use href="#g52" x="0"/></svg><svg class="a" style="left:6px;top:720px" width="12" height="24"><use href="#g52" x="0"/></svg><svg class="a" style="left:6px;top:744px" width="12" height="24"><use href="#g52" x="0"/></svg><svg class="a" style="left:6px;top:768px" width="12" height="24"><use href="#g52" x="0"/></svg><svg class="a" style="left:6px;top:792px" width="12" height="24"><use href="#g52" x="0"/></svg><svg class="a" style="left:6px;top:816px" width="12" height="24"><use href="#g52" x="0"/></svg><svg class="a" style="left:6px;top:840px" width="12" height="24"><use href="#g52" x="0"/></svg><svg class="a" style="left:6px;top:864px" width="12" height="24"><use href="#g52" x="0"/></svg><svg class="a" style="left:6px;top:888px" width="12" height="24"><use href="#g52" x="0"/></svg><svg class="a" style="left:6px;top:912px" width="12" height="24"><use href="#g52" x="0"/></svg><svg class="a" style="left:6px;top:936px" width="12" height="24"><use href="#g52" x="0"/></svg><svg class="a" style="left:6px;top:960px" width="12" height="24"><use href="#g52" x="0"/></svg><svg class="a" style="left:6px;top:984px" width="12" height="24"><use href="#g52" x="0"/></svg><svg class="a" style="left:6px;top:1008px" width="12" height="24"><use href="#g52" x="0"/></svg><svg class="a" style="left:6px;top:1032px" width="12" height="24"><use href="#g52" x="0"/></svg><svg class="a" style="left:6px;top:1056px" width="12" height="24"><use href="#g52" x="0"/></svg><svg class="a" style="left:6px;top:1080px" width="12" height="24"><use href="#g52" x="0"/></svg><svg class="a" style="left:6px;top:1104px" width="12" height="24"><use href="#g52" x="0"/></svg><svg class="a" style="left:6px;top:1128px" width="12" height="24"><use href="#g52" x="0"/></svg><svg class="a" style="left:6px;top:1152px" width="12" height="24"><use href="#g52" x="0"/></svg></div><div class="col" style="left:734px;top:172px;width:94px;height:1178px"><svg class="a" style="left:6px;top:0px" width="12" height="24"><use href="#g52" x="0"/></svg><svg class="a" style="left:6px;top:24px" width="12" height="24"><use href="#g52" x="0"/></svg><svg class="a" style="left:6px;top:48px" width="12" height="24"><use href="#g52" x="0"/></svg><svg class="a" style="left:6px;top:72px" width="12" height="24"><use href="#g52" x="0"/></svg><svg class="a" style="left:6px;top:96px" width="12" height="24"><use href="#g52" x="0"/></svg><svg class="a" style="left:6px;top:120px" width="36" height="24"><use href="#g52" x="0"/><use href="#g57" x="12"/><use href="#g45" x="24"/></svg><svg class="a" style="left:6px;top:144px" width="36" height="24"><use href="#g52" x="0"/><use href="#g57" x="12"/><use href="#g45" x="24"/></svg><svg class="a" style="left:6px;top:168px" width="36" height="24"><use href="#g52" x="0"/><use href="#g57" x="12"/><use href="#g45" x="24"/></svg><svg class="a" style="left:6px;top:192px" width="36" height="24"><use href="#g52" x="0"/><use href="#g57" x="12"/><use href="#g45" x="24"/></svg><svg class="a" style="left:6px;top:216px" width="36" height="24"><use href="#g52" x="0"/><use href="#g57" x="12"/><use href="#g45" x="24"/></svg><svg class="a" style="left:6px;top:240px" width="24" height="24"><use href="#g52" x="0"/><use href="#g57" x="12"/></svg><svg class="a" style="left:6px;top:264px" width="24" height="24"><use href="#g52" x="0"/><use href="#g57" x="12"/></svg><svg class="a" style="left:6px;top:288px" width="36" height="24"><use href="#g52" x="0"/><use href="#g57" x="12"/><use href="#g45" x="24"/></svg><svg class="a" style="left:6px;top:312px" width="36" height="24"><use href="#g52" x="0"/><use href="#g57" x="12"/><use href="#g45" x="24"/></svg><svg class="a" style="left:6px;top:336px" width="36" height="24"><use href="#g52" x="0"/><use href="#g57" x="12"/><use href="#g45" x="24"/></svg><svg class="a" style="left:6px;top:360px" width="36" height="24"><use href="#g52" x="0"/><use href="#g57" x="12"/><use href="#g45" x="24"/></svg><svg class="a" style="left:6px;top:384px" width="36" height="24"><use href="#g52" x="0"/><use href="#g57" x="12"/><use href="#g45" x="24"/></svg><svg class="a" style="left:6px;top:408px" width="36" height="24"><use href="#g52" x="0"/><use href="#g57" x="12"/><use href="#g45" x="24"/></svg><svg class="a" style="left:6px;top:432px" width="36" height="24"><use href="#g52" x="0"/><use href="#g57" x="12"/><use href="#g45" x="24"/></svg><svg class="a" style="left:6px;top:456px" width="36" height="24"><use href="#g52" x="0"/><use href="#g45" x="24"/></svg><svg class="a" style="left:6px;top:480px" width="36" height="24"><use href="#g52" x="0"/><use href="#g45" x="24"/></svg><svg class="a" style="left:6px;top:504px" width="12" height="24"><use href="#g52" x="0"/></svg><svg class="a" style="left:6px;top:528px" width="36" height="24"><use href="#g52" x="0"/><use href="#g45" x="24"/></svg><svg class="a" style="left:6px;top:552px" width="36" height="24"><use href="#g52" x="0"/><use href="#g57" x="12"/><use href="#g45" x="24"/></svg><svg class="a" style="left:6px;top:576px" width="36" height="24"><use href="#g52" x="0"/><use href="#g57" x="12"/><use href="#g45" x="24"/></svg><svg class="a" style="left:6px;top:600px" width="36" height="24"><use href="#g52" x="0"/><use href="#g57" x="12"/><use href="#g45" x="24"/></svg><svg class="a" style="left:6px;top:624px" width="36" height="24"><use href="#g52" x="0"/><use href="#g57" x="12"/><use href="#g45" x="24"/></svg><svg class="a" style="left:6px;top:648px" width="36" height="24"><use href="#g52" x="0"/><use href="#g57" x="12"/><use href="#g45" x="24"/></svg><svg class="a" style="left:6px;top:672px" width="36" height="24"><use href="#g52" x="0"/><use href="#g57" x="12"/><use href="#g45" x="24"/></svg><svg class="a" style="left:6px;top:696px" width="36" height="24"><use href="#g52" x="0"/><use href="#g57" x="12"/><use href="#g45" x="24"/></svg><svg class="a" style="left:6px;top:720px" width="36" height="24"><use href="#g52" x="0"/><use href="#g57" x="12"/><use href="#g45" x="24"/></svg><svg class="a" style="left:6px;top:744px" width="36" height="24"><use href="#g52" x="0"/><use href="#g57" x="12"/><use href="#g45" x="24"/></svg><svg class="a" style="left:6px;top:768px" width="36" height="24"><use href="#g52" x="0"/><use href="#g57" x="12"/><use href="#g45" x="24"/></svg><svg class="a" style="left:6px;top:792px" width="36" height="24"><use href="#g52" x="0"/><use href="#g57" x="12"/><use href="#g45" x="24"/></svg><svg class="a" style="left:6px;top:816px" width="36" height="24"><use href="#g52" x="0"/><use href="#g57" x="12"/><use href="#g45" x="24"/></svg><svg class="a" style="left:6px;top:840px" width="36" height="24"><use href="#g52" x="0"/><use href="#g57" x="12"/><use href="#g45" x="24"/></svg><svg class="a" style="left:6px;top:864px" width="36" height="24"><use href="#g52" x="0"/><use href="#g57" x="12"/><use href="#g45" x="24"/></svg><svg class="a" style="left:6px;top:888px" width="36" height="24"><use href="#g52" x="0"/><use href="#g57" x="12"/><use href="#g45" x="24"/></svg><svg class="a" style="left:6px;top:912px" width="36" height="24"><use href="#g52" x="0"/><use href="#g57" x="12"/><use href="#g45" x="24"/></svg><svg class="a" style="left:6px;top:936px" width="36" height="24"><use href="#g52" x="0"/><use href="#g57" x="12"/><use href="#g45" x="24"/></svg><svg class="a" style="left:6px;top:960px" width="36" height="24"><use href="#g52" x="0"/><use href="#g57" x="12"/><use href="#g45" x="24"/></svg><svg class="a" style="left:6px;top:984px" width="36" height="24"><use href="#g52" x="0"/><use href="#g57" x="12"/><use href="#g45" x="24"/></svg><svg class="a" style="left:6px;top:1008px" width="36" height="24"><use href="#g52" x="0"/><use href="#g57" x="12"/><use href="#g45" x="24"/></svg><svg class="a" style="left:6px;top:1032px" width="36" height="24"><use href="#g52" x="0"/><use href="#g57" x="12"/><use href="#g45" x="24"/></svg><svg class="a" style="left:6px;top:1056px" width="36" height="24"><use href="#g52" x="0"/><use href="#g57" x="12"/><use href="#g45" x="24"/></svg><svg class="a" style="left:6px;top:1080px" width="36" height="24"><use href="#g52" x="0"/><use href="#g57" x="12"/><use href="#g45" x="24"/></svg><svg class="a" style="left:6px;top:1104px" width="36" height="24"><use href="#g52" x="0"/><use href="#g57" x="12"/><use href="#g45" x="24"/></svg><svg class="a" style="left:6px;top:1128px" width="36" height="24"><use href="#g52" x="0"/><use href="#g57" x="12"/><use href="#g45" x="24"/></svg><svg class="a" style="left:6px;top:1152px" width="36" height="24"><use href="#g52" x="0"/><use href="#g57" x="12"/><use href="#g45" x="24"/></svg></div><div class="col" style="left:830px;top:172px;width:1538px;height:1178px"><svg class="a" style="left:6px;top:0px" width="624" height="24"><use href="#g5c" x="0"/><use href="#g44" x="12"/><use href="#g65" x="24"/><use href="#g76" x="36"/><use href="#g69" x="48"/><use href="#g63" x="60"/><use href="#g65" x="72"/><use href="#g5c" x="84"/><use href="#g48" x="96"/><use href="#g61" x="108"/><use href="#g72" x="120"/><use href="#g64" x="132"/><use href="#g64" x="144"/><use href="#g69" x="156"/><use href="#g73" x="168"/><use href="#g6b" x="180"/><use href="#g56" x="192"/><use href="#g6f" x="204"/><use href="#g6c" x="216"/><use href="#g75" x="228"/><use href="#g6d" x="240"/><use href="#g65" x="252"/><use href="#g31" x="264"/><use href="#g5c" x="276"/><use href="#g57" x="288"/><use href="#g49" x="300"/><use href="#g4e" x="312"/><use href="#g44" x="324"/><use href="#g4f" x="336"/><use href="#g57" x="348"/><use href="#g53" x="360"/><use href="#g5c" x="372"/><use href="#g73" x="384"/><use href="#g79" x="396"/><use href="#g73" x="408"/><use href="#g74" x="420"/><use href="#g65" x="432"/><use href="#g6d" x="444"/><use href="#g33" x="456"/><use href="#g32" x="468"/><use href="#g5c" x="480"/><use href="#g75" x="492"/><use href="#g6e" x="504"/><use href="#g69" x="516"/><use href="#g63" x="528"/><use href="#g6f" x="540"/><use href="#g64" x="552"/><use href="#g65" x="564"/><use href="#g2e" x="576"/><use href="#g6e" x="588"/><use href="#g6c" x="600"/><use href="#g73" x="612"/></svg><svg class="a" style="left:6px;top:24px" width="612" height="24"><use href="#g5c" x="0"/><use href="#g44" x="12"/><use href="#g65" x="24"/><use href="#g76" x="36"/><use href="#g69" x="48"/><use href="#g63" x="60"/><use href="#g65" x="72"/><use href="#g5c" x="84"/><use href="#g48" x="96"/><use href="#g61" x="108"/><use href="#g72" x="120"/><use href="#g64" x="132"/><use href="#g64" x="144"/><use href="#g69" x="156"/><use href="#g73" x="168"/><use href="#g6b" x="180"/><use href="#g56" x="192"/><use href="#g6f" x="204"/><use href="#g6c" x="216"/><use href="#g75" x="228"/><use href="#g6d" x="240"/><use href="#g65" x="252"/><use href="#g31" x="264"/><use href="#g5c" x="276"/><use href="#g57" x="288"/><use href="#g49" x="300"/><use href="#g4e" x="312"/><use href="#g44" x="324"/><use href="#g4f" x="336"/><use href="#g57" x="348"/><use href="#g53" x="360"/><use href="#g5c" x="372"/><use href="#g73" x="384"/><use href="#g79" x="396"/><use href="#g73" x="408"/><use href="#g74" x="420"/><use href="#g65" x="432"/><use href="#g6d" x="444"/><use href="#g33" x="456"/><use href="#g32" x="468"/><use href="#g5c" x="480"/><use href="#g6c" x="492"/><use href="#g6f" x="504"/><use href="#g63" x="516"/><use href="#g61" x="528"/><use href="#g6c" x="540"/><use href="#g65" x="552"/><use href="#g2e" x="564"/><use href="#g6e" x="576"/><use href="#g6c" x="588"/><use href="#g73" x="600"/></svg><svg class="a" style="left:6px;top:48px" width="624" height="24"><use href="#g5c" x="0"/><use href="#g44" x="12"/><use href="#g65" x="24"/><use href="#g76" x="36"/><use href="#g69" x="48"/><use href="#g63" x="60"/><use href="#g65" x="72"/><use href="#g5c" x="84"/><use href="#g48" x="96"/><use href="#g61" x="108"/><use href="#g72" x="120"/><use href="#g64" x="132"/><use href="#g64" x="144"/><use href="#g69" x="156"/><use href="#g73" x="168"/><use href="#g6b" x="180"/><use href="#g56" x="192"/><use href="#g6f" x="204"/><use href="#g6c" x="216"/><use href="#g75" x="228"/><use href="#g6d" x="240"/><use href="#g65" x="252"/><use href="#g31" x="264"/><use href="#g5c" x="276"/><use href="#g57" x="288"/><use href="#g49" x="300"/><use href="#g4e" x="312"/><use href="#g44" x="324"/><use href="#g4f" x="336"/><use href="#g57" x="348"/><use href="#g53" x="360"/><use href="#g5c" x="372"/><use href="#g73" x="384"/><use href="#g79" x="396"/><use href="#g73" x="408"/><use href="#g74" x="420"/><use href="#g65" x="432"/><use href="#g6d" x="444"/><use href="#g33" x="456"/><use href="#g32" x="468"/><use href="#g5c" x="480"/><use href="#g73" x="492"/><use href="#g6f" x="504"/><use href="#g72" x="516"/><use href="#g74" x="528"/><use href="#g6b" x="540"/><use href="#g65" x="552"/><use href="#g79" x="564"/><use href="#g2e" x="576"/><use href="#g6e" x="588"/><use href="#g6c" x="600"/><use href="#g73" x="612"/></svg><svg class="a" style="left:6px;top:72px" width="636" height="24"><use href="#g5c" x="0"/><use href="#g44" x="12"/><use href="#g65" x="24"/><use href="#g76" x="36"/><use href="#g69" x="48"/><use href="#g63" x="60"/><use href="#g65" x="72"/><use href="#g5c" x="84"/><use href="#g48" x="96"/><use href="#g61" x="108"/><use href="#g72" x="120"/><use href="#g64" x="132"/><use href="#g64" x="144"/><use href="#g69" x="156"/><use href="#g73" x="168"/><use href="#g6b" x="180"/><use href="#g56" x="192"/><use href="#g6f" x="204"/><use href="#g6c" x="216"/><use href="#g75" x="228"/><use href="#g6d" x="240"/><use href="#g65" x="252"/><use href="#g31" x="264"/><use href="#g5c" x="276"/><use href="#g57" x="288"/><use href="#g49" x="300"/><use href="#g4e" x="312"/><use href="#g44" x="324"/><use href="#g4f" x="336"/><use href="#g57" x="348"/><use href="#g53" x="360"/><use href="#g5c" x="372"/><use href="#g73" x="384"/><use href="#g79" x="396"/><use href="#g73" x="408"/><use href="#g74" x="420"/><use href="#g65" x="432"/><use href="#g6d" x="444"/><use href="#g33" x="456"/><use href="#g32" x="468"/><use href="#g5c" x="480"/><use href="#g73" x="492"/><use href="#g6f" x="504"/><use href="#g72" x="516"/><use href="#g74" x="528"/><use href="#g74" x="540"/><use href="#g62" x="552"/><use href="#g6c" x="564"/><use href="#g73" x="576"/><use href="#g2e" x="588"/><use href="#g6e" x="600"/><use href="#g6c" x="612"/><use href="#g73" x="624"/></svg></div>
<div class="a" style="left:2368px;top:142px;width:34px;height:1208px;background:linear-gradient(to right,#EEEDE5,#F6F5EF 40%,#FDFDFA)"></div>
<div class="a" style="left:2368px;top:140px;width:34px;height:34px;border:2px solid #80A6F8;background:linear-gradient(#F0F2FE,#E2E8FE 50%,#B8CCFA 50%,#BED2FA);box-shadow:inset 0 0 0 2px rgba(255,255,255,0.85)"></div><svg class="a" style="left:2376px;top:142px" width="18" height="22"><path d="M0 14 h4 v-2 h2 v-2 h2 v-2 h2 v2 h2 v2 h2 v2 h4 v2 h-2 v2 h-2 v-2 h-2 v-2 h-2 v-2 h-2 v2 h-2 v2 h-2 v2 h-2 v-2 h-2z" fill="#2A4EA8"/></svg>
<div class="a" style="left:2368px;top:1316px;width:34px;height:34px;border:2px solid #80A6F8;background:linear-gradient(#F0F2FE,#E2E8FE 50%,#B8CCFA 50%,#BED2FA);box-shadow:inset 0 0 0 2px rgba(255,255,255,0.85)"></div><svg class="a" style="left:2376px;top:1326px" width="18" height="14"><path d="M0 2 h2 v-2 h2 v2 h2 v2 h2 v2 h2 v-2 h2 v-2 h2 v-2 h2 v2 h2 v2 h-2 v2 h-2 v2 h-2 v2 h-2 v2 h-2 v-2 h-2 v-2 h-2 v-2 h-2 v-2 h-2z" fill="#2A4EA8"/></svg>
<div class="a" style="left:2368px;top:491px;width:34px;height:32px;border:2px solid #98B4F8;border-radius:2px;background:linear-gradient(to right,#C6D6FC,#D8E4FE 50%,#BCD0F8);box-shadow:inset 0 0 0 1px rgba(255,255,255,0.7)"></div>
<svg class="a" style="left:2378px;top:499px" width="14" height="16"><g stroke="#5C7ED8" stroke-width="1.6"><line x1="1" y1="2" x2="13" y2="2"/><line x1="1" y1="6" x2="13" y2="6"/><line x1="1" y1="10" x2="13" y2="10"/><line x1="1" y1="14" x2="13" y2="14"/></g></svg>
<div class="a" style="left:859px;top:376px;color:#E8141E;font-family:'Liberation Sans';font-size:30px;line-height:40px">相同区段</div>
<div class="a" style="left:834px;top:454px;width:824px;height:551px;background:#FFFBF0;box-shadow:0 0 22px 6px rgba(110,150,235,0.75);overflow:hidden">
<div class="vd" style="left:102px;top:0;height:551px"></div>
<div class="vd" style="left:210px;top:0;height:551px"></div>
<div class="vd" style="left:318px;top:0;height:551px"></div>
<div class="vd" style="left:426px;top:0;height:551px"></div>
<div class="vd" style="left:570px;top:0;height:551px"></div>
<div class="vd" style="left:630px;top:0;height:551px"></div>
<div class="vd" style="left:726px;top:0;height:551px"></div>
<div class="vd" style="left:822px;top:0;height:551px"></div>
</div>
<div class="a" style="left:834px;top:454px;width:824px;height:551px;overflow:hidden"><div class="a" style="left:-834px;top:-454px;width:2404px;height:1438px"><div class="col" style="left:828px;top:456px;width:108px;height:549px"><svg class="a" style="left:8px;top:0px" width="96" height="24"><use href="#g30" x="0"/><use href="#g30" x="12"/><use href="#g34" x="24"/><use href="#g30" x="36"/><use href="#g30" x="48"/><use href="#g30" x="60"/><use href="#g30" x="72"/><use href="#g30" x="84"/></svg><svg class="a" style="left:8px;top:24px" width="96" height="24"><use href="#g30" x="0"/><use href="#g30" x="12"/><use href="#g34" x="24"/><use href="#g30" x="36"/><use href="#g31" x="48"/><use href="#g30" x="60"/><use href="#g30" x="72"/><use href="#g30" x="84"/></svg><svg class="a" style="left:8px;top:48px" width="96" height="24"><use href="#g30" x="0"/><use href="#g30" x="12"/><use href="#g34" x="24"/><use href="#g34" x="36"/><use href="#g42" x="48"/><use href="#g30" x="60"/><use href="#g30" x="72"/><use href="#g30" x="84"/></svg><svg class="a" style="left:8px;top:72px" width="96" height="24"><use href="#g30" x="0"/><use href="#g30" x="12"/><use href="#g34" x="24"/><use href="#g35" x="36"/><use href="#g37" x="48"/><use href="#g30" x="60"/><use href="#g30" x="72"/><use href="#g30" x="84"/></svg><svg class="a" style="left:8px;top:96px" width="96" height="24"><use href="#g30" x="0"/><use href="#g30" x="12"/><use href="#g34" x="24"/><use href="#g36" x="36"/><use href="#g30" x="48"/><use href="#g30" x="60"/><use href="#g30" x="72"/><use href="#g30" x="84"/></svg><svg class="a" style="left:8px;top:120px" width="96" height="24"><use href="#g30" x="0"/><use href="#g30" x="12"/><use href="#g34" x="24"/><use href="#g36" x="36"/><use href="#g33" x="48"/><use href="#g30" x="60"/><use href="#g30" x="72"/><use href="#g30" x="84"/></svg><svg class="a" style="left:8px;top:144px" width="96" height="24"><use href="#g30" x="0"/><use href="#g30" x="12"/><use href="#g34" x="24"/><use href="#g36" x="36"/><use href="#g35" x="48"/><use href="#g30" x="60"/><use href="#g30" x="72"/><use href="#g30" x="84"/></svg><svg class="a" style="left:8px;top:168px" width="96" height="24"><use href="#g30" x="0"/><use href="#g30" x="12"/><use href="#g34" x="24"/><use href="#g37" x="36"/><use href="#g30" x="48"/><use href="#g30" x="60"/><use href="#g30" x="72"/><use href="#g30" x="84"/></svg><svg class="a" style="left:8px;top:192px" width="96" height="24"><use href="#g30" x="0"/><use href="#g30" x="12"/><use href="#g35" x="24"/><use href="#g33" x="36"/><use href="#g30" x="48"/><use href="#g30" x="60"/><use href="#g30" x="72"/><use href="#g30" x="84"/></svg><svg class="a" style="left:8px;top:216px" width="96" height="24"><use href="#g30" x="0"/><use href="#g30" x="12"/><use href="#g35" x="24"/><use href="#g34" x="36"/><use href="#g30" x="48"/><use href="#g30" x="60"/><use href="#g30" x="72"/><use href="#g30" x="84"/></svg><svg class="a" style="left:8px;top:240px" width="96" height="24"><use href="#g30" x="0"/><use href="#g30" x="12"/><use href="#g36" x="24"/><use href="#g35" x="36"/><use href="#g30" x="48"/><use href="#g30" x="60"/><use href="#g30" x="72"/><use href="#g30" x="84"/></svg><svg class="a" style="left:8px;top:264px" width="96" height="24"><use href="#g30" x="0"/><use href="#g30" x="12"/><use href="#g39" x="24"/><use href="#g41" x="36"/><use href="#g30" x="48"/><use href="#g30" x="60"/><use href="#g30" x="72"/><use href="#g30" x="84"/></svg><svg class="a" style="left:8px;top:288px" width="96" height="24"><use href="#g30" x="0"/><use href="#g30" x="12"/><use href="#g41" x="24"/><use href="#g32" x="36"/><use href="#g30" x="48"/><use href="#g30" x="60"/><use href="#g30" x="72"/><use href="#g30" x="84"/></svg><svg class="a" style="left:8px;top:312px" width="96" height="24"><use href="#g30" x="0"/><use href="#g30" x="12"/><use href="#g41" x="24"/><use href="#g33" x="36"/><use href="#g30" x="48"/><use href="#g30" x="60"/><use href="#g30" x="72"/><use href="#g30" x="84"/></svg><svg class="a" style="left:8px;top:336px" width="96" height="24"><use href="#g30" x="0"/><use href="#g30" x="12"/><use href="#g41" x="24"/><use href="#g34" x="36"/><use href="#g30" x="48"/><use href="#g30" x="60"/><use href="#g30" x="72"/><use href="#g30" x="84"/></svg><svg class="a" style="left:8px;top:360px" width="96" height="24"><use href="#g30" x="0"/><use href="#g30" x="12"/><use href="#g41" x="24"/><use href="#g35" x="36"/><use href="#g30" x="48"/><use href="#g30" x="60"/><use href="#g30" x="72"/><use href="#g30" x="84"/></svg><svg class="a" style="left:8px;top:384px" width="96" height="24"><use href="#g30" x="0"/><use href="#g30" x="12"/><use href="#g41" x="24"/><use href="#g36" x="36"/><use href="#g30" x="48"/><use href="#g30" x="60"/><use href="#g30" x="72"/><use href="#g30" x="84"/></svg><svg class="a" style="left:8px;top:408px" width="96" height="24"><use href="#g30" x="0"/><use href="#g30" x="12"/><use href="#g41" x="24"/><use href="#g37" x="36"/><use href="#g30" x="48"/><use href="#g30" x="60"/><use href="#g30" x="72"/><use href="#g30" x="84"/></svg><svg class="a" style="left:8px;top:432px" width="96" height="24"><use href="#g30" x="0"/><use href="#g30" x="12"/><use href="#g41" x="24"/><use href="#g38" x="36"/><use href="#g30" x="48"/><use href="#g30" x="60"/><use href="#g30" x="72"/><use href="#g30" x="84"/></svg><svg class="a" style="left:8px;top:456px" width="96" height="24"><use href="#g30" x="0"/><use href="#g30" x="12"/><use href="#g41" x="24"/><use href="#g39" x="36"/><use href="#g30" x="48"/><use href="#g30" x="60"/><use href="#g30" x="72"/><use href="#g30" x="84"/></svg><svg class="a" style="left:8px;top:480px" width="96" height="24"><use href="#g30" x="0"/><use href="#g30" x="12"/><use href="#g41" x="24"/><use href="#g41" x="36"/><use href="#g30" x="48"/><use href="#g30" x="60"/><use href="#g30" x="72"/><use href="#g30" x="84"/></svg><svg class="a" style="left:8px;top:504px" width="96" height="24"><use href="#g30" x="0"/><use href="#g30" x="12"/><use href="#g41" x="24"/><use href="#g42" x="36"/><use href="#g30" x="48"/><use href="#g30" x="60"/><use href="#g30" x="72"/><use href="#g30" x="84"/></svg><svg class="a" style="left:8px;top:528px" width="96" height="24"><use href="#g30" x="0"/><use href="#g30" x="12"/><use href="#g42" x="24"/><use href="#g31" x="36"/><use href="#g30" x="48"/><use href="#g30" x="60"/><use href="#g30" x="72"/><use href="#g30" x="84"/></svg></div><div class="col" style="left:938px;top:456px;width:106px;height:549px"><svg class="a" style="left:6px;top:0px" width="96" height="24"><use href="#g30" x="0"/><use href="#g30" x="12"/><use href="#g30" x="24"/><use href="#g30" x="36"/><use href="#g31" x="48"/><use href="#g30" x="60"/><use href="#g30" x="72"/><use href="#g30" x="84"/></svg><svg class="a" style="left:6px;top:24px" width="96" height="24"><use href="#g30" x="0"/><use href="#g30" x="12"/><use href="#g30" x="24"/><use href="#g34" x="36"/><use href="#g41" x="48"/><use href="#g30" x="60"/><use href="#g30" x="72"/><use href="#g30" x="84"/></svg><svg class="a" style="left:6px;top:48px" width="96" height="24"><use href="#g30" x="0"/><use href="#g30" x="12"/><use href="#g30" x="24"/><use href="#g30" x="36"/><use href="#g43" x="48"/><use href="#g30" x="60"/><use href="#g30" x="72"/><use href="#g30" x="84"/></svg><svg class="a" style="left:6px;top:72px" width="96" height="24"><use href="#g30" x="0"/><use href="#g30" x="12"/><use href="#g30" x="24"/><use href="#g30" x="36"/><use href="#g39" x="48"/><use href="#g30" x="60"/><use href="#g30" x="72"/><use href="#g30" x="84"/></svg><svg class="a" style="left:6px;top:96px" width="96" height="24"><use href="#g30" x="0"/><use href="#g30" x="12"/><use href="#g30" x="24"/><use href="#g30" x="36"/><use href="#g33" x="48"/><use href="#g30" x="60"/><use href="#g30" x="72"/><use href="#g30" x="84"/></svg><svg class="a" style="left:6px;top:120px" width="96" height="24"><use href="#g30" x="0"/><use href="#g30" x="12"/><use href="#g30" x="24"/><use href="#g30" x="36"/><use href="#g32" x="48"/><use href="#g30" x="60"/><use href="#g30" x="72"/><use href="#g30" x="84"/></svg><svg class="a" style="left:6px;top:144px" width="96" height="24"><use href="#g30" x="0"/><use href="#g30" x="12"/><use href="#g30" x="24"/><use href="#g30" x="36"/><use href="#g34" x="48"/><use href="#g30" x="60"/><use href="#g30" x="72"/><use href="#g30" x="84"/></svg><svg class="a" style="left:6px;top:168px" width="96" height="24"><use href="#g30" x="0"/><use href="#g30" x="12"/><use href="#g30" x="24"/><use href="#g30" x="36"/><use href="#g45" x="48"/><use href="#g30" x="60"/><use href="#g30" x="72"/><use href="#g30" x="84"/></svg><svg class="a" style="left:6px;top:192px" width="96" height="24"><use href="#g30" x="0"/><use href="#g30" x="12"/><use href="#g30" x="24"/><use href="#g30" x="36"/><use href="#g32" x="48"/><use href="#g30" x="60"/><use href="#g30" x="72"/><use href="#g30" x="84"/></svg><svg class="a" style="left:6px;top:216px" width="96" height="24"><use href="#g30" x="0"/><use href="#g30" x="12"/><use href="#g31" x="24"/><use href="#g30" x="36"/><use href="#g33" x="48"/><use href="#g30" x="60"/><use href="#g30" x="72"/><use href="#g30" x="84"/></svg><svg class="a" style="left:6px;top:240px" width="96" height="24"><use href="#g30" x="0"/><use href="#g30" x="12"/><use href="#g30" x="24"/><use href="#g42" x="36"/><use href="#g41" x="48"/><use href="#g30" x="60"/><use href="#g30" x="72"/><use href="#g30" x="84"/></svg><svg class="a" style="left:6px;top:264px" width="96" height="24"><use href="#g30" x="0"/><use href="#g30" x="12"/><use href="#g30" x="24"/><use href="#g30" x="36"/><use href="#g31" x="48"/><use href="#g30" x="60"/><use href="#g30" x="72"/><use href="#g30" x="84"/></svg><svg class="a" style="left:6px;top:288px" width="96" height="24"><use href="#g30" x="0"/><use href="#g30" x="12"/><use href="#g30" x="24"/><use href="#g30" x="36"/><use href="#g32" x="48"/><use href="#g30" x="60"/><use href="#g30" x="72"/><use href="#g30" x="84"/></svg><svg class="a" style="left:6px;top:312px" width="96" height="24"><use href="#g30" x="0"/><use href="#g30" x="12"/><use href="#g30" x="24"/><use href="#g30" x="36"/><use href="#g32" x="48"/><use href="#g30" x="60"/><use href="#g30" x="72"/><use href="#g30" x="84"/></svg><svg class="a" style="left:6px;top:336px" width="96" height="24"><use href="#g30" x="0"/><use href="#g30" x="12"/><use href="#g30" x="24"/><use href="#g30" x="36"/><use href="#g31" x="48"/><use href="#g30" x="60"/><use href="#g30" x="72"/><use href="#g30" x="84"/></svg><svg class="a" style="left:6px;top:360px" width="96" height="24"><use href="#g30" x="0"/><use href="#g30" x="12"/><use href="#g30" x="24"/><use href="#g30" x="36"/><use href="#g34" x="48"/><use href="#g30" x="60"/><use href="#g30" x="72"/><use href="#g30" x="84"/></svg><svg class="a" style="left:6px;top:384px" width="96" height="24"><use href="#g30" x="0"/><use href="#g30" x="12"/><use href="#g30" x="24"/><use href="#g30" x="36"/><use href="#g33" x="48"/><use href="#g30" x="60"/><use href="#g30" x="72"/><use href="#g30" x="84"/></svg><svg class="a" style="left:6px;top:408px" width="96" height="24"><use href="#g30" x="0"/><use href="#g30" x="12"/><use href="#g30" x="24"/><use href="#g30" x="36"/><use href="#g34" x="48"/><use href="#g30" x="60"/><use href="#g30" x="72"/><use href="#g30" x="84"/></svg><svg class="a" style="left:6px;top:432px" width="96" height="24"><use href="#g30" x="0"/><use href="#g30" x="12"/><use href="#g30" x="24"/><use href="#g30" x="36"/><use href="#g32" x="48"/><use href="#g30" x="60"/><use href="#g30" x="72"/><use href="#g30" x="84"/></svg><svg class="a" style="left:6px;top:456px" width="96" height="24"><use href="#g30" x="0"/><use href="#g30" x="12"/><use href="#g30" x="24"/><use href="#g30" x="36"/><use href="#g33" x="48"/><use href="#g30" x="60"/><use href="#g30" x="72"/><use href="#g30" x="84"/></svg><svg class="a" style="left:6px;top:480px" width="96" height="24"><use href="#g30" x="0"/><use href="#g30" x="12"/><use href="#g30" x="24"/><use href="#g30" x="36"/><use href="#g32" x="48"/><use href="#g30" x="60"/><use href="#g30" x="72"/><use href="#g30" x="84"/></svg><svg class="a" style="left:6px;top:504px" width="96" height="24"><use href="#g30" x="0"/><use href="#g30" x="12"/><use href="#g30" x="24"/><use href="#g30" x="36"/><use href="#g31" x="48"/><use href="#g30" x="60"/><use href="#g30" x="72"/><use href="#g30" x="84"/></svg><svg class="a" style="left:6px;top:528px" width="96" height="24"><use href="#g30" x="0"/><use href="#g30" x="12"/><use href="#g30" x="24"/><use href="#g30" x="36"/><use href="#g32" x="48"/><use href="#g30" x="60"/><use href="#g30" x="72"/><use href="#g30" x="84"/></svg></div><div class="col" style="left:1046px;top:456px;width:106px;height:549px"><svg class="a" style="left:6px;top:0px" width="96" height="24"><use href="#g55" x="0"/><use href="#g6e" x="12"/><use href="#g50" x="24"/><use href="#g61" x="36"/><use href="#g63" x="48"/><use href="#g6b" x="60"/><use href="#g4d" x="72"/><use href="#g65" x="84"/></svg><svg class="a" style="left:6px;top:24px" width="96" height="24"><use href="#g55" x="0"/><use href="#g6e" x="12"/><use href="#g50" x="24"/><use href="#g61" x="36"/><use href="#g63" x="48"/><use href="#g6b" x="60"/><use href="#g4d" x="72"/><use href="#g65" x="84"/></svg><svg class="a" style="left:6px;top:48px" width="96" height="24"><use href="#g55" x="0"/><use href="#g6e" x="12"/><use href="#g50" x="24"/><use href="#g61" x="36"/><use href="#g63" x="48"/><use href="#g6b" x="60"/><use href="#g4d" x="72"/><use href="#g65" x="84"/></svg><svg class="a" style="left:6px;top:72px" width="96" height="24"><use href="#g55" x="0"/><use href="#g6e" x="12"/><use href="#g50" x="24"/><use href="#g61" x="36"/><use href="#g63" x="48"/><use href="#g6b" x="60"/><use href="#g4d" x="72"/><use href="#g65" x="84"/></svg><svg class="a" style="left:6px;top:96px" width="96" height="24"><use href="#g55" x="0"/><use href="#g6e" x="12"/><use href="#g50" x="24"/><use href="#g61" x="36"/><use href="#g63" x="48"/><use href="#g6b" x="60"/><use href="#g4d" x="72"/><use href="#g65" x="84"/></svg><svg class="a" style="left:6px;top:120px" width="96" height="24"><use href="#g55" x="0"/><use href="#g6e" x="12"/><use href="#g50" x="24"/><use href="#g61" x="36"/><use href="#g63" x="48"/><use href="#g6b" x="60"/><use href="#g4d" x="72"/><use href="#g65" x="84"/></svg><svg class="a" style="left:6px;top:144px" width="96" height="24"><use href="#g55" x="0"/><use href="#g6e" x="12"/><use href="#g50" x="24"/><use href="#g61" x="36"/><use href="#g63" x="48"/><use href="#g6b" x="60"/><use href="#g4d" x="72"/><use href="#g65" x="84"/></svg></div><div class="col" style="left:1154px;top:456px;width:106px;height:549px"><svg class="a" style="left:6px;top:24px" width="72" height="24"><use href="#g2e" x="0"/><use href="#g74" x="12"/><use href="#g65" x="24"/><use href="#g64" x="36"/><use href="#g64" x="48"/><use href="#g79" x="60"/></svg><svg class="a" style="left:6px;top:48px" width="72" height="24"><use href="#g2e" x="0"/><use href="#g74" x="12"/><use href="#g65" x="24"/><use href="#g64" x="36"/><use href="#g64" x="48"/><use href="#g79" x="60"/></svg><svg class="a" style="left:6px;top:72px" width="72" height="24"><use href="#g2e" x="0"/><use href="#g74" x="12"/><use href="#g65" x="24"/><use href="#g64" x="36"/><use href="#g64" x="48"/><use href="#g79" x="60"/></svg><svg class="a" style="left:6px;top:96px" width="72" height="24"><use href="#g2e" x="0"/><use href="#g74" x="12"/><use href="#g65" x="24"/><use href="#g64" x="36"/><use href="#g64" x="48"/><use href="#g79" x="60"/></svg><svg class="a" style="left:6px;top:120px" width="60" height="24"><use href="#g2e" x="0"/><use href="#g72" x="12"/><use href="#g73" x="24"/><use href="#g72" x="36"/><use href="#g63" x="48"/></svg><svg class="a" style="left:6px;top:144px" width="72" height="24"><use href="#g2e" x="0"/><use href="#g74" x="12"/><use href="#g65" x="24"/><use href="#g64" x="36"/><use href="#g64" x="48"/><use href="#g79" x="60"/></svg></div><div class="col" style="left:1262px;top:456px;width:142px;height:549px"><svg class="a" style="left:6px;top:0px" width="108" height="24"><use href="#g50" x="0"/><use href="#g45" x="12"/><use href="#g6587" x="36"/><use href="#g4ef6" x="60"/><use href="#g5934" x="84"/></svg><svg class="a" style="left:6px;top:24px" width="48" height="24"><use href="#g4ee3" x="0"/><use href="#g7801" x="24"/></svg><svg class="a" style="left:6px;top:48px" width="48" height="24"><use href="#g6570" x="0"/><use href="#g636e" x="24"/></svg><svg class="a" style="left:6px;top:120px" width="48" height="24"><use href="#g8d44" x="0"/><use href="#g6e90" x="24"/></svg><svg class="a" style="left:6px;top:144px" width="144" height="24"><use href="#g53" x="0"/><use href="#g46" x="12"/><use href="#g58" x="24"/><use href="#g2c" x="36"/><use href="#g8f93" x="48"/><use href="#g5165" x="72"/><use href="#g8868" x="96"/><use href="#g2c" x="120"/><use href="#g69" x="132"/></svg></div><div class="col" style="left:1406px;top:456px;width:58px;height:549px"><svg class="a" style="left:6px;top:0px" width="48" height="24"><use href="#g49" x="0"/><use href="#g6d" x="12"/><use href="#g61" x="24"/><use href="#g67" x="36"/></svg><svg class="a" style="left:6px;top:24px" width="48" height="24"><use href="#g49" x="0"/><use href="#g6d" x="12"/><use href="#g61" x="24"/><use href="#g67" x="36"/></svg><svg class="a" style="left:6px;top:48px" width="48" height="24"><use href="#g49" x="0"/><use href="#g6d" x="12"/><use href="#g61" x="24"/><use href="#g67" x="36"/></svg><svg class="a" style="left:6px;top:72px" width="48" height="24"><use href="#g49" x="0"/><use href="#g6d" x="12"/><use href="#g61" x="24"/><use href="#g67" x="36"/></svg><svg class="a" style="left:6px;top:96px" width="48" height="24"><use href="#g49" x="0"/><use href="#g6d" x="12"/><use href="#g61" x="24"/><use href="#g67" x="36"/></svg><svg class="a" style="left:6px;top:120px" width="48" height="24"><use href="#g49" x="0"/><use href="#g6d" x="12"/><use href="#g61" x="24"/><use href="#g67" x="36"/></svg><svg class="a" style="left:6px;top:144px" width="48" height="24"><use href="#g49" x="0"/><use href="#g6d" x="12"/><use href="#g61" x="24"/><use href="#g67" x="36"/></svg><svg class="a" style="left:6px;top:168px" width="36" height="24"><use href="#g4d" x="0"/><use href="#g61" x="12"/><use href="#g70" x="24"/></svg><svg class="a" style="left:6px;top:192px" width="36" height="24"><use href="#g4d" x="0"/><use href="#g61" x="12"/><use href="#g70" x="24"/></svg><svg class="a" style="left:6px;top:216px" width="36" height="24"><use href="#g4d" x="0"/><use href="#g61" x="12"/><use href="#g70" x="24"/></svg><svg class="a" style="left:6px;top:240px" width="36" height="24"><use href="#g4d" x="0"/><use href="#g61" x="12"/><use href="#g70" x="24"/></svg><svg class="a" style="left:6px;top:264px" width="48" height="24"><use href="#g50" x="0"/><use href="#g72" x="12"/><use href="#g69" x="24"/><use href="#g76" x="36"/></svg><svg class="a" style="left:6px;top:288px" width="48" height="24"><use href="#g50" x="0"/><use href="#g72" x="12"/><use href="#g69" x="24"/><use href="#g76" x="36"/></svg><svg class="a" style="left:6px;top:312px" width="48" height="24"><use href="#g50" x="0"/><use href="#g72" x="12"/><use href="#g69" x="24"/><use href="#g76" x="36"/></svg><svg class="a" style="left:6px;top:336px" width="48" height="24"><use href="#g50" x="0"/><use href="#g72" x="12"/><use href="#g69" x="24"/><use href="#g76" x="36"/></svg><svg class="a" style="left:6px;top:360px" width="48" height="24"><use href="#g50" x="0"/><use href="#g72" x="12"/><use href="#g69" x="24"/><use href="#g76" x="36"/></svg><svg class="a" style="left:6px;top:384px" width="36" height="24"><use href="#g4d" x="0"/><use href="#g61" x="12"/><use href="#g70" x="24"/></svg><svg class="a" style="left:6px;top:408px" width="48" height="24"><use href="#g50" x="0"/><use href="#g72" x="12"/><use href="#g69" x="24"/><use href="#g76" x="36"/></svg><svg class="a" style="left:6px;top:432px" width="36" height="24"><use href="#g4d" x="0"/><use href="#g61" x="12"/><use href="#g70" x="24"/></svg><svg class="a" style="left:6px;top:456px" width="48" height="24"><use href="#g50" x="0"/><use href="#g72" x="12"/><use href="#g69" x="24"/><use href="#g76" x="36"/></svg><svg class="a" style="left:6px;top:480px" width="36" height="24"><use href="#g4d" x="0"/><use href="#g61" x="12"/><use href="#g70" x="24"/></svg><svg class="a" style="left:6px;top:504px" width="48" height="24"><use href="#g50" x="0"/><use href="#g72" x="12"/><use href="#g69" x="24"/><use href="#g76" x="36"/></svg><svg class="a" style="left:6px;top:528px" width="36" height="24"><use href="#g4d" x="0"/><use href="#g61" x="12"/><use href="#g70" x="24"/></svg></div><div class="col" style="left:1466px;top:456px;width:94px;height:549px"><svg class="a" style="left:6px;top:0px" width="24" height="24"><use href="#g52" x="0"/><use href="#g57" x="12"/></svg><svg class="a" style="left:6px;top:24px" width="24" height="24"><use href="#g52" x="0"/><use href="#g57" x="12"/></svg><svg class="a" style="left:6px;top:48px" width="24" height="24"><use href="#g52" x="0"/><use href="#g57" x="12"/></svg><svg class="a" style="left:6px;top:72px" width="24" height="24"><use href="#g52" x="0"/><use href="#g57" x="12"/></svg><svg class="a" style="left:6px;top:96px" width="24" height="24"><use href="#g52" x="0"/><use href="#g57" x="12"/></svg><svg class="a" style="left:6px;top:120px" width="24" height="24"><use href="#g52" x="0"/><use href="#g57" x="12"/></svg><svg class="a" style="left:6px;top:144px" width="24" height="24"><use href="#g52" x="0"/><use href="#g57" x="12"/></svg><svg class="a" style="left:6px;top:168px" width="36" height="24"><use href="#g52" x="0"/><use href="#g45" x="24"/></svg><svg class="a" style="left:6px;top:192px" width="36" height="24"><use href="#g52" x="0"/><use href="#g45" x="24"/></svg><svg class="a" style="left:6px;top:216px" width="12" height="24"><use href="#g52" x="0"/></svg><svg class="a" style="left:6px;top:240px" width="36" height="24"><use href="#g52" x="0"/><use href="#g45" x="24"/></svg><svg class="a" style="left:6px;top:264px" width="24" height="24"><use href="#g52" x="0"/><use href="#g57" x="12"/></svg><svg class="a" style="left:6px;top:288px" width="24" height="24"><use href="#g52" x="0"/><use href="#g57" x="12"/></svg><svg class="a" style="left:6px;top:312px" width="24" height="24"><use href="#g52" x="0"/><use href="#g57" x="12"/></svg><svg class="a" style="left:6px;top:336px" width="24" height="24"><use href="#g52" x="0"/><use href="#g57" x="12"/></svg><svg class="a" style="left:6px;top:360px" width="24" height="24"><use href="#g52" x="0"/><use href="#g57" x="12"/></svg><svg class="a" style="left:6px;top:384px" width="12" height="24"><use href="#g52" x="0"/></svg><svg class="a" style="left:6px;top:408px" width="24" height="24"><use href="#g52" x="0"/><use href="#g57" x="12"/></svg><svg class="a" style="left:6px;top:432px" width="12" height="24"><use href="#g52" x="0"/></svg><svg class="a" style="left:6px;top:456px" width="24" height="24"><use href="#g52" x="0"/><use href="#g57" x="12"/></svg><svg class="a" style="left:6px;top:480px" width="12" height="24"><use href="#g52" x="0"/></svg><svg class="a" style="left:6px;top:504px" width="24" height="24"><use href="#g52" x="0"/><use href="#g57" x="12"/></svg><svg class="a" style="left:6px;top:528px" width="12" height="24"><use href="#g52" x="0"/></svg></div><div class="col" style="left:1562px;top:456px;width:94px;height:549px"><svg class="a" style="left:6px;top:0px" width="36" height="24"><use href="#g52" x="0"/><use href="#g57" x="12"/><use href="#g45" x="24"/></svg><svg class="a" style="left:6px;top:24px" width="36" height="24"><use href="#g52" x="0"/><use href="#g57" x="12"/><use href="#g45" x="24"/></svg><svg class="a" style="left:6px;top:48px" width="36" height="24"><use href="#g52" x="0"/><use href="#g57" x="12"/><use href="#g45" x="24"/></svg><svg class="a" style="left:6px;top:72px" width="36" height="24"><use href="#g52" x="0"/><use href="#g57" x="12"/><use href="#g45" x="24"/></svg><svg class="a" style="left:6px;top:96px" width="36" height="24"><use href="#g52" x="0"/><use href="#g57" x="12"/><use href="#g45" x="24"/></svg><svg class="a" style="left:6px;top:120px" width="36" height="24"><use href="#g52" x="0"/><use href="#g57" x="12"/><use href="#g45" x="24"/></svg><svg class="a" style="left:6px;top:144px" width="36" height="24"><use href="#g52" x="0"/><use href="#g57" x="12"/><use href="#g45" x="24"/></svg><svg class="a" style="left:6px;top:168px" width="36" height="24"><use href="#g52" x="0"/><use href="#g45" x="24"/></svg><svg class="a" style="left:6px;top:192px" width="36" height="24"><use href="#g52" x="0"/><use href="#g45" x="24"/></svg><svg class="a" style="left:6px;top:216px" width="12" height="24"><use href="#g52" x="0"/></svg><svg class="a" style="left:6px;top:240px" width="36" height="24"><use href="#g52" x="0"/><use href="#g45" x="24"/></svg><svg class="a" style="left:6px;top:264px" width="24" height="24"><use href="#g52" x="0"/><use href="#g57" x="12"/></svg><svg class="a" style="left:6px;top:288px" width="24" height="24"><use href="#g52" x="0"/><use href="#g57" x="12"/></svg><svg class="a" style="left:6px;top:312px" width="24" height="24"><use href="#g52" x="0"/><use href="#g57" x="12"/></svg><svg class="a" style="left:6px;top:336px" width="24" height="24"><use href="#g52" x="0"/><use href="#g57" x="12"/></svg><svg class="a" style="left:6px;top:360px" width="24" height="24"><use href="#g52" x="0"/><use href="#g57" x="12"/></svg><svg class="a" style="left:6px;top:384px" width="12" height="24"><use href="#g52" x="0"/></svg><svg class="a" style="left:6px;top:408px" width="24" height="24"><use href="#g52" x="0"/><use href="#g57" x="12"/></svg><svg class="a" style="left:6px;top:432px" width="12" height="24"><use href="#g52" x="0"/></svg><svg class="a" style="left:6px;top:456px" width="24" height="24"><use href="#g52" x="0"/><use href="#g57" x="12"/></svg><svg class="a" style="left:6px;top:480px" width="12" height="24"><use href="#g52" x="0"/></svg><svg class="a" style="left:6px;top:504px" width="24" height="24"><use href="#g52" x="0"/><use href="#g57" x="12"/></svg><svg class="a" style="left:6px;top:528px" width="12" height="24"><use href="#g52" x="0"/></svg></div></div></div>
<div class="a" style="left:0;top:454px;width:727px;height:273px;border:4px solid #E81E25"></div>
<div class="a" style="left:834px;top:454px;width:826px;height:268px;border:4px solid #E81E25"></div>
<div class="a" style="left:2px;top:1350px;width:2400px;height:50px;background:#ECE9D8"></div>
<span class="c" style="left:12px;top:1364px">命令</span>
<div class="a" style="left:80px;top:1368px;width:5px;height:5px;background:#000"></div><div class="a" style="left:80px;top:1378px;width:5px;height:5px;background:#000"></div>
<div class="a" style="left:126px;top:1356px;width:400px;height:40px;background:#fff;border-top:2px solid #ACA899;border-left:2px solid #ACA899;border-right:2px solid #fff;border-bottom:2px solid #fff"></div>
<div class="a" style="left:128px;top:1358px;width:396px;height:36px;border-top:2px solid #716F64;border-left:2px solid #716F64;border-right:2px solid #F1EFE2;border-bottom:2px solid #F1EFE2"></div>
<div class="a" style="left:488px;top:1360px;width:34px;height:32px;background:#ECE9D8;border-top:2px solid #F1EFE2;border-left:2px solid #F1EFE2;border-right:2px solid #716F64;border-bottom:2px solid #716F64"></div>
<div class="a" style="left:490px;top:1362px;width:30px;height:28px;border-top:2px solid #fff;border-left:2px solid #fff;border-right:2px solid #ACA899;border-bottom:2px solid #ACA899"></div>
<svg class="a" style="left:496px;top:1372px" width="14" height="8"><path d="M0 0 H14 V2 H12 V4 H10 V6 H8 V8 H6 V6 H4 V4 H2 V2 H0z" fill="#000"/></svg>
<div class="a" style="left:532px;top:1356px;width:1866px;height:38px;background:#ECE9D8;border-top:2px solid #ACA899;border-left:2px solid #ACA899;border-right:2px solid #fff;border-bottom:2px solid #fff"></div>
<div class="a" style="left:484px;top:1348px;width:2px;height:2px;background:#000"></div>
<div class="a" style="left:504px;top:1348px;width:2px;height:2px;background:#000"></div>
<div class="a" style="left:514px;top:1348px;width:2px;height:2px;background:#000"></div>
<div class="a" style="left:536px;top:1348px;width:2px;height:2px;background:#000"></div>
<div class="a" style="left:2px;top:1400px;width:2400px;height:4px;background:#fff"></div>
<div class="a" style="left:2px;top:1402px;width:2400px;height:2px;background:#D0D0D0"></div>
<div class="a" style="left:2px;top:1402px;width:2400px;height:36px;background:#fff"></div>
<div class="a" style="left:4px;top:1404px;width:2127px;height:34px;background:#C0C0C0;border-top:2px solid #808080;border-left:2px solid #808080;border-right:2px solid #fff;border-bottom:2px solid #fff"></div>
<div class="a" style="left:2134px;top:1404px;width:80px;height:34px;background:#C0C0C0;border-top:2px solid #808080;border-left:2px solid #808080;border-right:2px solid #fff;border-bottom:2px solid #fff"></div>
<div class="a" style="left:2218px;top:1404px;width:182px;height:34px;background:#FFFF33;border-top:2px solid #808080;border-left:2px solid #808080;border-right:2px solid #fff;border-bottom:2px solid #fff"></div>
<span class="c" style="left:12px;top:1407px;font-size:26px;line-height:26px">程序入口点</span>
<span class="c" style="left:2226px;top:1407px;color:#F00000;font-size:26px;line-height:26px">暂停</span>
</body></html>
